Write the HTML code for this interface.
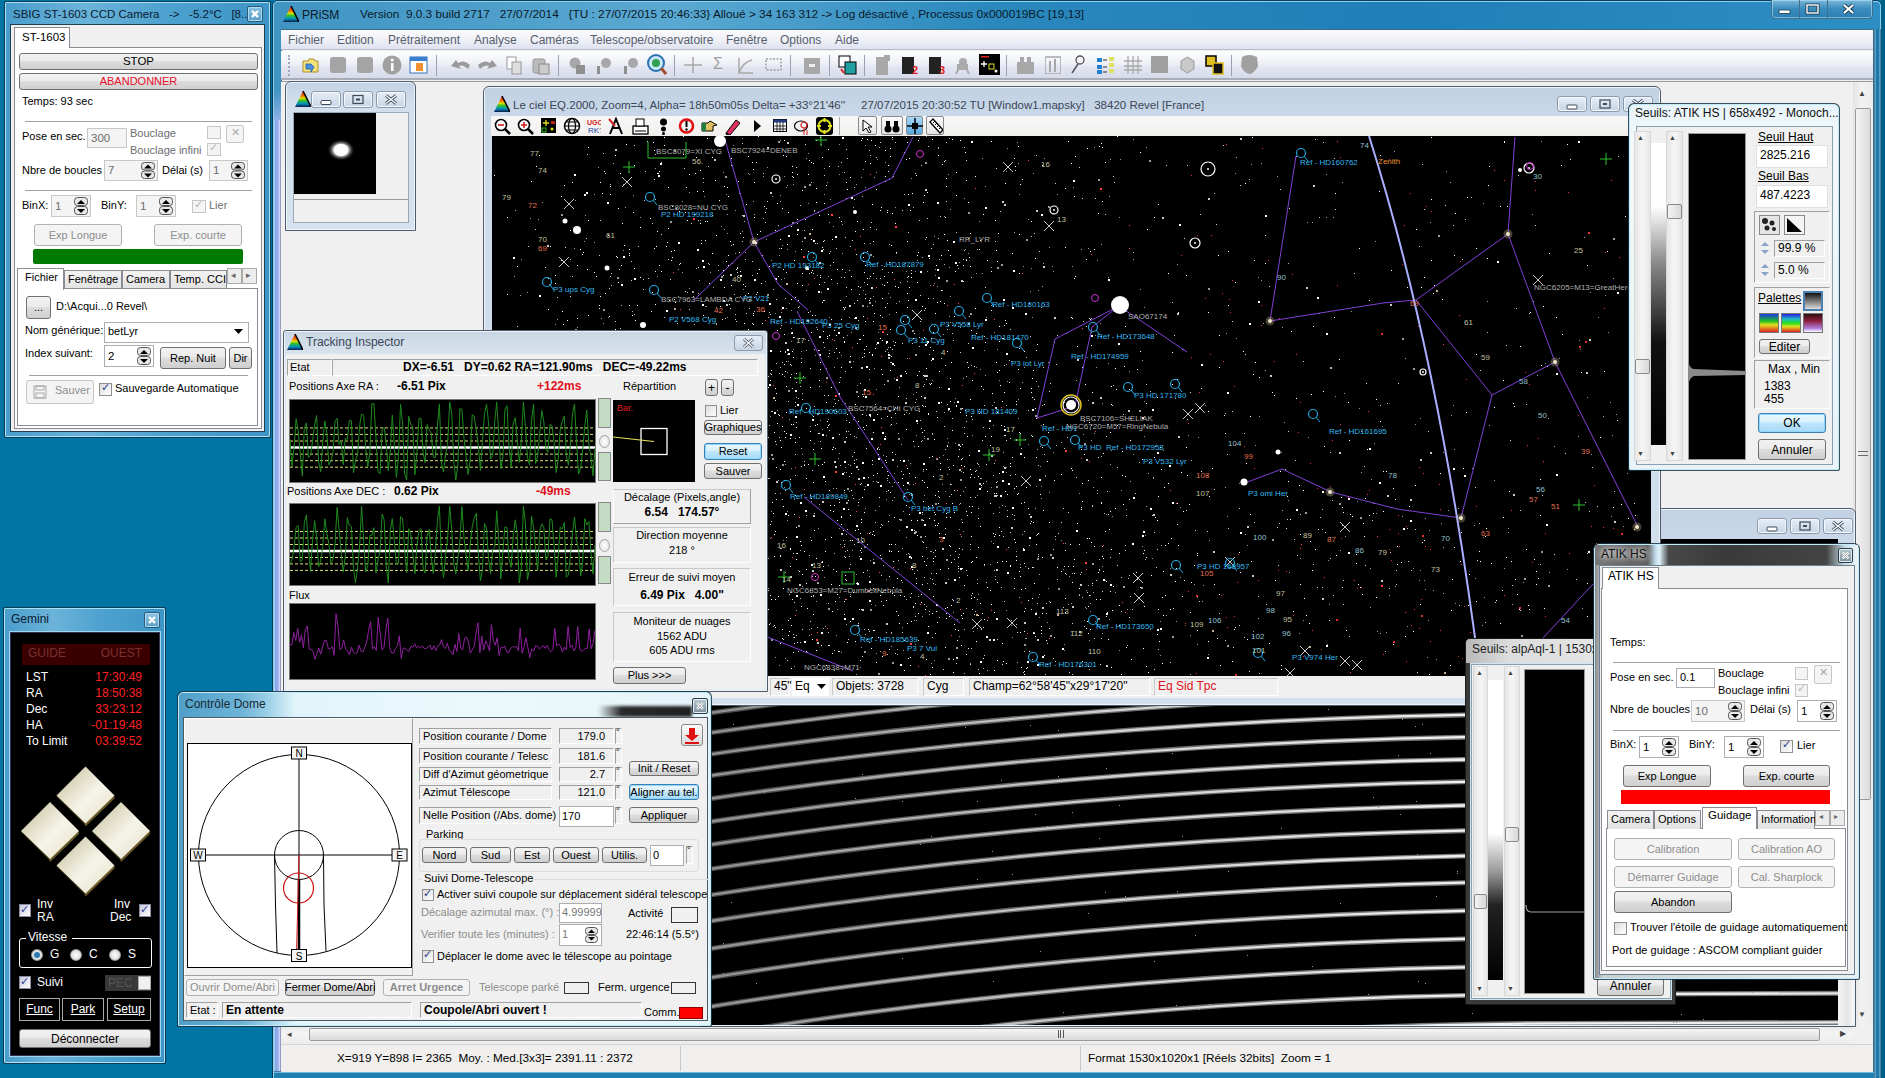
<!DOCTYPE html><html><head><meta charset="utf-8"><style>
*{margin:0;padding:0;box-sizing:border-box}
html,body{width:1885px;height:1078px;overflow:hidden;background:#0075a3;font-family:"Liberation Sans",sans-serif;font-size:11px;color:#000}
body>div,body>svg{position:absolute}
div{position:absolute}
.t{white-space:pre;line-height:1;}
.btn{border:1px solid #707070;border-radius:3px;background:linear-gradient(#f2f2f2 0%,#ebebeb 45%,#dddddd 50%,#cfcfcf 100%);}
.btnd{border:1px solid #adb2b5;border-radius:3px;background:#f4f4f4;}
.btnb{border:1px solid #3c7fb1;border-radius:3px;background:linear-gradient(#eaf6fd 0%,#d9f0fc 45%,#bee6fd 50%,#a7d9f5 100%);box-shadow:inset 0 0 0 1px #8fd8ff;}
.inp{background:#fff;border:1px solid #abadb3;border-top-color:#abadb3;}
.inpd{background:#f4f4f4;border:1px solid #c8c8c8;}
.pan{border:1px solid;border-color:#a0a0a0 #fff #fff #a0a0a0;}
.pan2{border:1px solid;border-color:#fff #a0a0a0 #a0a0a0 #fff;}
.cb{background:linear-gradient(135deg,#dcdcdc,#fff);border:1px solid #8f8f8f;}
.cbd{background:#f4f4f4;border:1px solid #c6c6c6;}
.gray{color:#8d8d8d}
.red{color:#e8001c}
.b{font-weight:bold}
.tb{background:linear-gradient(#ffffff 0%,#f0f0f7 40%,#e4e6f2 60%,#dcdfee 100%);}
</style></head><body><div style="left:272px;top:0px;width:1610px;height:1078px;background:linear-gradient(90deg,#3f94c2 0%,#5aa9d2 25%,#2a88bd 45%,#1f7fb8 70%,#2d8fc4 100%);border-left:1px solid #0a3a5a;border-right:1px solid #0a3a5a;border-top:1px solid #0b3f5e;border-radius:6px 6px 0 0;"></div><div style="left:273px;top:1px;width:1608px;height:1077px;border:1px solid #8fd0ef;border-bottom:none;border-radius:5px 5px 0 0;"></div><div style="left:274px;top:120px;width:7px;height:958px;background:linear-gradient(90deg,#b0dcfa 0%,#7fa6e0 25%,#9fb0f0 60%,#d8e0ff 85%,#5a6080 100%)"></div><div style="left:274px;top:90px;width:7px;height:30px;background:linear-gradient(rgba(0,0,0,0),#8fb0e8)"></div><div style="left:1874px;top:29px;width:7px;height:1049px;background:linear-gradient(90deg,#0a3050 0%,#8fd0f0 14%,#2078a8 28%,#2078a8 72%,#8fd0f0 86%,#0a3050 100%)"></div><div style="left:1881px;top:0px;width:4px;height:1078px;background:#005f88"></div><div style="left:274px;top:1071px;width:1600px;height:7px;background:linear-gradient(#0a3050 0%,#8fd0f0 15%,#1f80b0 35%)"></div><svg style="position:absolute;left:283px;top:6px;" width="16" height="16" viewBox="0 0 16 16"><defs><linearGradient id="pg2836" x1="0" y1="0" x2="0" y2="1"><stop offset="0" stop-color="#e01010"/><stop offset=".3" stop-color="#f07000"/><stop offset=".45" stop-color="#e0e000"/><stop offset=".6" stop-color="#30c030"/><stop offset=".8" stop-color="#0090c0"/><stop offset="1" stop-color="#101848"/></linearGradient></defs><polygon points="8.0,0 16,16 0,16" fill="url(#pg2836)"/><line x1="8.0" y1="0" x2="16" y2="16" stroke="#000" stroke-width="1.5"/></svg><div class="t" style="left:302px;top:9.44px;font-size:12px;color:#0a1a2a">PRiSM</div><div class="t" style="left:360px;top:9.47px;font-size:11.8px;color:#0a1a2a;word-spacing:0px">Version  9.0.3 build 2717   27/07/2014   {TU : 27/07/2015 20:46:33} Alloué &gt; 34 163 312 -&gt; Log désactivé , Processus 0x000019BC [19,13]</div><div style="left:1771px;top:0px;width:102px;height:19px;border:1px solid #3e6f8c;border-top:none;border-radius:0 0 4px 4px;background:linear-gradient(#7ab8da,#3a8cbc 50%,#2a80b4);box-shadow:inset 0 0 0 1px rgba(200,235,255,.5)"></div><div style="left:1799px;top:0px;width:1px;height:18px;background:#3e6f8c"></div><div style="left:1827px;top:0px;width:1px;height:18px;background:#3e6f8c"></div><svg style="position:absolute;left:1771px;top:0px;" width="102" height="19" viewBox="0 0 102 19"><rect x="8" y="10" width="11" height="3.5" fill="#fff" stroke="#1b3a50" stroke-width=".8"/><rect x="36" y="5" width="11" height="8" fill="none" stroke="#1b3a50" stroke-width="3"/><rect x="36" y="5" width="11" height="8" fill="none" stroke="#fff" stroke-width="1.4"/><path d="M73 5 L82 13 M82 5 L73 13" stroke="#1b3a50" stroke-width="4"/><path d="M73 5 L82 13 M82 5 L73 13" stroke="#fff" stroke-width="2.2"/></svg><div style="left:281px;top:29px;width:1593px;height:1043px;background:#f0f0f0;border:1px solid #3a6b8a;"></div><div style="left:281px;top:30px;width:1592px;height:20px;background:linear-gradient(#fbfbfd 0%,#f0f1f8 50%,#dfe3f0 100%);border-bottom:1px solid #b8bcc8"></div><div class="t" style="left:288px;top:34.44px;font-size:12px;color:#56606c">Fichier</div><div class="t" style="left:337px;top:34.44px;font-size:12px;color:#56606c">Edition</div><div class="t" style="left:388px;top:34.44px;font-size:12px;color:#56606c">Prétraitement</div><div class="t" style="left:474px;top:34.44px;font-size:12px;color:#56606c">Analyse</div><div class="t" style="left:530px;top:34.44px;font-size:12px;color:#56606c">Caméras</div><div class="t" style="left:590px;top:34.44px;font-size:12px;color:#56606c">Telescope/observatoire</div><div class="t" style="left:726px;top:34.44px;font-size:12px;color:#56606c">Fenêtre</div><div class="t" style="left:780px;top:34.44px;font-size:12px;color:#56606c">Options</div><div class="t" style="left:835px;top:34.44px;font-size:12px;color:#56606c">Aide</div><div style="left:281px;top:51px;width:1592px;height:29px;background:linear-gradient(#fdfdfe 0%,#eef0f7 45%,#e2e5f1 60%,#d7dbe9 100%);border-top:1px solid #fff;border-bottom:2px solid #a9adb8"></div><div style="left:288px;top:55px;width:2px;height:21px;border-left:2px dotted #a0a8c0"></div><div style="left:281px;top:81px;width:1592px;height:963px;background:#f0f0f0;border-top:1px solid #9a9a9a"></div><div style="left:1853px;top:82px;width:20px;height:945px;background:linear-gradient(90deg,#e3e3e3,#f2f2f2 40%,#ececec);"></div><div style="left:1855px;top:108px;width:16px;height:692px;border:1px solid #9a9a9a;border-radius:2px;background:linear-gradient(90deg,#f3f3f3,#dcdcdc);"></div><div style="left:1858px;top:451px;width:10px;height:5px;border-top:1px solid #666;border-bottom:1px solid #666;"></div><div class="t" style="left:1858px;top:89.96px;font-size:8px;color:#444">▲</div><div class="t" style="left:1858px;top:1010.96px;font-size:8px;color:#444">▼</div><div style="left:281px;top:1026px;width:1572px;height:18px;background:linear-gradient(#e8e8e8,#f4f4f4 40%,#ececec);"></div><div class="t" style="left:287px;top:1029.83px;font-size:9px;color:#444">◂</div><div style="left:309px;top:1028px;width:1511px;height:13px;border:1px solid #9a9a9a;border-radius:2px;background:linear-gradient(#f6f6f6,#dadada);"></div><div style="left:1058px;top:1030px;width:6px;height:8px;border-left:1px solid #555;border-right:1px solid #555;"></div><div style="left:1060px;top:1030px;width:1px;height:8px;background:#555"></div><div class="t" style="left:1840px;top:1029.96px;font-size:8px;color:#444">▶</div><div style="left:281px;top:1044px;width:1592px;height:28px;background:#f0efee;border-top:1px solid #d4d4d4"></div><div style="left:1080px;top:1046px;width:1px;height:25px;background:#c8c8c8"></div><div class="t" style="left:337px;top:1053.47px;font-size:11.8px;">X=919 Y=898 I= 2365  Moy. : Med.[3x3]= 2391.11 : 2372</div><div style="left:680px;top:1046px;width:1px;height:25px;background:#c8c8c8"></div><div class="t" style="left:1088px;top:1053.47px;font-size:11.8px;">Format 1530x1020x1 [Réels 32bits]  Zoom = 1</div><div style="left:4px;top:1px;width:267px;height:437px;background:#123a52;border-radius:2px"></div><div style="left:5px;top:2px;width:265px;height:435px;background:linear-gradient(90deg,#4a9dcc 0%,#6bb3d9 30%,#4ea2cf 60%,#3d95c6 100%);border:1px solid #a8e2f8;border-radius:1px"></div><div class="t" style="left:13px;top:8.5px;font-size:11.5px;color:#0a1a30">SBIG ST-1603 CCD Camera   -&gt;   -5.2°C   [8...</div><div style="left:247px;top:6px;width:16px;height:16px;border:1px solid #2d5a76;border-radius:2px;background:linear-gradient(#8cc4e2,#5a9ec8);box-shadow:inset 0 0 0 1px #a8dcf4;"></div><svg style="position:absolute;left:247px;top:6px;" width="16" height="16" viewBox="0 0 16 16"><path d="M5.0 5.0 L11.0 11.0 M11.0 5.0 L5.0 11.0" stroke="#fff" stroke-width="2.4"/></svg><div style="left:10px;top:24px;width:255px;height:408px;background:#f0f0f0;border:1px solid #1f3f55"></div><div style="left:14px;top:27px;width:56px;height:21px;background:#fff;border:1px solid #898c95;border-bottom:none"></div><div class="t" style="left:22px;top:31.5px;font-size:11.5px;">ST-1603</div><div style="left:14px;top:47px;width:248px;height:382px;background:#fff;border:1px solid #898c95"></div><div style="left:15px;top:47px;width:54px;height:2px;background:#fff"></div><div class="btn" style="left:19px;top:53px;width:239px;height:17px;"></div><div class="t" style="left:19px;width:239px;text-align:center;top:55.8px;font-size:11.5px;color:#000">STOP</div><div class="btn" style="left:19px;top:73px;width:239px;height:17px;"></div><div class="t" style="left:19px;width:239px;text-align:center;top:76.07px;font-size:11px;color:#e8102a">ABANDONNER</div><div class="t" style="left:22px;top:95.57px;font-size:11px;">Temps: 93 sec</div><div style="left:25px;top:121px;width:227px;height:1px;background:#a0a0a0"></div><div class="t" style="left:22px;top:130.57px;font-size:11px;">Pose en sec.</div><div class="inpd" style="left:87px;top:128px;width:40px;height:20px;"></div><div class="t" style="left:91px;top:132.5px;font-size:11.5px;color:#6d6d6d">300</div><div class="t" style="left:130px;top:127.57px;font-size:11px;color:#6d6d6d">Bouclage</div><div class="cbd" style="left:207px;top:126px;width:14px;height:13px;"></div><div style="left:226px;top:125px;width:18px;height:18px;border:1px solid #c6c6c6;border-radius:2px;background:#f4f4f4"></div><div class="t" style="left:231px;top:126.57px;font-size:11px;color:#aaa">✕</div><div class="t" style="left:130px;top:144.57px;font-size:11px;color:#6d6d6d">Bouclage infini</div><div class="cbd" style="left:207px;top:143px;width:14px;height:13px;"></div><div class="t" style="left:209px;top:141.57px;font-size:11px;color:#b6b6b6">✓</div><div class="t" style="left:22px;top:164.57px;font-size:11px;">Nbre de boucles</div><div class="inpd" style="left:104px;top:160px;width:54px;height:21px;"></div><div class="t" style="left:108px;top:165.0px;font-size:11.5px;color:#6d6d6d">7</div><svg style="position:absolute;left:141px;top:162px;" width="14" height="17" viewBox="0 0 14 17"><rect x="0.5" y="0.5" width="13" height="7.5" rx="3" fill="#e8e8e8" stroke="#555"/><rect x="0.5" y="9.0" width="13" height="7.5" rx="3" fill="#e8e8e8" stroke="#555"/><path d="M3 6.5 L7 2.5 L11 6.5Z" fill="#000"/><path d="M3 11.5 L7 15.5 L11 11.5Z" fill="#000"/></svg><div class="t" style="left:162px;top:164.57px;font-size:11px;">Délai (s)</div><div class="inpd" style="left:209px;top:160px;width:39px;height:21px;"></div><div class="t" style="left:213px;top:165.0px;font-size:11.5px;color:#6d6d6d">1</div><svg style="position:absolute;left:231px;top:162px;" width="14" height="17" viewBox="0 0 14 17"><rect x="0.5" y="0.5" width="13" height="7.5" rx="3" fill="#e8e8e8" stroke="#555"/><rect x="0.5" y="9.0" width="13" height="7.5" rx="3" fill="#e8e8e8" stroke="#555"/><path d="M3 6.5 L7 2.5 L11 6.5Z" fill="#000"/><path d="M3 11.5 L7 15.5 L11 11.5Z" fill="#000"/></svg><div style="left:25px;top:190px;width:227px;height:1px;background:#a0a0a0"></div><div class="t" style="left:22px;top:199.57px;font-size:11px;">BinX:</div><div class="inpd" style="left:51px;top:195px;width:40px;height:22px;"></div><div class="t" style="left:55px;top:200.5px;font-size:11.5px;color:#6d6d6d">1</div><svg style="position:absolute;left:74px;top:197px;" width="14" height="18" viewBox="0 0 14 18"><rect x="0.5" y="0.5" width="13" height="8.0" rx="3" fill="#e8e8e8" stroke="#555"/><rect x="0.5" y="9.5" width="13" height="8.0" rx="3" fill="#e8e8e8" stroke="#555"/><path d="M3 7.0 L7 3.0 L11 7.0Z" fill="#000"/><path d="M3 12.0 L7 16.0 L11 12.0Z" fill="#000"/></svg><div class="t" style="left:101px;top:199.57px;font-size:11px;">BinY:</div><div class="inpd" style="left:136px;top:195px;width:40px;height:22px;"></div><div class="t" style="left:140px;top:200.5px;font-size:11.5px;color:#6d6d6d">1</div><svg style="position:absolute;left:159px;top:197px;" width="14" height="18" viewBox="0 0 14 18"><rect x="0.5" y="0.5" width="13" height="8.0" rx="3" fill="#e8e8e8" stroke="#555"/><rect x="0.5" y="9.5" width="13" height="8.0" rx="3" fill="#e8e8e8" stroke="#555"/><path d="M3 7.0 L7 3.0 L11 7.0Z" fill="#000"/><path d="M3 12.0 L7 16.0 L11 12.0Z" fill="#000"/></svg><div class="cbd" style="left:192px;top:200px;width:14px;height:13px;"></div><div class="t" style="left:194px;top:198.57px;font-size:11px;color:#b6b6b6">✓</div><div class="t" style="left:209px;top:199.57px;font-size:11px;color:#6d6d6d">Lier</div><div class="btnd" style="left:34px;top:224px;width:88px;height:22px;"></div><div class="t" style="left:34px;width:88px;text-align:center;top:229.57px;font-size:11px;color:#8d8d8d">Exp Longue</div><div class="btnd" style="left:154px;top:224px;width:88px;height:22px;"></div><div class="t" style="left:154px;width:88px;text-align:center;top:229.57px;font-size:11px;color:#8d8d8d">Exp. courte</div><div style="left:33px;top:249px;width:210px;height:15px;background:#007a00;border-radius:2px"></div><div style="left:17px;top:288px;width:241px;height:138px;background:#fff;border:1px solid #898c95"></div><div style="left:17px;top:268px;width:47px;height:22px;background:#fff;border:1px solid #898c95;border-bottom:none"></div><div style="left:64px;top:270px;width:58px;height:18px;background:linear-gradient(#f3f3f3,#e3e3e3);border:1px solid #898c95;border-bottom:none"></div><div class="t" style="left:68px;top:273.57px;font-size:11px;">Fenêtrage</div><div style="left:122px;top:270px;width:48px;height:18px;background:linear-gradient(#f3f3f3,#e3e3e3);border:1px solid #898c95;border-bottom:none"></div><div class="t" style="left:126px;top:273.57px;font-size:11px;">Camera</div><div style="left:170px;top:270px;width:57px;height:18px;background:linear-gradient(#f3f3f3,#e3e3e3);border:1px solid #898c95;border-bottom:none"></div><div class="t" style="left:174px;top:273.57px;font-size:11px;">Temp. CCI</div><div style="left:227px;top:268px;width:15px;height:16px;border:1px solid #aaa;background:#ececec"></div><div style="left:242px;top:268px;width:15px;height:16px;border:1px solid #aaa;background:#ececec"></div><div class="t" style="left:231px;top:270.83px;font-size:9px;color:#666">◂</div><div class="t" style="left:246px;top:270.83px;font-size:9px;color:#666">▸</div><div class="t" style="left:25px;top:271.57px;font-size:11px;">Fichier</div><div class="btn" style="left:26px;top:296px;width:25px;height:23px;"></div><div class="t" style="left:26px;width:25px;text-align:center;top:302.07px;font-size:11px;">...</div><div class="t" style="left:56px;top:300.57px;font-size:11px;">D:\Acqui...0 Revel\</div><div class="t" style="left:25px;top:324.57px;font-size:11px;">Nom générique:</div><div class="inp" style="left:104px;top:322px;width:145px;height:21px;"></div><div class="t" style="left:108px;top:325.57px;font-size:11px;">betLyr</div><svg style="position:absolute;left:234px;top:329px;" width="10" height="6" viewBox="0 0 10 6"><path d="M0 0 L9 0 L4.5 5Z" fill="#000"/></svg><div class="t" style="left:25px;top:347.57px;font-size:11px;">Index suivant:</div><div class="inp" style="left:104px;top:345px;width:50px;height:22px;"></div><div class="t" style="left:108px;top:350.5px;font-size:11.5px;">2</div><svg style="position:absolute;left:137px;top:347px;" width="14" height="18" viewBox="0 0 14 18"><rect x="0.5" y="0.5" width="13" height="8.0" rx="3" fill="#e8e8e8" stroke="#555"/><rect x="0.5" y="9.5" width="13" height="8.0" rx="3" fill="#e8e8e8" stroke="#555"/><path d="M3 7.0 L7 3.0 L11 7.0Z" fill="#000"/><path d="M3 12.0 L7 16.0 L11 12.0Z" fill="#000"/></svg><div class="btn" style="left:160px;top:347px;width:66px;height:22px;"></div><div class="t" style="left:160px;width:66px;text-align:center;top:352.57px;font-size:11px;">Rep. Nuit</div><div class="btn" style="left:229px;top:347px;width:23px;height:22px;"></div><div class="t" style="left:229px;width:23px;text-align:center;top:352.57px;font-size:11px;">Dir</div><div style="left:29px;top:375px;width:219px;height:1px;background:#a0a0a0"></div><div style="left:26px;top:380px;width:68px;height:24px;border:1px solid #c6c6c6;border-radius:3px;background:#f4f4f4"></div><svg style="position:absolute;left:33px;top:385px;" width="14" height="14" viewBox="0 0 14 14"><rect x="1" y="1" width="12" height="12" fill="none" stroke="#aaa"/><rect x="3" y="1" width="8" height="4" fill="none" stroke="#aaa"/><rect x="3" y="8" width="8" height="5" fill="none" stroke="#aaa"/></svg><div class="t" style="left:55px;top:384.57px;font-size:11px;color:#8d8d8d">Sauver</div><div class="cb" style="left:99px;top:383px;width:13px;height:13px;"></div><div class="t" style="left:101px;top:381.57px;font-size:11px;color:#2a3a8a">✓</div><div class="t" style="left:115px;top:382.57px;font-size:11px;">Sauvegarde Automatique</div><div style="left:3px;top:607px;width:163px;height:457px;background:#123a52;border-radius:2px"></div><div style="left:4px;top:608px;width:161px;height:455px;background:linear-gradient(90deg,#4a9dcc 0%,#6bb3d9 30%,#4ea2cf 60%,#3d95c6 100%);border:1px solid #a8e2f8;border-radius:1px"></div><div class="t" style="left:11px;top:613.44px;font-size:12px;color:#0a1a30">Gemini</div><div style="left:144px;top:612px;width:16px;height:16px;border:1px solid #2d5a76;border-radius:2px;background:linear-gradient(#8cc4e2,#5a9ec8);box-shadow:inset 0 0 0 1px #a8dcf4;"></div><svg style="position:absolute;left:144px;top:612px;" width="16" height="16" viewBox="0 0 16 16"><path d="M5.0 5.0 L11.0 11.0 M11.0 5.0 L5.0 11.0" stroke="#fff" stroke-width="2.4"/></svg><div style="left:9px;top:631px;width:152px;height:426px;background:#000;border:1px solid #9fd6ee;box-shadow:inset 0 0 0 1px #335"></div><div style="left:22px;top:644px;width:128px;height:21px;background:#3a0000"></div><div class="t" style="left:28px;top:647.44px;font-size:12px;color:#7a3030">GUIDE</div><div class="t" style="left:-158px;width:300px;text-align:right;top:647.44px;font-size:12px;color:#7a3030">OUEST</div><div class="t" style="left:26px;top:671.44px;font-size:12px;color:#fff">LST</div><div class="t" style="left:-158px;width:300px;text-align:right;top:671.44px;font-size:12px;color:#ff2020">17:30:49</div><div class="t" style="left:26px;top:687.44px;font-size:12px;color:#fff">RA</div><div class="t" style="left:-158px;width:300px;text-align:right;top:687.44px;font-size:12px;color:#ff2020">18:50:38</div><div class="t" style="left:26px;top:703.44px;font-size:12px;color:#fff">Dec</div><div class="t" style="left:-158px;width:300px;text-align:right;top:703.44px;font-size:12px;color:#ff2020">33:23:12</div><div class="t" style="left:26px;top:719.44px;font-size:12px;color:#fff">HA</div><div class="t" style="left:-158px;width:300px;text-align:right;top:719.44px;font-size:12px;color:#ff2020">-01:19:48</div><div class="t" style="left:26px;top:735.44px;font-size:12px;color:#fff">To Limit</div><div class="t" style="left:-158px;width:300px;text-align:right;top:735.44px;font-size:12px;color:#ff2020">03:39:52</div><svg style="position:absolute;left:10px;top:765px;" width="150" height="135" viewBox="0 0 150 135"><defs><linearGradient id="dg" x1="0" y1="0" x2="1" y2="1"><stop offset="0" stop-color="#c2bc94"/><stop offset=".55" stop-color="#f6f4ea"/><stop offset="1" stop-color="#e4e0c8"/></linearGradient></defs><polygon points="75.5,2.5 104.5,31.5 75.5,60.5 46.5,31.5" fill="#3a3010"/><polygon points="104.5,30.5 104.5,33.5 75.5,61.5 74.5,57.5" fill="#6a5a28"/><polygon points="75.5,1.5 104.5,30.5 75.5,58.5 46.5,30.5" fill="url(#dg)"/><polygon points="40,38 69,67 40,96 11,67" fill="#3a3010"/><polygon points="69,66 69,69 40,97 39,93" fill="#6a5a28"/><polygon points="40,37 69,66 40,94 11,66" fill="url(#dg)"/><polygon points="111,38 140,67 111,96 82,67" fill="#3a3010"/><polygon points="140,66 140,69 111,97 110,93" fill="#6a5a28"/><polygon points="111,37 140,66 111,94 82,66" fill="url(#dg)"/><polygon points="75.5,72.5 104.5,101.5 75.5,130.5 46.5,101.5" fill="#3a3010"/><polygon points="104.5,100.5 104.5,103.5 75.5,131.5 74.5,127.5" fill="#6a5a28"/><polygon points="75.5,71.5 104.5,100.5 75.5,128.5 46.5,100.5" fill="url(#dg)"/></svg><div style="left:19px;top:904px;width:12px;height:13px;background:linear-gradient(135deg,#c8c8d8,#fff);border:1px solid #8a8aa0"></div><div class="t" style="left:20px;top:903.57px;font-size:11px;color:#2a3a9a">✓</div><div style="left:139px;top:904px;width:12px;height:13px;background:linear-gradient(135deg,#c8c8d8,#fff);border:1px solid #8a8aa0"></div><div class="t" style="left:140px;top:903.57px;font-size:11px;color:#2a3a9a">✓</div><div style="left:19px;top:976px;width:12px;height:13px;background:linear-gradient(135deg,#c8c8d8,#fff);border:1px solid #8a8aa0"></div><div class="t" style="left:20px;top:975.57px;font-size:11px;color:#2a3a9a">✓</div><div class="t" style="left:37px;top:898.44px;font-size:12px;color:#fff">Inv</div><div class="t" style="left:37px;top:911.44px;font-size:12px;color:#fff">RA</div><div class="t" style="left:114px;top:898.44px;font-size:12px;color:#fff">Inv</div><div class="t" style="left:110px;top:911.44px;font-size:12px;color:#fff">Dec</div><div style="left:19px;top:938px;width:133px;height:30px;border:1px solid #fff;border-radius:3px"></div><div style="left:26px;top:930px;width:46px;height:10px;background:#000"></div><div class="t" style="left:28px;top:931.44px;font-size:12px;color:#fff">Vitesse</div><div style="left:31px;top:949px;width:12px;height:12px;border-radius:50%;border:1px solid #999;background:radial-gradient(#fff,#ccc)"></div><div class="t" style="left:50px;top:948.44px;font-size:12px;color:#fff">G</div><div style="left:70px;top:949px;width:12px;height:12px;border-radius:50%;border:1px solid #999;background:radial-gradient(#fff,#ccc)"></div><div class="t" style="left:89px;top:948.44px;font-size:12px;color:#fff">C</div><div style="left:109px;top:949px;width:12px;height:12px;border-radius:50%;border:1px solid #999;background:radial-gradient(#fff,#ccc)"></div><div class="t" style="left:128px;top:948.44px;font-size:12px;color:#fff">S</div><div style="left:34px;top:952px;width:6px;height:6px;border-radius:50%;background:#2a7ab0"></div><div class="t" style="left:37px;top:976.44px;font-size:12px;color:#fff">Suivi</div><div style="left:105px;top:975px;width:46px;height:16px;background:#383838"></div><div class="t" style="left:108px;top:977.44px;font-size:12px;color:#555">PEC</div><div style="left:138px;top:976px;width:13px;height:14px;background:#f0f0f0;border:1px solid #aaa"></div><div style="left:19px;top:998px;width:41px;height:23px;border:1px solid #aaa"></div><div class="t" style="left:19px;width:41px;text-align:center;top:1003.44px;font-size:12px;color:#fff;text-decoration:underline">Func</div><div style="left:62px;top:998px;width:42px;height:23px;border:1px solid #aaa"></div><div class="t" style="left:62px;width:42px;text-align:center;top:1003.44px;font-size:12px;color:#fff;text-decoration:underline">Park</div><div style="left:107px;top:998px;width:44px;height:23px;border:1px solid #aaa"></div><div class="t" style="left:107px;width:44px;text-align:center;top:1003.44px;font-size:12px;color:#fff;text-decoration:underline">Setup</div><div class="btn" style="left:19px;top:1029px;width:132px;height:19px;"></div><div class="t" style="left:19px;width:132px;text-align:center;top:1032.54px;font-size:12px;">Déconnecter</div><svg style="position:absolute;left:302px;top:57px;" width="17" height="17" viewBox="0 0 17 17"><path d="M1 4 L6 4 L7 2 L12 2 L13 4 L16 4 L16 15 L1 15Z" fill="#f4e27a" stroke="#b09030"/><path d="M4 7 L9 7 L12 10 L9 15 L9 12 L4 12Z" fill="#4a90e0" stroke="#2060b0" stroke-width=".8"/></svg><svg style="position:absolute;left:330px;top:57px;" width="16" height="16" viewBox="0 0 16 16"><rect x="0" y="0" width="16" height="16" rx="3" fill="#a4a4a4"/></svg><svg style="position:absolute;left:357px;top:57px;" width="16" height="16" viewBox="0 0 16 16"><rect x="0" y="0" width="16" height="16" rx="3" fill="#a4a4a4"/></svg><svg style="position:absolute;left:382px;top:55px;" width="20" height="20" viewBox="0 0 20 20"><circle cx="10" cy="10" r="9.5" fill="#a0a0a0"/><rect x="9" y="8" width="2.5" height="8" fill="#fff"/><circle cx="10.2" cy="5" r="1.6" fill="#fff"/></svg><svg style="position:absolute;left:409px;top:55px;" width="19" height="19" viewBox="0 0 19 19"><rect x="1" y="2" width="17" height="16" fill="#fff" stroke="#3070c0"/><rect x="1" y="2" width="17" height="4" fill="#3a80d0"/><rect x="7" y="8" width="7" height="8" fill="#f09030"/></svg><div style="left:436px;top:55px;width:1px;height:21px;background:#9aa0b0"></div><div style="left:558px;top:55px;width:1px;height:21px;background:#9aa0b0"></div><div style="left:674px;top:55px;width:1px;height:21px;background:#9aa0b0"></div><div style="left:790px;top:55px;width:1px;height:21px;background:#9aa0b0"></div><div style="left:829px;top:55px;width:1px;height:21px;background:#9aa0b0"></div><div style="left:864px;top:55px;width:1px;height:21px;background:#9aa0b0"></div><div style="left:1006px;top:55px;width:1px;height:21px;background:#9aa0b0"></div><div style="left:1231px;top:55px;width:1px;height:21px;background:#9aa0b0"></div><svg style="position:absolute;left:450px;top:57px;" width="21" height="16" viewBox="0 0 21 16"><path d="M1 9 L6 3 L8 6 Q14 2 20 8 L18 12 Q13 7 9 9 L11 12Z" fill="#9a9a9a"/></svg><svg style="position:absolute;left:477px;top:57px;" width="21" height="16" viewBox="0 0 21 16"><path d="M20 9 L15 3 L13 6 Q7 2 1 8 L3 12 Q8 7 12 9 L10 12Z" fill="#9a9a9a"/></svg><svg style="position:absolute;left:506px;top:56px;" width="16" height="19" viewBox="0 0 16 19"><rect x="1" y="1" width="9" height="12" fill="#fff" stroke="#999"/><rect x="6" y="6" width="9" height="12" fill="#ddd" stroke="#999"/></svg><svg style="position:absolute;left:532px;top:56px;" width="18" height="19" viewBox="0 0 18 19"><rect x="1" y="3" width="12" height="14" rx="2" fill="#bbb" stroke="#999"/><rect x="7" y="8" width="10" height="10" fill="#ccc" stroke="#888"/></svg><svg style="position:absolute;left:569px;top:56px;" width="17" height="19" viewBox="0 0 17 19"><circle cx="6" cy="7" r="5.5" fill="#a8a8a8"/><rect x="7" y="9" width="9" height="9" fill="#909090"/></svg><svg style="position:absolute;left:596px;top:56px;" width="17" height="19" viewBox="0 0 17 19"><circle cx="10" cy="7" r="5" fill="#a8a8a8"/><rect x="1" y="10" width="3" height="8" fill="#909090"/></svg><svg style="position:absolute;left:623px;top:56px;" width="17" height="19" viewBox="0 0 17 19"><circle cx="10" cy="7" r="5" fill="#a8a8a8"/><rect x="1" y="10" width="3" height="8" fill="#909090"/></svg><svg style="position:absolute;left:647px;top:54px;" width="20" height="21" viewBox="0 0 20 21"><circle cx="9" cy="9" r="8" fill="#c8e8f8" stroke="#2a70b0" stroke-width="2"/><circle cx="9" cy="9" r="4" fill="#30a050"/><line x1="14" y1="14" x2="19" y2="20" stroke="#a05030" stroke-width="3"/></svg><svg style="position:absolute;left:682px;top:56px;" width="22" height="18" viewBox="0 0 22 18"><path d="M11 1 L11 17 M2 9 L20 9" stroke="#a8a8a8" stroke-width="1.5"/></svg><div class="t" style="left:713px;top:55.92px;font-size:16px;color:#a0a0a0">Σ</div><svg style="position:absolute;left:737px;top:56px;" width="17" height="18" viewBox="0 0 17 18"><path d="M2 2 L2 17 L16 17 M2 17 Q6 6 15 4" fill="none" stroke="#a8a8a8" stroke-width="1.5"/></svg><svg style="position:absolute;left:765px;top:58px;" width="17" height="13" viewBox="0 0 17 13"><rect x="1" y="1" width="15" height="11" fill="none" stroke="#a0a0a0" stroke-width="1.5" stroke-dasharray="2,1.5"/></svg><svg style="position:absolute;left:804px;top:56px;" width="16" height="18" viewBox="0 0 16 18"><rect x="0" y="2" width="16" height="16" fill="#a8a8a8"/><rect x="5" y="8" width="6" height="3" fill="#eee"/></svg><svg style="position:absolute;left:838px;top:55px;" width="19" height="20" viewBox="0 0 19 20"><rect x="1" y="1" width="11" height="11" fill="#fff" stroke="#000"/><rect x="7" y="7" width="11" height="12" fill="#20a0a0" stroke="#000"/><path d="M3 14 L6 18" stroke="#e02020" stroke-width="2"/></svg><svg style="position:absolute;left:874px;top:55px;" width="16" height="20" viewBox="0 0 16 20"><rect x="2" y="2" width="12" height="18" fill="#a8a8a8"/><rect x="10" y="0" width="6" height="6" fill="#a8a8a8"/></svg><svg style="position:absolute;left:901px;top:55px;" width="17" height="20" viewBox="0 0 17 20"><rect x="1" y="2" width="12" height="17" fill="#222"/><text x="11" y="19" font-size="11" fill="#e02020" font-family="Liberation Sans" font-weight="bold">2</text></svg><svg style="position:absolute;left:928px;top:55px;" width="17" height="20" viewBox="0 0 17 20"><rect x="1" y="2" width="12" height="17" fill="#222"/><text x="11" y="19" font-size="11" fill="#e02020" font-family="Liberation Sans" font-weight="bold">3</text></svg><svg style="position:absolute;left:954px;top:56px;" width="17" height="18" viewBox="0 0 17 18"><circle cx="9" cy="6" r="4" fill="#aaa"/><rect x="3" y="8" width="11" height="6" fill="#aaa"/><path d="M4 14 L2 18 M13 14 L15 18" stroke="#aaa" stroke-width="2"/></svg><svg style="position:absolute;left:979px;top:54px;" width="21" height="21" viewBox="0 0 21 21"><rect x="0" y="0" width="21" height="21" fill="#000"/><rect x="2" y="2" width="8" height="1.5" fill="#e02020"/><path d="M5 7 L5 13 M2 10 L8 10" stroke="#fff" stroke-width="1.3"/><rect x="10" y="10" width="5" height="5" fill="none" stroke="#e0e020"/><circle cx="17" cy="17" r="1.5" fill="#fff"/></svg><svg style="position:absolute;left:1017px;top:56px;" width="17" height="18" viewBox="0 0 17 18"><rect x="0" y="6" width="17" height="12" fill="#a8a8a8"/><rect x="3" y="1" width="4" height="8" fill="#a8a8a8"/><rect x="10" y="1" width="4" height="8" fill="#a8a8a8"/></svg><svg style="position:absolute;left:1045px;top:56px;" width="16" height="18" viewBox="0 0 16 18"><rect x="0" y="1" width="16" height="17" fill="none" stroke="#a8a8a8" stroke-width="1.5"/><rect x="4" y="5" width="2" height="11" fill="#a8a8a8"/><rect x="9" y="3" width="2" height="13" fill="#a8a8a8"/></svg><svg style="position:absolute;left:1070px;top:55px;" width="16" height="20" viewBox="0 0 16 20"><circle cx="10" cy="5" r="4" fill="none" stroke="#555" stroke-width="1.3"/><path d="M8 9 L2 18" stroke="#555" stroke-width="1.5"/></svg><svg style="position:absolute;left:1097px;top:56px;" width="18" height="18" viewBox="0 0 18 18"><rect x="0" y="2" width="5" height="4" fill="#2080d0"/><rect x="0" y="9" width="5" height="4" fill="#2080d0"/><rect x="0" y="14" width="5" height="4" fill="#2080d0"/><path d="M6 4 L10 4 M6 11 L10 11 M6 16 L10 16" stroke="#333"/><rect x="12" y="1" width="5" height="4" fill="#e0e060"/><rect x="12" y="7" width="5" height="4" fill="#e0e060"/><rect x="12" y="13" width="5" height="4" fill="#e0e060"/></svg><svg style="position:absolute;left:1124px;top:56px;" width="18" height="18" viewBox="0 0 18 18"><path d="M4 0 L4 18 M9 0 L9 18 M14 0 L14 18 M0 5 L18 5 M0 10 L18 10 M0 14 L18 14" stroke="#aaa" stroke-width="1.3"/></svg><svg style="position:absolute;left:1151px;top:56px;" width="17" height="17" viewBox="0 0 17 17"><rect x="0" y="0" width="17" height="17" rx="0" fill="#a0a0a0"/></svg><svg style="position:absolute;left:1180px;top:56px;" width="15" height="18" viewBox="0 0 15 18"><path d="M7.5 1 L14 5 L14 13 L7.5 17 L1 13 L1 5Z" fill="#c8c8c8" stroke="#999"/></svg><svg style="position:absolute;left:1205px;top:55px;" width="19" height="20" viewBox="0 0 19 20"><rect x="1" y="1" width="10" height="10" fill="#e0c020" stroke="#000" stroke-width="1.5"/><rect x="8" y="8" width="10" height="11" fill="#111" stroke="#e0c020" stroke-width="1.5"/></svg><svg style="position:absolute;left:1239px;top:54px;" width="21" height="21" viewBox="0 0 21 21"><path d="M3 3 Q10 -1 18 3 L19 12 Q15 20 10 20 Q4 18 2 12Z" fill="#a0a0a0"/></svg><div style="left:285px;top:81px;width:131px;height:150px;background:linear-gradient(#c2d3e4 0%,#d3dfec 15%,#d6e2ee 100%);border:1px solid #4f5c6b;border-radius:6px 6px 0 0;box-shadow:inset 0 0 0 1px #eef4fa"></div><svg style="position:absolute;left:295px;top:91px;" width="16" height="16" viewBox="0 0 16 16"><defs><linearGradient id="pg29591" x1="0" y1="0" x2="0" y2="1"><stop offset="0" stop-color="#e01010"/><stop offset=".3" stop-color="#f07000"/><stop offset=".45" stop-color="#e0e000"/><stop offset=".6" stop-color="#30c030"/><stop offset=".8" stop-color="#0090c0"/><stop offset="1" stop-color="#101848"/></linearGradient></defs><polygon points="8.0,0 16,16 0,16" fill="url(#pg29591)"/><line x1="8.0" y1="0" x2="16" y2="16" stroke="#000" stroke-width="1.5"/></svg><div style="left:311px;top:91px;width:30px;height:17px;border:1px solid #8d9aab;border-radius:3px;background:linear-gradient(#e6eef6,#c7d5e4);box-shadow:inset 0 0 0 1px #f4f8fc"></div><svg style="position:absolute;left:311px;top:91px;" width="30" height="17" viewBox="0 0 30 17"><rect x="10.0" y="9.5" width="10" height="4" rx="1" fill="#fff" stroke="#3c4a5a" stroke-width="1"/></svg><div style="left:343px;top:91px;width:30px;height:17px;border:1px solid #8d9aab;border-radius:3px;background:linear-gradient(#e6eef6,#c7d5e4);box-shadow:inset 0 0 0 1px #f4f8fc"></div><svg style="position:absolute;left:343px;top:91px;" width="30" height="17" viewBox="0 0 30 17"><rect x="10.0" y="4.5" width="10" height="8" fill="none" stroke="#3c4a5a" stroke-width="1.2"/><rect x="13.0" y="7.5" width="4" height="2" fill="#3c4a5a"/></svg><div style="left:376px;top:91px;width:30px;height:17px;border:1px solid #8d9aab;border-radius:3px;background:linear-gradient(#e6eef6,#c7d5e4);box-shadow:inset 0 0 0 1px #f4f8fc"></div><svg style="position:absolute;left:376px;top:91px;" width="30" height="17" viewBox="0 0 30 17"><path d="M10.0 4.5 L20.0 12.5 M20.0 4.5 L10.0 12.5" stroke="#3c4a5a" stroke-width="3"/><path d="M10.0 4.5 L20.0 12.5 M20.0 4.5 L10.0 12.5" stroke="#fff" stroke-width="1.4"/></svg><div style="left:293px;top:112px;width:116px;height:111px;background:#f0f0f0;border:1px solid #9aa8b8"></div><div style="left:294px;top:113px;width:82px;height:81px;background:#000"></div><svg style="position:absolute;left:294px;top:113px;" width="82" height="81" viewBox="0 0 82 81"><defs><radialGradient id="sg"><stop offset="0" stop-color="#fff"/><stop offset=".5" stop-color="#eee"/><stop offset="1" stop-color="#000" stop-opacity="0"/></radialGradient></defs><ellipse cx="47" cy="37" rx="14" ry="11" fill="url(#sg)"/><ellipse cx="47" cy="37" rx="7" ry="6" fill="#fff"/></svg><div style="left:294px;top:199px;width:114px;height:23px;border-top:1px solid #999"></div><div style="left:700px;top:508px;width:1156px;height:519px;background:linear-gradient(#c0d1e3 0%,#ccdaea 7%,#d4e0ed 100%);border:1px solid #4f5c6b;border-radius:6px 6px 0 0;box-shadow:inset 0 0 0 1px #eef4fa"></div><div style="left:1757px;top:518px;width:30px;height:16px;border:1px solid #8d9aab;border-radius:3px;background:linear-gradient(#e6eef6,#c7d5e4);box-shadow:inset 0 0 0 1px #f4f8fc"></div><svg style="position:absolute;left:1757px;top:518px;" width="30" height="16" viewBox="0 0 30 16"><rect x="10.0" y="9.0" width="10" height="4" rx="1" fill="#fff" stroke="#3c4a5a" stroke-width="1"/></svg><div style="left:1790px;top:518px;width:30px;height:16px;border:1px solid #8d9aab;border-radius:3px;background:linear-gradient(#e6eef6,#c7d5e4);box-shadow:inset 0 0 0 1px #f4f8fc"></div><svg style="position:absolute;left:1790px;top:518px;" width="30" height="16" viewBox="0 0 30 16"><rect x="10.0" y="4.0" width="10" height="8" fill="none" stroke="#3c4a5a" stroke-width="1.2"/><rect x="13.0" y="7.0" width="4" height="2" fill="#3c4a5a"/></svg><div style="left:1823px;top:518px;width:30px;height:16px;border:1px solid #8d9aab;border-radius:3px;background:linear-gradient(#e6eef6,#c7d5e4);box-shadow:inset 0 0 0 1px #f4f8fc"></div><svg style="position:absolute;left:1823px;top:518px;" width="30" height="16" viewBox="0 0 30 16"><path d="M10.0 4.0 L20.0 12.0 M20.0 4.0 L10.0 12.0" stroke="#3c4a5a" stroke-width="3"/><path d="M10.0 4.0 L20.0 12.0 M20.0 4.0 L10.0 12.0" stroke="#fff" stroke-width="1.4"/></svg><div style="left:1661px;top:539px;width:177px;height:6px;background:#000"></div><div style="left:708px;top:705px;width:1130px;height:320px;background:#000"></div><div style="left:1838px;top:545px;width:16px;height:481px;background:linear-gradient(90deg,#f4f4f4,#e4e4e4 60%,#f8f8f8)"></div><svg style="position:absolute;left:708px;top:705px;" width="1130" height="320" viewBox="0 0 1130 320"><defs><filter id="bl"><feGaussianBlur stdDeviation=".6"/></filter><linearGradient id="sgr" gradientUnits="userSpaceOnUse" x1="0" y1="0" x2="1130" y2="0"><stop offset="0" stop-color="#909090"/><stop offset=".35" stop-color="#d0d0d0"/><stop offset=".7" stop-color="#f4f4f4"/><stop offset="1" stop-color="#e8e8e8"/></linearGradient></defs><g filter="url(#bl)"><path d="M0 -31.8 Q430 -90.7 859 -90.7 L1130 -91.7" fill="none" stroke="url(#sgr)" stroke-width="5" opacity=".5"/><path d="M0 -31.8 Q430 -90.7 859 -90.7 L1130 -91.7" fill="none" stroke="url(#sgr)" stroke-width="2.3"/><path d="M0 -11.8 Q430 -71.3 859 -71.3 L1130 -72.3" fill="none" stroke="url(#sgr)" stroke-width="5" opacity=".5"/><path d="M0 -11.8 Q430 -71.3 859 -71.3 L1130 -72.3" fill="none" stroke="url(#sgr)" stroke-width="2.3"/><path d="M0 8.2 Q430 -51.9 859 -51.9 L1130 -52.9" fill="none" stroke="url(#sgr)" stroke-width="5" opacity=".5"/><path d="M0 8.2 Q430 -51.9 859 -51.9 L1130 -52.9" fill="none" stroke="url(#sgr)" stroke-width="2.3"/><path d="M0 28.1 Q430 -32.6 859 -32.6 L1130 -33.6" fill="none" stroke="url(#sgr)" stroke-width="5" opacity=".5"/><path d="M0 28.1 Q430 -32.6 859 -32.6 L1130 -33.6" fill="none" stroke="url(#sgr)" stroke-width="2.3"/><path d="M0 49.6 Q430 -11.8 859 -11.8 L1130 -12.8" fill="none" stroke="url(#sgr)" stroke-width="5" opacity=".5"/><path d="M0 49.6 Q430 -11.8 859 -11.8 L1130 -12.8" fill="none" stroke="url(#sgr)" stroke-width="2.3"/><path d="M0 71.0 Q430 9.0 859 9.0 L1130 8.0" fill="none" stroke="url(#sgr)" stroke-width="5" opacity=".5"/><path d="M0 71.0 Q430 9.0 859 9.0 L1130 8.0" fill="none" stroke="url(#sgr)" stroke-width="2.3"/><path d="M0 94.0 Q430 31.3 859 31.3 L1130 30.3" fill="none" stroke="url(#sgr)" stroke-width="5" opacity=".5"/><path d="M0 94.0 Q430 31.3 859 31.3 L1130 30.3" fill="none" stroke="url(#sgr)" stroke-width="2.3"/><path d="M0 117.0 Q430 53.6 859 53.6 L1130 52.6" fill="none" stroke="url(#sgr)" stroke-width="5" opacity=".5"/><path d="M0 117.0 Q430 53.6 859 53.6 L1130 52.6" fill="none" stroke="url(#sgr)" stroke-width="2.3"/><path d="M0 140.0 Q430 75.9 859 75.9 L1130 74.9" fill="none" stroke="url(#sgr)" stroke-width="5" opacity=".5"/><path d="M0 140.0 Q430 75.9 859 75.9 L1130 74.9" fill="none" stroke="url(#sgr)" stroke-width="2.3"/><path d="M0 164.4 Q430 99.6 859 99.6 L1130 98.6" fill="none" stroke="url(#sgr)" stroke-width="5" opacity=".5"/><path d="M0 164.4 Q430 99.6 859 99.6 L1130 98.6" fill="none" stroke="url(#sgr)" stroke-width="2.3"/><path d="M0 190.4 Q430 124.8 859 124.8 L1130 123.8" fill="none" stroke="url(#sgr)" stroke-width="5" opacity=".5"/><path d="M0 190.4 Q430 124.8 859 124.8 L1130 123.8" fill="none" stroke="url(#sgr)" stroke-width="2.3"/><path d="M0 216.5 Q430 150.1 859 150.1 L1130 149.1" fill="none" stroke="url(#sgr)" stroke-width="5" opacity=".5"/><path d="M0 216.5 Q430 150.1 859 150.1 L1130 149.1" fill="none" stroke="url(#sgr)" stroke-width="2.3"/><path d="M0 244.0 Q430 176.8 859 176.8 L1130 175.8" fill="none" stroke="url(#sgr)" stroke-width="5" opacity=".5"/><path d="M0 244.0 Q430 176.8 859 176.8 L1130 175.8" fill="none" stroke="url(#sgr)" stroke-width="2.3"/><path d="M0 273.0 Q430 204.9 859 204.9 L1130 203.9" fill="none" stroke="url(#sgr)" stroke-width="5" opacity=".5"/><path d="M0 273.0 Q430 204.9 859 204.9 L1130 203.9" fill="none" stroke="url(#sgr)" stroke-width="2.3"/><path d="M0 302.0 Q430 233.0 859 233.0 L1130 232.0" fill="none" stroke="url(#sgr)" stroke-width="5" opacity=".5"/><path d="M0 302.0 Q430 233.0 859 233.0 L1130 232.0" fill="none" stroke="url(#sgr)" stroke-width="2.3"/><path d="M0 331.0 Q430 261.2 859 261.2 L1130 260.2" fill="none" stroke="url(#sgr)" stroke-width="5" opacity=".5"/><path d="M0 331.0 Q430 261.2 859 261.2 L1130 260.2" fill="none" stroke="url(#sgr)" stroke-width="2.3"/><path d="M0 360.0 Q430 289.3 859 289.3 L1130 288.3" fill="none" stroke="url(#sgr)" stroke-width="5" opacity=".5"/><path d="M0 360.0 Q430 289.3 859 289.3 L1130 288.3" fill="none" stroke="url(#sgr)" stroke-width="2.3"/><path d="M0 390.0 Q430 318.4 859 318.4 L1130 317.4" fill="none" stroke="url(#sgr)" stroke-width="5" opacity=".5"/><path d="M0 390.0 Q430 318.4 859 318.4 L1130 317.4" fill="none" stroke="url(#sgr)" stroke-width="2.3"/><rect x="269" y="174" width="1" height="1" fill="#999"/><rect x="418" y="193" width="1" height="1" fill="#999"/><rect x="707" y="21" width="1" height="1" fill="#999"/><rect x="15" y="268" width="1" height="1" fill="#999"/><rect x="293" y="75" width="1" height="1" fill="#999"/><rect x="1125" y="150" width="1" height="1" fill="#999"/><rect x="945" y="152" width="1" height="1" fill="#999"/><rect x="722" y="48" width="1" height="1" fill="#999"/><rect x="717" y="278" width="1" height="1" fill="#999"/><rect x="591" y="237" width="1" height="1" fill="#999"/><rect x="759" y="20" width="1" height="1" fill="#999"/><rect x="857" y="189" width="1" height="1" fill="#999"/><rect x="340" y="10" width="1" height="1" fill="#999"/><rect x="978" y="151" width="1" height="1" fill="#999"/><rect x="812" y="281" width="1" height="1" fill="#999"/><rect x="807" y="295" width="1" height="1" fill="#999"/><rect x="446" y="256" width="1" height="1" fill="#999"/><rect x="502" y="299" width="1" height="1" fill="#999"/><rect x="993" y="31" width="1" height="1" fill="#999"/><rect x="154" y="69" width="1" height="1" fill="#999"/><rect x="1091" y="140" width="1" height="1" fill="#999"/><rect x="708" y="96" width="1" height="1" fill="#999"/><rect x="573" y="123" width="1" height="1" fill="#999"/><rect x="397" y="187" width="1" height="1" fill="#999"/><rect x="660" y="289" width="1" height="1" fill="#999"/><rect x="771" y="297" width="1" height="1" fill="#999"/><rect x="968" y="317" width="1" height="1" fill="#999"/><rect x="759" y="52" width="1" height="1" fill="#999"/><rect x="973" y="309" width="1" height="1" fill="#999"/><rect x="1022" y="182" width="1" height="1" fill="#999"/><rect x="807" y="68" width="1" height="1" fill="#999"/><rect x="940" y="184" width="1" height="1" fill="#999"/><rect x="322" y="20" width="1" height="1" fill="#999"/><rect x="965" y="317" width="1" height="1" fill="#999"/><rect x="100" y="256" width="1" height="1" fill="#999"/><rect x="464" y="48" width="1" height="1" fill="#999"/><rect x="332" y="246" width="1" height="1" fill="#999"/><rect x="986" y="14" width="1" height="1" fill="#999"/><rect x="694" y="14" width="1" height="1" fill="#999"/><rect x="812" y="106" width="1" height="1" fill="#999"/><rect x="995" y="314" width="1" height="1" fill="#999"/><rect x="571" y="320" width="1" height="1" fill="#999"/><rect x="350" y="25" width="1" height="1" fill="#999"/><rect x="678" y="10" width="1" height="1" fill="#999"/><rect x="223" y="131" width="1" height="1" fill="#999"/><rect x="690" y="50" width="1" height="1" fill="#999"/><rect x="48" y="278" width="1" height="1" fill="#999"/><rect x="355" y="307" width="1" height="1" fill="#999"/><rect x="1013" y="121" width="1" height="1" fill="#999"/><rect x="520" y="166" width="1" height="1" fill="#999"/><rect x="728" y="191" width="1" height="1" fill="#999"/><rect x="632" y="198" width="1" height="1" fill="#999"/><rect x="1063" y="162" width="1" height="1" fill="#999"/><rect x="487" y="230" width="1" height="1" fill="#999"/><rect x="269" y="96" width="1" height="1" fill="#999"/><rect x="1105" y="167" width="1" height="1" fill="#999"/><rect x="620" y="4" width="1" height="1" fill="#999"/><rect x="469" y="186" width="1" height="1" fill="#999"/><rect x="23" y="197" width="1" height="1" fill="#999"/><rect x="714" y="19" width="1" height="1" fill="#999"/><rect x="709" y="149" width="1" height="1" fill="#999"/><rect x="768" y="113" width="1" height="1" fill="#999"/><rect x="799" y="236" width="1" height="1" fill="#999"/><rect x="25" y="19" width="1" height="1" fill="#999"/><rect x="764" y="308" width="1" height="1" fill="#999"/><rect x="284" y="146" width="1" height="1" fill="#999"/><rect x="670" y="102" width="1" height="1" fill="#999"/><rect x="411" y="100" width="1" height="1" fill="#999"/><rect x="417" y="191" width="1" height="1" fill="#999"/><rect x="339" y="121" width="1" height="1" fill="#999"/><rect x="873" y="9" width="1" height="1" fill="#999"/><rect x="643" y="235" width="1" height="1" fill="#999"/><rect x="350" y="71" width="1" height="1" fill="#999"/><rect x="908" y="76" width="1" height="1" fill="#999"/><rect x="212" y="139" width="1" height="1" fill="#999"/><rect x="789" y="33" width="1" height="1" fill="#999"/><rect x="364" y="107" width="1" height="1" fill="#999"/><rect x="942" y="140" width="1" height="1" fill="#999"/><rect x="967" y="54" width="1" height="1" fill="#999"/><rect x="380" y="208" width="1" height="1" fill="#999"/><rect x="1000" y="144" width="1" height="1" fill="#999"/><rect x="254" y="39" width="1" height="1" fill="#999"/><rect x="598" y="61" width="1" height="1" fill="#999"/><rect x="912" y="268" width="1" height="1" fill="#999"/><rect x="207" y="89" width="1" height="1" fill="#999"/><rect x="912" y="205" width="1" height="1" fill="#999"/><rect x="911" y="110" width="1" height="1" fill="#999"/><rect x="147" y="93" width="1" height="1" fill="#999"/><rect x="897" y="87" width="1" height="1" fill="#999"/><rect x="391" y="133" width="1" height="1" fill="#999"/><rect x="474" y="131" width="1" height="1" fill="#999"/><rect x="1040" y="50" width="1" height="1" fill="#999"/><rect x="5" y="302" width="1" height="1" fill="#999"/><rect x="994" y="316" width="1" height="1" fill="#999"/><rect x="491" y="304" width="1" height="1" fill="#999"/><rect x="1048" y="71" width="1" height="1" fill="#999"/><rect x="842" y="268" width="1" height="1" fill="#999"/><rect x="749" y="166" width="1" height="1" fill="#999"/><rect x="327" y="109" width="1" height="1" fill="#999"/><rect x="257" y="22" width="1" height="1" fill="#999"/><rect x="665" y="92" width="1" height="1" fill="#999"/><rect x="916" y="14" width="1" height="1" fill="#999"/><rect x="1021" y="222" width="1" height="1" fill="#999"/><rect x="1044" y="287" width="1" height="1" fill="#999"/><rect x="1017" y="185" width="1" height="1" fill="#999"/><rect x="15" y="238" width="1" height="1" fill="#999"/><rect x="194" y="96" width="1" height="1" fill="#999"/><rect x="749" y="168" width="1" height="1" fill="#999"/><rect x="468" y="300" width="1" height="1" fill="#999"/><rect x="692" y="109" width="1" height="1" fill="#999"/><rect x="285" y="276" width="1" height="1" fill="#999"/><rect x="539" y="250" width="1" height="1" fill="#999"/><rect x="398" y="63" width="1" height="1" fill="#999"/><rect x="604" y="261" width="1" height="1" fill="#999"/><rect x="194" y="253" width="1" height="1" fill="#999"/><rect x="1042" y="258" width="1" height="1" fill="#999"/><rect x="931" y="2" width="1" height="1" fill="#999"/><rect x="710" y="276" width="1" height="1" fill="#999"/><rect x="56" y="87" width="1" height="1" fill="#999"/><rect x="304" y="169" width="1" height="1" fill="#999"/></g></svg><div style="left:483px;top:86px;width:1178px;height:620px;background:linear-gradient(#c0d1e3 0%,#ccdaea 6%,#d4e0ed 100%);border:1px solid #4f5c6b;border-radius:6px 6px 0 0;box-shadow:inset 0 0 0 1px #eef4fa"></div><svg style="position:absolute;left:494px;top:96px;" width="16" height="16" viewBox="0 0 16 16"><defs><linearGradient id="pg49496" x1="0" y1="0" x2="0" y2="1"><stop offset="0" stop-color="#e01010"/><stop offset=".3" stop-color="#f07000"/><stop offset=".45" stop-color="#e0e000"/><stop offset=".6" stop-color="#30c030"/><stop offset=".8" stop-color="#0090c0"/><stop offset="1" stop-color="#101848"/></linearGradient></defs><polygon points="8.0,0 16,16 0,16" fill="url(#pg49496)"/><line x1="8.0" y1="0" x2="16" y2="16" stroke="#000" stroke-width="1.5"/></svg><div class="t" style="left:513px;top:99.5px;font-size:11.5px;color:#3b4656">Le ciel EQ.2000, Zoom=4, Alpha= 18h50m05s Delta= +33°21&#x27;46&#x27;&#x27;     27/07/2015 20:30:52 TU [Window1.mapsky]   38420 Revel [France]</div><div style="left:1557px;top:96px;width:30px;height:16px;border:1px solid #8d9aab;border-radius:3px;background:linear-gradient(#e6eef6,#c7d5e4);box-shadow:inset 0 0 0 1px #f4f8fc"></div><svg style="position:absolute;left:1557px;top:96px;" width="30" height="16" viewBox="0 0 30 16"><rect x="10.0" y="9.0" width="10" height="4" rx="1" fill="#fff" stroke="#3c4a5a" stroke-width="1"/></svg><div style="left:1590px;top:96px;width:30px;height:16px;border:1px solid #8d9aab;border-radius:3px;background:linear-gradient(#e6eef6,#c7d5e4);box-shadow:inset 0 0 0 1px #f4f8fc"></div><svg style="position:absolute;left:1590px;top:96px;" width="30" height="16" viewBox="0 0 30 16"><rect x="10.0" y="4.0" width="10" height="8" fill="none" stroke="#3c4a5a" stroke-width="1.2"/><rect x="13.0" y="7.0" width="4" height="2" fill="#3c4a5a"/></svg><div style="left:1623px;top:96px;width:30px;height:16px;border:1px solid #8d9aab;border-radius:3px;background:linear-gradient(#e6eef6,#c7d5e4);box-shadow:inset 0 0 0 1px #f4f8fc"></div><svg style="position:absolute;left:1623px;top:96px;" width="30" height="16" viewBox="0 0 30 16"><path d="M10.0 4.0 L20.0 12.0 M20.0 4.0 L10.0 12.0" stroke="#3c4a5a" stroke-width="3"/><path d="M10.0 4.0 L20.0 12.0 M20.0 4.0 L10.0 12.0" stroke="#fff" stroke-width="1.4"/></svg><div style="left:491px;top:116px;width:1161px;height:20px;background:linear-gradient(#f8f8f8,#f0efee)"></div><div style="left:492px;top:136px;width:1159px;height:540px;background:#000"></div><div style="left:491px;top:676px;width:1161px;height:22px;background:#f0f0f0"></div><div style="left:770px;top:678px;width:20px;height:18px;border:1px solid;border-color:#c9c9c9 #fff #fff #c9c9c9"></div><div class="t" style="left:774px;top:680.44px;font-size:12px;">45&quot;</div><div style="left:792px;top:678px;width:37px;height:18px;background:#fff"></div><div class="t" style="left:795px;top:680.44px;font-size:12px;">Eq</div><svg style="position:absolute;left:817px;top:684px;" width="9" height="5" viewBox="0 0 9 5"><path d="M0 0L9 0L4.5 5Z" fill="#000"/></svg><div style="left:832px;top:678px;width:86px;height:18px;border:1px solid;border-color:#c9c9c9 #fff #fff #c9c9c9"></div><div class="t" style="left:836px;top:680.44px;font-size:12px;">Objets: 3728</div><div style="left:923px;top:678px;width:41px;height:18px;border:1px solid;border-color:#c9c9c9 #fff #fff #c9c9c9"></div><div class="t" style="left:927px;top:680.44px;font-size:12px;">Cyg</div><div style="left:969px;top:678px;width:181px;height:18px;border:1px solid;border-color:#c9c9c9 #fff #fff #c9c9c9"></div><div class="t" style="left:973px;top:680.44px;font-size:12px;">Champ=62°58&#x27;45&quot;x29°17&#x27;20&quot;</div><div style="left:1154px;top:678px;width:124px;height:18px;border:1px solid;border-color:#c9c9c9 #fff #fff #c9c9c9"></div><div class="t" style="left:1158px;top:680.44px;font-size:12px;color:#e0101a">Eq Sid Tpc</div><svg style="position:absolute;left:492px;top:136px;" width="1159" height="540" viewBox="0 0 1159 540"><path fill="#fff" d="M67 274h1v1h-1zM72 316h1v1h-1zM336 78h1v1h-1zM119 308h1v1h-1zM334 529h1v1h-1zM576 430h1v1h-1zM447 361h1v1h-1zM327 79h1v1h-1zM455 215h1v1h-1zM170 293h2v2h-2zM194 417h1v1h-1zM263 106h2v2h-2zM537 401h2v2h-2zM959 474h1v1h-1zM705 419h1v1h-1zM378 280h1v1h-1zM288 150h1v1h-1zM598 183h1v1h-1zM1153 20h1v1h-1zM288 419h1v1h-1zM659 439h1v1h-1zM283 142h2v2h-2zM294 401h1v1h-1zM539 252h1v1h-1zM244 314h2v2h-2zM140 179h1v1h-1zM319 26h1v1h-1zM523 406h1v1h-1zM471 129h1v1h-1zM283 94h1v1h-1zM99 420h1v1h-1zM292 344h1v1h-1zM1069 29h1v1h-1zM47 19h1v1h-1zM419 422h1v1h-1zM483 335h1v1h-1zM310 137h1v1h-1zM47 159h2v2h-2zM164 110h1v1h-1zM469 509h1v1h-1zM471 477h1v1h-1zM743 491h1v1h-1zM403 87h1v1h-1zM720 332h1v1h-1zM445 66h2v2h-2zM464 36h1v1h-1zM364 389h2v2h-2zM431 203h1v1h-1zM484 197h1v1h-1zM123 193h1v1h-1zM424 447h1v1h-1zM191 0h1v1h-1zM68 421h2v2h-2zM479 280h1v1h-1zM505 426h1v1h-1zM99 274h1v1h-1zM507 391h1v1h-1zM655 93h1v1h-1zM400 77h1v1h-1zM808 398h1v1h-1zM445 133h2v2h-2zM333 403h1v1h-1zM402 381h1v1h-1zM489 349h1v1h-1zM440 477h1v1h-1zM349 380h1v1h-1zM265 98h1v1h-1zM1090 280h1v1h-1zM476 512h1v1h-1zM191 502h1v1h-1zM670 461h1v1h-1zM229 374h1v1h-1zM531 412h1v1h-1zM299 163h1v1h-1zM727 231h1v1h-1zM1008 70h1v1h-1zM340 301h2v2h-2zM426 310h1v1h-1zM328 1h1v1h-1zM421 305h1v1h-1zM324 52h1v1h-1zM294 20h1v1h-1zM686 409h1v1h-1zM435 205h2v2h-2zM182 450h1v1h-1zM932 141h1v1h-1zM395 76h1v1h-1zM417 22h1v1h-1zM288 304h1v1h-1zM211 55h1v1h-1zM324 66h1v1h-1zM308 366h2v2h-2zM461 536h1v1h-1zM336 276h1v1h-1zM356 373h1v1h-1zM476 66h1v1h-1zM167 129h1v1h-1zM404 243h2v2h-2zM510 335h2v2h-2zM352 325h2v2h-2zM26 469h1v1h-1zM133 288h1v1h-1zM241 514h1v1h-1zM468 276h1v1h-1zM446 355h1v1h-1zM327 218h2v2h-2zM113 157h1v1h-1zM469 329h1v1h-1zM667 505h1v1h-1zM1129 368h1v1h-1zM590 365h1v1h-1zM190 422h2v2h-2zM164 304h1v1h-1zM187 240h1v1h-1zM291 133h1v1h-1zM343 100h2v2h-2zM371 199h1v1h-1zM166 39h2v2h-2zM417 130h1v1h-1zM263 309h1v1h-1zM665 316h2v2h-2zM436 490h1v1h-1zM1125 284h1v1h-1zM626 207h2v2h-2zM1036 469h1v1h-1zM510 265h1v1h-1zM137 119h1v1h-1zM221 530h1v1h-1zM164 502h1v1h-1zM57 466h1v1h-1zM169 496h1v1h-1zM299 489h1v1h-1zM337 354h1v1h-1zM498 367h1v1h-1zM337 188h2v2h-2zM232 151h1v1h-1zM479 376h1v1h-1zM110 57h1v1h-1zM85 182h1v1h-1zM505 446h1v1h-1zM870 458h1v1h-1zM456 252h2v2h-2zM369 473h1v1h-1zM419 357h1v1h-1zM522 452h1v1h-1zM323 289h1v1h-1zM319 196h1v1h-1zM1027 473h1v1h-1zM464 270h1v1h-1zM468 310h1v1h-1zM316 115h1v1h-1zM417 378h1v1h-1zM531 413h2v2h-2zM220 218h1v1h-1zM228 143h2v2h-2zM118 58h1v1h-1zM323 440h1v1h-1zM392 302h2v2h-2zM282 489h1v1h-1zM265 212h1v1h-1zM305 83h1v1h-1zM242 382h2v2h-2zM633 190h1v1h-1zM343 267h1v1h-1zM472 330h1v1h-1zM193 512h1v1h-1zM165 37h1v1h-1zM295 213h2v2h-2zM292 198h1v1h-1zM331 206h1v1h-1zM884 461h1v1h-1zM34 237h1v1h-1zM1055 230h1v1h-1zM246 45h1v1h-1zM417 358h1v1h-1zM316 38h1v1h-1zM386 501h1v1h-1zM446 387h1v1h-1zM256 157h1v1h-1zM237 168h1v1h-1zM102 498h2v2h-2zM109 520h1v1h-1zM493 183h2v2h-2zM363 394h1v1h-1zM329 509h1v1h-1zM597 402h1v1h-1zM381 395h1v1h-1zM179 115h1v1h-1zM513 47h1v1h-1zM371 93h1v1h-1zM413 235h1v1h-1zM321 280h1v1h-1zM19 432h1v1h-1zM320 179h1v1h-1zM163 168h1v1h-1zM44 30h1v1h-1zM130 87h1v1h-1zM418 529h1v1h-1zM16 237h1v1h-1zM165 95h1v1h-1zM219 205h1v1h-1zM367 203h1v1h-1zM341 274h1v1h-1zM580 182h1v1h-1zM290 493h1v1h-1zM381 185h1v1h-1zM487 113h1v1h-1zM683 445h1v1h-1zM128 403h1v1h-1zM296 76h1v1h-1zM185 272h1v1h-1zM501 503h2v2h-2zM330 21h1v1h-1zM502 357h1v1h-1zM80 46h1v1h-1zM670 527h1v1h-1zM592 318h1v1h-1zM337 217h1v1h-1zM501 397h1v1h-1zM240 313h1v1h-1zM279 463h1v1h-1zM528 496h1v1h-1zM415 181h1v1h-1zM372 217h1v1h-1zM78 94h1v1h-1zM129 148h2v2h-2zM171 435h2v2h-2zM393 14h1v1h-1zM314 515h1v1h-1zM368 348h1v1h-1zM187 317h1v1h-1zM183 166h1v1h-1zM305 98h1v1h-1zM499 5h1v1h-1zM826 393h1v1h-1zM443 389h1v1h-1zM354 295h1v1h-1zM422 431h1v1h-1zM225 250h1v1h-1zM213 295h2v2h-2zM1125 156h2v2h-2zM265 137h1v1h-1zM88 244h1v1h-1zM474 518h1v1h-1zM656 536h1v1h-1zM69 427h1v1h-1zM335 200h1v1h-1zM189 454h2v2h-2zM939 124h1v1h-1zM319 136h1v1h-1zM281 377h1v1h-1zM355 53h1v1h-1zM709 335h1v1h-1zM512 290h1v1h-1zM950 163h1v1h-1zM210 440h1v1h-1zM849 361h1v1h-1zM1145 215h1v1h-1zM200 395h1v1h-1zM398 356h1v1h-1zM621 450h1v1h-1zM397 440h1v1h-1zM419 485h1v1h-1zM277 248h2v2h-2zM137 113h1v1h-1zM303 161h1v1h-1zM458 242h1v1h-1zM151 376h1v1h-1zM304 237h1v1h-1zM179 197h1v1h-1zM375 148h1v1h-1zM191 217h1v1h-1zM468 432h2v2h-2zM685 243h1v1h-1zM722 448h1v1h-1zM277 130h1v1h-1zM650 323h1v1h-1zM1141 60h1v1h-1zM535 531h1v1h-1zM110 497h1v1h-1zM550 421h1v1h-1zM216 250h2v2h-2zM2 39h1v1h-1zM1022 270h1v1h-1zM231 164h2v2h-2zM856 266h1v1h-1zM214 73h1v1h-1zM406 479h1v1h-1zM507 399h1v1h-1zM261 179h1v1h-1zM329 496h2v2h-2zM233 269h1v1h-1zM137 117h1v1h-1zM390 238h1v1h-1zM748 436h1v1h-1zM211 179h1v1h-1zM354 46h1v1h-1zM505 276h1v1h-1zM394 326h1v1h-1zM320 503h1v1h-1zM1038 176h1v1h-1zM650 399h2v2h-2zM377 464h2v2h-2zM504 226h1v1h-1zM537 378h1v1h-1zM761 238h1v1h-1zM432 201h1v1h-1zM434 523h1v1h-1zM222 202h1v1h-1zM666 473h1v1h-1zM436 277h1v1h-1zM258 522h1v1h-1zM342 369h1v1h-1zM113 455h1v1h-1zM648 451h1v1h-1zM464 269h1v1h-1zM238 252h1v1h-1zM631 368h1v1h-1zM107 494h1v1h-1zM308 405h1v1h-1zM301 516h1v1h-1zM327 148h1v1h-1zM140 197h1v1h-1zM598 115h1v1h-1zM480 211h2v2h-2zM205 257h1v1h-1zM747 416h1v1h-1zM925 182h1v1h-1zM437 372h1v1h-1zM298 413h1v1h-1zM250 367h1v1h-1zM757 187h2v2h-2zM495 355h1v1h-1zM347 298h1v1h-1zM442 384h1v1h-1zM272 175h1v1h-1zM210 124h2v2h-2zM120 498h2v2h-2zM345 384h1v1h-1zM175 281h1v1h-1zM663 381h1v1h-1zM457 333h1v1h-1zM847 223h1v1h-1zM680 248h1v1h-1zM202 262h1v1h-1zM408 459h1v1h-1zM517 246h1v1h-1zM198 240h2v2h-2zM561 77h1v1h-1zM388 419h1v1h-1zM679 402h1v1h-1zM773 99h1v1h-1zM215 2h1v1h-1zM153 456h1v1h-1zM351 171h1v1h-1zM432 346h1v1h-1zM186 221h1v1h-1zM1008 487h1v1h-1zM329 312h1v1h-1zM529 531h1v1h-1zM522 442h1v1h-1zM630 315h1v1h-1zM762 124h1v1h-1zM488 525h2v2h-2zM355 506h1v1h-1zM352 482h2v2h-2zM459 469h1v1h-1zM416 58h1v1h-1zM381 283h2v2h-2zM470 386h1v1h-1zM167 35h1v1h-1zM619 531h1v1h-1zM962 411h1v1h-1zM309 113h1v1h-1zM191 204h1v1h-1zM108 160h1v1h-1zM20 380h1v1h-1zM194 51h1v1h-1zM541 386h1v1h-1zM279 238h1v1h-1zM271 391h1v1h-1zM398 234h1v1h-1zM467 412h1v1h-1zM495 124h1v1h-1zM283 264h1v1h-1zM197 355h2v2h-2zM179 124h1v1h-1zM627 417h1v1h-1zM18 345h1v1h-1zM760 1h1v1h-1zM735 256h2v2h-2zM395 146h1v1h-1zM350 1h2v2h-2zM480 425h1v1h-1zM1148 181h1v1h-1zM446 387h1v1h-1zM353 171h1v1h-1zM261 177h1v1h-1zM680 216h1v1h-1zM272 477h1v1h-1zM482 230h1v1h-1zM388 179h1v1h-1zM1028 210h1v1h-1zM467 441h1v1h-1zM616 143h2v2h-2zM388 349h2v2h-2zM398 193h1v1h-1zM256 20h1v1h-1zM524 420h1v1h-1zM502 400h1v1h-1zM532 215h1v1h-1zM583 140h1v1h-1zM178 393h1v1h-1zM385 313h1v1h-1zM446 141h2v2h-2zM528 297h1v1h-1zM599 209h1v1h-1zM543 122h1v1h-1zM613 395h1v1h-1zM668 311h1v1h-1zM458 119h1v1h-1zM405 271h1v1h-1zM324 514h1v1h-1zM241 403h1v1h-1zM1132 511h1v1h-1zM91 116h1v1h-1zM582 142h1v1h-1zM597 286h1v1h-1zM611 443h2v2h-2zM316 176h1v1h-1zM634 511h1v1h-1zM3 385h1v1h-1zM327 244h1v1h-1zM172 9h1v1h-1zM372 353h1v1h-1zM419 421h1v1h-1zM309 226h1v1h-1zM260 26h1v1h-1zM351 394h1v1h-1zM373 162h1v1h-1zM193 155h1v1h-1zM597 182h1v1h-1zM399 109h1v1h-1zM414 293h1v1h-1zM381 296h1v1h-1zM186 277h1v1h-1zM540 242h1v1h-1zM158 393h1v1h-1zM652 414h1v1h-1zM347 363h1v1h-1zM302 507h1v1h-1zM581 44h2v2h-2zM415 6h1v1h-1zM18 462h1v1h-1zM1015 70h1v1h-1zM629 538h1v1h-1zM269 485h1v1h-1zM425 399h1v1h-1zM370 361h1v1h-1zM280 366h1v1h-1zM249 403h1v1h-1zM238 249h1v1h-1zM177 386h1v1h-1zM204 21h1v1h-1zM489 250h1v1h-1zM441 422h1v1h-1zM542 447h1v1h-1zM381 137h1v1h-1zM676 137h1v1h-1zM343 465h1v1h-1zM515 358h1v1h-1zM339 251h1v1h-1zM402 273h1v1h-1zM215 329h1v1h-1zM1142 393h1v1h-1zM15 81h1v1h-1zM202 328h1v1h-1zM345 458h1v1h-1zM843 57h1v1h-1zM233 268h2v2h-2zM348 164h1v1h-1zM495 451h1v1h-1zM385 206h2v2h-2zM583 20h1v1h-1zM112 173h1v1h-1zM335 202h1v1h-1zM381 105h1v1h-1zM834 197h2v2h-2zM736 115h1v1h-1zM539 385h1v1h-1zM235 444h2v2h-2zM532 321h1v1h-1zM460 3h1v1h-1zM534 532h1v1h-1zM278 459h1v1h-1zM550 311h1v1h-1zM441 340h1v1h-1zM881 377h1v1h-1zM690 460h1v1h-1zM254 243h2v2h-2zM590 231h1v1h-1zM358 379h1v1h-1zM182 163h1v1h-1zM414 369h1v1h-1zM464 59h1v1h-1zM641 361h2v2h-2zM454 482h1v1h-1zM380 219h1v1h-1zM150 314h1v1h-1zM188 207h1v1h-1zM400 213h1v1h-1zM141 76h1v1h-1zM380 68h1v1h-1zM248 97h1v1h-1zM441 425h1v1h-1zM104 216h1v1h-1zM430 420h1v1h-1zM689 336h1v1h-1zM169 511h1v1h-1zM128 217h1v1h-1zM466 432h1v1h-1zM534 351h1v1h-1zM445 281h1v1h-1zM917 370h1v1h-1zM864 418h1v1h-1zM99 236h1v1h-1zM371 125h1v1h-1zM507 234h1v1h-1zM212 511h2v2h-2zM321 478h1v1h-1zM352 173h1v1h-1zM346 515h1v1h-1zM766 165h2v2h-2zM1104 416h1v1h-1zM911 392h2v2h-2zM527 137h1v1h-1zM134 448h1v1h-1zM46 235h1v1h-1zM694 139h1v1h-1zM832 310h1v1h-1zM573 414h1v1h-1zM466 430h1v1h-1zM491 347h1v1h-1zM466 421h1v1h-1zM310 149h1v1h-1zM435 351h1v1h-1zM419 393h2v2h-2zM272 70h1v1h-1zM390 162h1v1h-1zM188 127h1v1h-1zM161 6h1v1h-1zM82 38h2v2h-2zM503 398h1v1h-1zM340 313h1v1h-1zM520 171h2v2h-2zM292 325h1v1h-1zM295 108h1v1h-1zM569 338h1v1h-1zM261 33h1v1h-1zM201 160h1v1h-1zM594 492h1v1h-1zM411 349h1v1h-1zM580 307h1v1h-1zM304 459h2v2h-2zM475 226h1v1h-1zM419 141h1v1h-1zM377 216h1v1h-1zM289 112h1v1h-1zM590 525h1v1h-1zM1108 301h1v1h-1zM404 116h1v1h-1zM383 212h1v1h-1zM103 494h1v1h-1zM235 213h1v1h-1zM314 272h1v1h-1zM630 339h1v1h-1zM64 366h1v1h-1zM528 297h1v1h-1zM39 45h1v1h-1zM175 259h1v1h-1zM452 98h1v1h-1zM392 149h1v1h-1zM453 398h1v1h-1zM212 339h1v1h-1zM705 494h1v1h-1zM307 301h1v1h-1zM349 183h1v1h-1zM654 267h1v1h-1zM1089 236h1v1h-1zM518 327h1v1h-1zM547 344h1v1h-1zM431 365h1v1h-1zM241 225h1v1h-1zM203 395h1v1h-1zM275 222h1v1h-1zM389 439h1v1h-1zM449 119h1v1h-1zM176 312h1v1h-1zM666 360h1v1h-1zM397 513h1v1h-1zM673 409h1v1h-1zM261 221h1v1h-1zM195 84h1v1h-1zM417 420h2v2h-2zM554 504h1v1h-1zM1017 355h1v1h-1zM415 171h1v1h-1zM858 378h1v1h-1zM388 202h1v1h-1zM743 146h1v1h-1zM497 284h2v2h-2zM548 358h1v1h-1zM514 217h2v2h-2zM137 169h1v1h-1zM615 476h1v1h-1zM112 250h1v1h-1zM63 139h1v1h-1zM512 299h1v1h-1zM282 398h1v1h-1zM211 539h1v1h-1zM425 384h1v1h-1zM338 374h1v1h-1zM891 375h1v1h-1zM261 415h1v1h-1zM499 468h1v1h-1zM856 416h2v2h-2zM497 292h1v1h-1zM480 199h1v1h-1zM206 467h1v1h-1zM856 362h2v2h-2zM241 329h1v1h-1zM418 74h1v1h-1zM403 206h1v1h-1zM932 404h1v1h-1zM451 401h2v2h-2zM436 370h1v1h-1zM344 435h1v1h-1zM616 503h1v1h-1zM524 268h1v1h-1zM254 414h1v1h-1zM224 99h1v1h-1zM102 136h1v1h-1zM357 286h1v1h-1zM504 114h1v1h-1zM1064 181h1v1h-1zM375 348h2v2h-2zM246 385h1v1h-1zM515 436h2v2h-2zM434 101h1v1h-1zM462 443h2v2h-2zM609 366h1v1h-1zM599 199h2v2h-2zM274 292h2v2h-2zM330 111h1v1h-1zM903 363h1v1h-1zM589 313h1v1h-1zM172 344h1v1h-1zM530 43h1v1h-1zM413 426h1v1h-1zM158 221h1v1h-1zM939 63h1v1h-1zM152 200h1v1h-1zM355 278h1v1h-1zM654 421h1v1h-1zM539 256h1v1h-1zM247 406h2v2h-2zM88 447h1v1h-1zM780 256h1v1h-1zM193 76h1v1h-1zM154 232h1v1h-1zM283 491h1v1h-1zM223 44h1v1h-1zM430 296h1v1h-1zM868 451h1v1h-1zM388 74h1v1h-1zM527 212h1v1h-1zM337 509h1v1h-1zM580 334h1v1h-1zM439 247h1v1h-1zM415 332h1v1h-1zM402 459h1v1h-1zM948 337h1v1h-1zM147 383h1v1h-1zM525 358h1v1h-1zM368 422h2v2h-2zM322 394h1v1h-1zM923 349h1v1h-1zM107 172h1v1h-1zM75 428h1v1h-1zM366 333h1v1h-1zM126 72h1v1h-1zM307 435h1v1h-1zM958 529h1v1h-1zM178 270h2v2h-2zM443 414h1v1h-1zM412 504h1v1h-1zM532 427h1v1h-1zM176 92h1v1h-1zM332 326h1v1h-1zM620 474h1v1h-1zM546 420h1v1h-1zM479 426h1v1h-1zM385 278h1v1h-1zM123 19h1v1h-1zM376 341h1v1h-1zM1136 309h1v1h-1zM278 388h1v1h-1zM268 95h1v1h-1zM142 142h2v2h-2zM324 422h1v1h-1zM384 526h1v1h-1zM374 230h2v2h-2zM433 473h1v1h-1zM312 415h1v1h-1zM266 273h1v1h-1zM272 324h1v1h-1zM527 98h1v1h-1zM359 153h1v1h-1zM346 257h2v2h-2zM340 517h1v1h-1zM996 49h1v1h-1zM287 279h1v1h-1zM488 467h1v1h-1zM844 419h1v1h-1zM314 342h1v1h-1zM432 59h1v1h-1zM773 79h2v2h-2zM48 250h1v1h-1zM336 509h1v1h-1zM338 369h1v1h-1zM203 37h1v1h-1zM219 498h1v1h-1zM232 257h2v2h-2zM490 477h1v1h-1zM588 530h1v1h-1zM819 258h1v1h-1zM369 412h1v1h-1zM654 530h1v1h-1zM171 281h1v1h-1zM56 173h1v1h-1zM437 321h1v1h-1zM269 221h1v1h-1zM368 414h1v1h-1zM359 140h1v1h-1zM127 250h1v1h-1zM163 337h1v1h-1zM478 333h1v1h-1zM544 282h1v1h-1zM76 313h1v1h-1zM120 244h1v1h-1zM456 272h2v2h-2zM417 151h1v1h-1zM151 265h1v1h-1zM796 345h1v1h-1zM240 341h1v1h-1zM183 321h1v1h-1zM479 5h2v2h-2zM755 503h1v1h-1zM493 71h2v2h-2zM532 535h1v1h-1zM522 22h1v1h-1zM286 460h1v1h-1zM347 449h1v1h-1zM82 498h1v1h-1zM174 110h1v1h-1zM582 437h1v1h-1zM267 293h1v1h-1zM751 215h1v1h-1zM767 241h1v1h-1zM415 346h2v2h-2zM403 277h1v1h-1zM220 454h1v1h-1zM887 346h2v2h-2zM446 367h1v1h-1zM300 215h1v1h-1zM486 314h2v2h-2zM600 256h1v1h-1zM369 386h1v1h-1zM350 337h2v2h-2zM393 40h1v1h-1zM407 487h1v1h-1zM1014 421h1v1h-1zM142 29h1v1h-1zM850 371h1v1h-1zM187 344h1v1h-1zM263 379h1v1h-1zM486 479h1v1h-1zM1017 531h1v1h-1zM7 372h1v1h-1zM403 150h1v1h-1zM540 261h1v1h-1zM545 528h2v2h-2zM1112 235h1v1h-1zM302 501h1v1h-1zM930 406h1v1h-1zM305 38h1v1h-1zM399 281h1v1h-1zM236 388h1v1h-1zM1153 233h1v1h-1zM266 340h2v2h-2zM639 523h1v1h-1zM116 388h1v1h-1zM124 120h1v1h-1zM754 327h1v1h-1zM455 104h1v1h-1zM170 293h1v1h-1zM562 206h1v1h-1zM381 339h1v1h-1zM370 221h1v1h-1zM87 423h1v1h-1zM271 358h1v1h-1zM298 430h1v1h-1zM237 470h1v1h-1zM972 339h2v2h-2zM740 525h1v1h-1zM284 331h1v1h-1zM579 332h1v1h-1zM673 459h1v1h-1zM817 487h1v1h-1zM250 263h1v1h-1zM82 491h1v1h-1zM31 373h1v1h-1zM190 181h1v1h-1zM327 297h1v1h-1zM1048 379h1v1h-1zM478 130h1v1h-1zM231 139h1v1h-1zM92 459h1v1h-1zM888 19h1v1h-1zM510 425h1v1h-1zM393 454h1v1h-1zM292 295h1v1h-1zM251 482h1v1h-1zM1138 27h1v1h-1zM289 311h1v1h-1zM125 234h1v1h-1zM167 428h1v1h-1zM318 304h1v1h-1zM430 269h1v1h-1zM431 327h2v2h-2zM783 444h1v1h-1zM159 417h1v1h-1zM462 354h1v1h-1zM393 45h1v1h-1zM453 511h1v1h-1zM401 425h1v1h-1zM217 147h1v1h-1zM773 127h1v1h-1zM362 327h1v1h-1zM269 370h1v1h-1zM788 335h1v1h-1zM148 141h1v1h-1zM285 67h1v1h-1zM213 104h1v1h-1zM515 380h1v1h-1zM372 376h1v1h-1zM438 248h1v1h-1zM501 170h1v1h-1zM293 301h1v1h-1zM469 323h1v1h-1zM961 332h2v2h-2zM166 284h1v1h-1zM440 369h1v1h-1zM94 56h2v2h-2zM342 194h1v1h-1zM72 206h1v1h-1zM549 494h1v1h-1zM305 417h1v1h-1zM507 190h1v1h-1zM366 489h1v1h-1zM962 119h1v1h-1zM373 185h1v1h-1zM199 478h1v1h-1zM617 393h1v1h-1zM63 437h1v1h-1zM533 177h2v2h-2zM259 273h1v1h-1zM807 349h1v1h-1zM524 350h1v1h-1zM297 495h1v1h-1zM227 64h1v1h-1zM491 491h1v1h-1zM169 135h1v1h-1zM394 464h1v1h-1zM180 121h1v1h-1zM455 471h1v1h-1zM294 297h1v1h-1zM542 263h1v1h-1zM377 445h2v2h-2zM380 169h1v1h-1zM304 391h1v1h-1zM968 425h1v1h-1zM913 500h1v1h-1zM90 371h2v2h-2zM344 199h1v1h-1zM454 477h1v1h-1zM551 374h1v1h-1zM390 204h1v1h-1zM283 463h1v1h-1zM974 276h1v1h-1zM36 326h1v1h-1zM412 278h1v1h-1zM611 317h1v1h-1zM152 482h1v1h-1zM477 121h1v1h-1zM455 310h1v1h-1zM273 76h1v1h-1zM182 114h1v1h-1zM798 383h1v1h-1zM573 476h1v1h-1zM505 236h1v1h-1zM378 140h1v1h-1zM250 401h1v1h-1zM303 280h2v2h-2zM624 253h1v1h-1zM316 328h1v1h-1zM415 157h1v1h-1zM811 354h1v1h-1zM246 292h1v1h-1zM337 199h1v1h-1zM694 311h1v1h-1zM877 312h2v2h-2zM331 164h1v1h-1zM523 30h1v1h-1zM304 291h1v1h-1zM1052 472h1v1h-1zM273 344h2v2h-2zM825 161h2v2h-2zM344 212h1v1h-1zM478 263h1v1h-1zM206 332h1v1h-1zM619 250h1v1h-1zM325 288h1v1h-1zM39 277h1v1h-1zM541 234h1v1h-1zM460 294h1v1h-1zM360 404h1v1h-1zM239 29h1v1h-1zM1044 435h1v1h-1zM301 41h1v1h-1zM479 194h1v1h-1zM458 265h1v1h-1zM79 376h2v2h-2zM124 413h1v1h-1zM504 346h1v1h-1zM285 194h1v1h-1zM512 256h1v1h-1zM608 528h1v1h-1zM524 424h1v1h-1zM205 113h2v2h-2zM607 10h1v1h-1zM436 162h1v1h-1zM422 197h1v1h-1zM374 210h1v1h-1zM371 117h1v1h-1zM804 373h2v2h-2zM488 390h1v1h-1zM200 242h1v1h-1zM231 319h1v1h-1zM255 246h1v1h-1zM429 260h1v1h-1zM513 299h1v1h-1zM570 512h2v2h-2zM412 460h1v1h-1zM614 477h2v2h-2zM921 495h1v1h-1zM314 447h1v1h-1zM366 150h1v1h-1zM192 397h1v1h-1zM555 325h1v1h-1zM88 113h1v1h-1zM231 134h1v1h-1zM430 376h1v1h-1zM206 298h1v1h-1zM396 29h1v1h-1zM319 404h1v1h-1zM434 429h1v1h-1zM413 127h1v1h-1zM321 459h1v1h-1zM504 482h2v2h-2zM390 296h2v2h-2zM544 214h1v1h-1zM317 24h1v1h-1zM171 501h1v1h-1zM532 366h1v1h-1zM239 257h1v1h-1zM69 60h1v1h-1zM753 47h1v1h-1zM552 268h1v1h-1zM508 359h2v2h-2zM842 181h1v1h-1zM63 147h1v1h-1zM1044 448h1v1h-1zM447 397h1v1h-1zM618 448h2v2h-2zM668 492h2v2h-2zM538 387h1v1h-1zM371 341h2v2h-2zM632 230h1v1h-1zM375 3h1v1h-1zM321 117h1v1h-1zM365 164h1v1h-1zM355 272h1v1h-1zM602 410h1v1h-1zM500 257h1v1h-1zM339 448h1v1h-1zM269 390h1v1h-1zM678 473h1v1h-1zM423 163h2v2h-2zM851 376h1v1h-1zM594 123h1v1h-1zM378 91h1v1h-1zM795 360h1v1h-1zM491 78h1v1h-1zM261 329h2v2h-2zM877 379h1v1h-1zM662 321h1v1h-1zM247 116h1v1h-1zM195 318h1v1h-1zM431 239h1v1h-1zM321 346h1v1h-1zM136 330h1v1h-1zM354 444h1v1h-1zM290 72h1v1h-1zM487 330h1v1h-1zM300 463h1v1h-1zM299 90h1v1h-1zM975 61h1v1h-1zM382 177h1v1h-1zM905 428h1v1h-1zM353 415h1v1h-1zM1054 388h2v2h-2zM522 403h1v1h-1zM443 497h1v1h-1zM448 333h1v1h-1zM118 50h1v1h-1zM474 375h1v1h-1zM540 431h1v1h-1zM335 285h1v1h-1zM599 406h1v1h-1zM375 142h1v1h-1zM363 181h2v2h-2zM393 171h1v1h-1zM524 304h1v1h-1zM799 195h1v1h-1zM135 310h1v1h-1zM90 118h1v1h-1zM623 372h1v1h-1zM505 524h1v1h-1zM609 7h1v1h-1zM486 340h1v1h-1zM202 202h1v1h-1zM665 498h1v1h-1zM433 172h1v1h-1zM614 480h1v1h-1zM162 14h1v1h-1zM385 337h1v1h-1zM543 272h1v1h-1zM748 396h2v2h-2zM435 56h1v1h-1zM156 197h1v1h-1zM651 417h1v1h-1zM53 131h1v1h-1zM405 130h1v1h-1zM578 408h1v1h-1zM160 404h1v1h-1zM109 432h1v1h-1zM290 502h1v1h-1zM263 346h1v1h-1zM454 377h1v1h-1zM1086 5h2v2h-2zM41 530h1v1h-1zM172 1h1v1h-1zM466 494h1v1h-1zM527 296h1v1h-1zM854 494h1v1h-1zM256 193h1v1h-1zM866 448h1v1h-1zM420 433h1v1h-1zM236 60h1v1h-1zM349 85h1v1h-1zM891 335h1v1h-1zM727 458h1v1h-1zM192 201h1v1h-1zM299 196h2v2h-2zM415 487h1v1h-1zM552 519h1v1h-1zM209 471h1v1h-1zM510 202h1v1h-1zM436 119h2v2h-2zM330 426h1v1h-1zM236 480h2v2h-2zM282 420h1v1h-1zM313 374h2v2h-2zM296 217h2v2h-2zM587 452h1v1h-1zM1108 469h1v1h-1zM454 381h1v1h-1zM373 129h1v1h-1zM307 202h1v1h-1zM462 488h1v1h-1zM994 392h1v1h-1zM460 367h1v1h-1zM114 353h1v1h-1zM875 313h1v1h-1zM400 457h1v1h-1zM671 435h1v1h-1zM346 196h2v2h-2zM444 129h1v1h-1zM584 394h2v2h-2zM328 141h1v1h-1zM363 95h1v1h-1zM399 288h1v1h-1zM131 120h2v2h-2zM301 288h1v1h-1zM513 355h1v1h-1zM321 313h1v1h-1zM359 354h1v1h-1zM651 512h1v1h-1zM105 468h1v1h-1zM426 477h1v1h-1zM166 37h1v1h-1zM804 20h1v1h-1zM610 420h1v1h-1zM188 533h1v1h-1zM984 218h1v1h-1zM709 228h2v2h-2zM447 235h1v1h-1zM377 306h1v1h-1zM175 455h1v1h-1zM429 466h1v1h-1zM327 200h2v2h-2zM823 413h1v1h-1zM216 312h1v1h-1zM474 124h1v1h-1zM202 366h1v1h-1zM143 184h1v1h-1zM529 453h1v1h-1zM518 429h1v1h-1zM406 433h1v1h-1zM579 27h1v1h-1zM924 93h1v1h-1zM431 406h1v1h-1zM569 435h1v1h-1zM186 106h2v2h-2zM21 121h2v2h-2zM550 520h2v2h-2zM604 463h1v1h-1zM412 534h1v1h-1zM417 337h1v1h-1zM115 66h2v2h-2zM511 163h2v2h-2zM360 273h1v1h-1zM614 445h1v1h-1zM370 326h2v2h-2zM201 461h1v1h-1zM299 532h1v1h-1zM440 531h1v1h-1zM431 384h1v1h-1zM114 481h1v1h-1zM474 279h1v1h-1zM373 260h2v2h-2zM143 257h1v1h-1zM379 4h1v1h-1zM298 412h1v1h-1zM277 167h2v2h-2zM454 42h1v1h-1zM390 456h1v1h-1zM356 364h1v1h-1zM434 243h1v1h-1zM205 55h1v1h-1zM537 515h1v1h-1zM408 528h2v2h-2zM1025 458h1v1h-1zM334 266h1v1h-1zM573 52h1v1h-1zM651 395h2v2h-2zM301 201h1v1h-1zM619 413h1v1h-1zM997 30h1v1h-1zM430 448h1v1h-1zM288 333h1v1h-1zM243 268h1v1h-1zM443 378h1v1h-1zM265 156h1v1h-1zM725 502h1v1h-1zM544 408h1v1h-1zM362 316h1v1h-1zM101 250h1v1h-1zM377 278h2v2h-2zM443 177h1v1h-1zM326 214h1v1h-1zM486 382h1v1h-1zM918 384h2v2h-2zM285 287h1v1h-1zM283 395h1v1h-1zM164 289h1v1h-1zM470 482h1v1h-1zM660 273h2v2h-2zM263 429h1v1h-1zM165 385h1v1h-1zM329 114h2v2h-2zM547 343h2v2h-2zM359 61h2v2h-2zM483 40h1v1h-1zM494 500h2v2h-2zM363 268h1v1h-1zM1022 515h1v1h-1zM350 133h1v1h-1zM283 305h1v1h-1zM555 528h1v1h-1zM265 318h1v1h-1zM479 462h1v1h-1zM105 313h1v1h-1zM398 12h1v1h-1zM423 341h1v1h-1zM302 378h1v1h-1zM341 375h1v1h-1zM248 135h1v1h-1zM365 447h2v2h-2zM161 492h1v1h-1zM611 422h1v1h-1zM262 81h1v1h-1zM217 517h2v2h-2zM126 146h1v1h-1zM942 149h1v1h-1zM441 196h1v1h-1zM408 185h1v1h-1zM402 209h1v1h-1zM444 437h1v1h-1zM454 50h1v1h-1zM533 472h1v1h-1zM264 246h1v1h-1zM486 411h1v1h-1zM384 53h1v1h-1zM671 479h1v1h-1zM288 103h1v1h-1zM446 19h1v1h-1zM253 150h1v1h-1zM182 209h1v1h-1zM532 475h1v1h-1zM478 97h1v1h-1zM309 409h1v1h-1zM370 520h1v1h-1zM606 436h1v1h-1zM487 352h2v2h-2zM1133 80h1v1h-1zM834 509h2v2h-2zM440 320h1v1h-1zM182 457h1v1h-1zM94 532h1v1h-1zM286 140h1v1h-1zM310 54h1v1h-1zM278 214h2v2h-2zM258 421h1v1h-1zM928 468h1v1h-1zM406 415h1v1h-1zM275 12h1v1h-1zM296 99h2v2h-2zM625 0h1v1h-1zM336 13h1v1h-1zM102 314h1v1h-1zM543 477h2v2h-2zM635 200h1v1h-1zM453 81h1v1h-1zM393 300h1v1h-1zM506 97h1v1h-1zM1148 66h2v2h-2zM178 451h1v1h-1zM417 348h1v1h-1zM222 355h1v1h-1zM382 399h1v1h-1zM198 306h1v1h-1zM995 122h1v1h-1zM872 400h1v1h-1zM341 311h1v1h-1zM686 176h1v1h-1zM371 260h1v1h-1zM236 119h1v1h-1zM606 77h1v1h-1zM415 105h1v1h-1zM58 110h1v1h-1zM290 238h1v1h-1zM262 301h1v1h-1zM463 126h2v2h-2zM532 538h1v1h-1zM440 222h2v2h-2zM288 215h1v1h-1zM456 189h1v1h-1zM1049 229h1v1h-1zM293 235h1v1h-1zM301 221h1v1h-1zM220 352h1v1h-1zM514 527h1v1h-1zM514 187h1v1h-1zM618 375h1v1h-1zM596 470h1v1h-1zM58 487h1v1h-1zM466 320h1v1h-1zM386 318h1v1h-1zM366 292h1v1h-1zM371 180h1v1h-1zM212 453h1v1h-1zM505 125h1v1h-1zM330 328h1v1h-1zM402 229h1v1h-1zM676 407h1v1h-1zM276 251h1v1h-1zM263 206h1v1h-1zM397 415h1v1h-1zM431 333h1v1h-1zM1095 129h1v1h-1zM232 50h1v1h-1zM433 270h1v1h-1zM573 111h1v1h-1zM337 30h1v1h-1zM361 456h1v1h-1zM96 11h1v1h-1zM176 51h1v1h-1zM265 304h1v1h-1zM208 34h1v1h-1zM59 402h1v1h-1zM1046 442h1v1h-1zM419 384h1v1h-1zM698 476h1v1h-1zM443 359h1v1h-1zM282 296h1v1h-1zM763 226h1v1h-1zM238 259h1v1h-1zM212 420h1v1h-1zM379 512h1v1h-1zM259 351h1v1h-1zM292 4h1v1h-1zM550 29h1v1h-1zM385 312h1v1h-1zM433 208h2v2h-2zM235 534h1v1h-1zM435 207h1v1h-1zM336 289h1v1h-1zM717 360h1v1h-1zM459 426h1v1h-1zM328 226h1v1h-1zM550 477h1v1h-1zM438 538h1v1h-1zM493 300h1v1h-1zM471 145h1v1h-1zM860 380h1v1h-1zM987 415h1v1h-1zM462 180h1v1h-1zM400 136h1v1h-1zM56 142h1v1h-1zM439 224h1v1h-1zM315 472h1v1h-1zM269 539h1v1h-1zM291 370h1v1h-1zM383 9h1v1h-1zM313 83h1v1h-1zM328 233h1v1h-1zM147 222h1v1h-1zM349 381h1v1h-1zM864 427h1v1h-1zM457 409h1v1h-1zM184 219h1v1h-1zM873 362h1v1h-1zM228 170h1v1h-1zM442 303h1v1h-1zM520 371h2v2h-2zM597 459h1v1h-1zM104 140h1v1h-1zM448 433h1v1h-1zM392 503h1v1h-1zM609 367h1v1h-1zM381 494h1v1h-1zM257 320h2v2h-2zM409 444h1v1h-1zM424 284h2v2h-2zM610 65h1v1h-1zM408 239h2v2h-2zM333 345h1v1h-1zM51 360h1v1h-1zM638 304h1v1h-1zM210 335h1v1h-1zM618 455h1v1h-1zM95 133h1v1h-1zM358 220h1v1h-1zM241 108h1v1h-1zM469 479h1v1h-1zM596 497h1v1h-1zM627 489h1v1h-1zM516 347h2v2h-2zM184 251h1v1h-1zM398 455h1v1h-1zM969 396h1v1h-1zM449 154h1v1h-1zM370 405h1v1h-1zM28 299h1v1h-1zM657 326h1v1h-1zM901 352h1v1h-1zM498 309h1v1h-1zM291 19h1v1h-1zM130 284h1v1h-1zM440 3h1v1h-1zM608 463h1v1h-1zM267 133h1v1h-1zM633 340h1v1h-1zM394 207h1v1h-1zM187 75h1v1h-1zM359 337h1v1h-1zM375 170h1v1h-1zM85 129h1v1h-1zM296 484h1v1h-1zM499 300h1v1h-1zM163 135h1v1h-1zM514 425h1v1h-1zM326 76h1v1h-1zM331 105h1v1h-1zM511 202h1v1h-1zM255 213h1v1h-1zM613 26h1v1h-1zM499 135h1v1h-1zM358 404h1v1h-1zM465 504h1v1h-1zM541 496h2v2h-2zM425 146h1v1h-1zM405 442h1v1h-1zM1070 198h1v1h-1zM270 187h1v1h-1zM207 494h1v1h-1zM208 87h1v1h-1zM134 8h1v1h-1zM222 277h1v1h-1zM240 232h1v1h-1zM144 315h2v2h-2zM239 149h1v1h-1zM257 409h1v1h-1zM1064 237h2v2h-2zM434 333h1v1h-1zM474 44h1v1h-1zM535 525h2v2h-2zM388 459h1v1h-1zM551 288h1v1h-1zM425 239h1v1h-1zM518 430h1v1h-1zM262 143h2v2h-2zM129 433h1v1h-1zM658 372h2v2h-2zM513 184h1v1h-1zM887 55h1v1h-1zM557 492h1v1h-1zM576 5h1v1h-1zM288 507h1v1h-1zM250 252h1v1h-1zM619 268h1v1h-1zM456 114h1v1h-1zM461 523h1v1h-1zM298 343h1v1h-1zM715 521h2v2h-2zM830 355h2v2h-2zM585 387h1v1h-1zM358 41h1v1h-1zM252 470h1v1h-1zM347 246h1v1h-1zM244 133h1v1h-1zM255 464h1v1h-1zM446 266h2v2h-2zM487 537h1v1h-1zM33 537h1v1h-1zM510 507h1v1h-1zM320 134h1v1h-1zM999 427h1v1h-1zM160 156h1v1h-1zM227 17h1v1h-1zM443 420h1v1h-1zM499 174h1v1h-1zM259 203h1v1h-1zM534 103h1v1h-1zM650 281h2v2h-2zM305 268h2v2h-2zM333 415h1v1h-1zM326 155h2v2h-2zM364 118h1v1h-1zM234 125h1v1h-1zM164 199h2v2h-2zM240 369h1v1h-1zM581 430h1v1h-1zM492 483h1v1h-1zM909 426h1v1h-1zM399 415h1v1h-1zM320 93h1v1h-1zM121 234h1v1h-1zM527 435h1v1h-1zM432 425h1v1h-1zM416 140h1v1h-1zM262 46h1v1h-1zM562 344h1v1h-1zM30 379h1v1h-1zM524 303h1v1h-1zM425 119h1v1h-1zM582 60h1v1h-1zM230 334h1v1h-1zM245 338h1v1h-1zM1159 222h2v2h-2zM423 397h1v1h-1zM284 257h1v1h-1zM1115 115h1v1h-1zM742 493h1v1h-1zM528 252h1v1h-1zM324 4h1v1h-1zM480 457h1v1h-1zM565 431h1v1h-1zM609 341h1v1h-1zM1143 379h1v1h-1zM290 171h2v2h-2zM303 306h1v1h-1zM736 169h1v1h-1zM249 507h1v1h-1zM102 494h1v1h-1zM676 347h1v1h-1zM229 242h1v1h-1zM1095 447h1v1h-1zM72 49h1v1h-1zM318 251h1v1h-1zM468 4h1v1h-1zM251 148h1v1h-1zM1002 271h1v1h-1zM540 462h1v1h-1zM483 172h1v1h-1zM1023 443h1v1h-1zM263 534h2v2h-2zM685 388h1v1h-1zM408 324h1v1h-1zM290 290h1v1h-1zM236 129h1v1h-1zM382 494h1v1h-1zM684 432h1v1h-1zM363 505h1v1h-1zM465 265h2v2h-2zM398 20h1v1h-1zM255 199h1v1h-1zM216 508h1v1h-1zM427 376h2v2h-2zM593 248h1v1h-1zM453 472h1v1h-1zM478 408h1v1h-1zM319 460h1v1h-1zM1034 413h1v1h-1zM509 395h1v1h-1zM391 469h1v1h-1zM302 124h1v1h-1zM386 346h1v1h-1zM449 266h1v1h-1zM15 158h1v1h-1zM461 464h1v1h-1zM314 433h1v1h-1zM546 397h1v1h-1zM389 71h1v1h-1zM331 195h1v1h-1zM528 48h1v1h-1zM400 1h1v1h-1zM90 427h1v1h-1zM279 234h1v1h-1zM112 35h1v1h-1zM116 99h1v1h-1zM256 500h1v1h-1zM199 245h2v2h-2zM292 228h1v1h-1zM98 236h1v1h-1zM70 175h1v1h-1zM258 477h1v1h-1zM437 122h1v1h-1zM238 105h1v1h-1zM352 478h1v1h-1zM331 340h2v2h-2zM479 400h1v1h-1zM368 397h1v1h-1zM310 438h1v1h-1zM371 436h1v1h-1zM484 505h1v1h-1zM318 359h1v1h-1zM162 112h1v1h-1zM339 143h1v1h-1zM228 281h1v1h-1zM727 199h1v1h-1zM915 151h1v1h-1zM468 103h1v1h-1zM434 232h1v1h-1zM8 445h1v1h-1zM1011 244h1v1h-1zM758 378h1v1h-1zM219 488h1v1h-1zM637 481h1v1h-1zM461 105h2v2h-2zM117 180h1v1h-1zM372 136h1v1h-1zM321 104h2v2h-2zM637 253h1v1h-1zM400 227h2v2h-2zM278 249h1v1h-1zM442 376h1v1h-1zM381 452h1v1h-1zM557 386h1v1h-1zM96 179h1v1h-1zM820 434h1v1h-1zM697 368h1v1h-1zM179 523h1v1h-1zM528 317h2v2h-2zM526 10h1v1h-1zM1 223h1v1h-1zM589 373h1v1h-1zM716 176h1v1h-1zM304 423h1v1h-1zM128 37h1v1h-1zM270 208h1v1h-1zM225 285h1v1h-1zM380 398h1v1h-1zM801 475h1v1h-1zM528 440h1v1h-1zM282 276h2v2h-2zM1138 521h1v1h-1zM243 415h1v1h-1zM220 21h1v1h-1zM331 430h1v1h-1zM320 283h2v2h-2zM69 124h1v1h-1zM812 462h1v1h-1zM418 521h1v1h-1zM502 534h1v1h-1zM141 480h1v1h-1zM692 444h1v1h-1zM168 27h2v2h-2zM92 58h2v2h-2zM248 139h2v2h-2zM380 324h1v1h-1zM341 126h1v1h-1zM331 113h1v1h-1zM596 344h1v1h-1zM129 129h1v1h-1zM401 451h1v1h-1zM56 388h1v1h-1zM299 288h1v1h-1zM666 68h1v1h-1zM352 354h1v1h-1zM1051 170h1v1h-1zM421 202h1v1h-1zM941 157h1v1h-1zM200 513h1v1h-1zM132 109h1v1h-1zM691 375h1v1h-1zM410 342h1v1h-1zM390 520h1v1h-1zM587 408h1v1h-1zM857 304h1v1h-1zM430 344h1v1h-1zM1041 523h1v1h-1zM192 494h1v1h-1zM275 477h1v1h-1zM511 525h1v1h-1zM573 462h1v1h-1zM124 512h1v1h-1zM411 324h2v2h-2zM387 361h1v1h-1zM75 184h1v1h-1zM549 497h1v1h-1zM336 259h1v1h-1zM264 253h1v1h-1zM1121 371h1v1h-1zM25 130h1v1h-1zM392 140h1v1h-1zM243 315h1v1h-1zM457 480h1v1h-1zM220 117h1v1h-1zM353 421h1v1h-1zM330 166h1v1h-1zM404 475h1v1h-1zM248 449h1v1h-1zM316 133h1v1h-1zM414 390h2v2h-2zM579 181h1v1h-1zM540 273h2v2h-2zM180 70h1v1h-1zM1021 267h1v1h-1zM1064 338h2v2h-2zM347 81h1v1h-1zM111 307h1v1h-1zM595 12h1v1h-1zM894 335h1v1h-1zM377 397h1v1h-1zM264 197h1v1h-1zM209 107h1v1h-1zM702 429h1v1h-1zM227 256h1v1h-1zM1121 468h1v1h-1zM351 201h1v1h-1zM305 147h1v1h-1zM652 470h1v1h-1zM237 520h1v1h-1zM478 341h1v1h-1zM416 522h1v1h-1zM782 259h1v1h-1zM374 289h1v1h-1zM210 168h2v2h-2zM476 231h1v1h-1zM334 49h1v1h-1zM164 334h1v1h-1zM648 215h1v1h-1zM728 529h1v1h-1zM319 428h2v2h-2zM158 82h1v1h-1zM304 400h2v2h-2zM162 413h2v2h-2zM595 485h1v1h-1zM319 362h1v1h-1zM379 302h2v2h-2zM426 4h1v1h-1zM345 133h1v1h-1zM539 85h1v1h-1zM369 383h1v1h-1zM685 367h1v1h-1zM482 461h1v1h-1zM1037 473h1v1h-1zM142 132h1v1h-1zM518 330h1v1h-1zM322 377h1v1h-1zM937 538h1v1h-1zM206 131h1v1h-1zM1075 8h1v1h-1zM160 244h1v1h-1zM1019 425h1v1h-1zM426 177h1v1h-1zM352 465h1v1h-1zM312 329h1v1h-1zM372 213h1v1h-1zM716 275h1v1h-1zM458 348h1v1h-1zM269 147h1v1h-1zM465 129h1v1h-1zM23 519h1v1h-1zM145 169h1v1h-1zM510 344h2v2h-2zM344 275h1v1h-1zM148 91h1v1h-1zM598 493h1v1h-1zM580 446h1v1h-1zM236 262h1v1h-1zM128 374h1v1h-1zM349 231h1v1h-1zM508 249h1v1h-1zM298 302h1v1h-1zM358 485h1v1h-1zM988 425h1v1h-1zM963 77h1v1h-1zM377 233h1v1h-1zM406 346h1v1h-1zM318 295h1v1h-1zM1042 423h1v1h-1zM330 298h2v2h-2zM230 315h1v1h-1zM459 226h1v1h-1zM235 235h1v1h-1zM202 400h1v1h-1zM332 67h1v1h-1zM850 451h1v1h-1zM330 434h1v1h-1zM644 436h1v1h-1zM309 470h1v1h-1zM237 194h1v1h-1zM645 233h1v1h-1zM125 121h1v1h-1zM397 408h1v1h-1zM406 151h1v1h-1zM330 425h1v1h-1zM293 377h2v2h-2zM266 0h1v1h-1zM234 308h1v1h-1zM556 296h1v1h-1zM545 208h1v1h-1zM509 289h1v1h-1zM520 321h1v1h-1zM408 529h1v1h-1zM445 486h1v1h-1zM399 408h1v1h-1zM300 30h1v1h-1zM479 338h1v1h-1zM437 382h1v1h-1zM258 311h1v1h-1zM174 174h2v2h-2zM430 170h1v1h-1zM428 135h2v2h-2zM436 278h1v1h-1zM241 457h1v1h-1zM64 194h1v1h-1zM993 400h1v1h-1zM133 406h1v1h-1zM263 368h1v1h-1zM331 366h1v1h-1zM699 446h1v1h-1zM1105 153h1v1h-1zM254 68h1v1h-1zM134 355h2v2h-2zM480 370h1v1h-1zM150 281h2v2h-2zM695 339h1v1h-1zM124 480h1v1h-1zM441 214h1v1h-1zM353 439h1v1h-1zM191 18h1v1h-1zM503 84h1v1h-1zM300 36h1v1h-1zM477 319h1v1h-1zM396 339h1v1h-1zM340 475h1v1h-1zM507 205h1v1h-1zM88 277h1v1h-1zM366 285h1v1h-1zM536 432h1v1h-1zM70 466h1v1h-1zM520 117h1v1h-1zM264 385h1v1h-1zM377 164h1v1h-1zM347 216h1v1h-1zM452 167h1v1h-1zM462 376h1v1h-1zM444 475h1v1h-1zM1057 117h1v1h-1zM328 458h2v2h-2zM491 522h1v1h-1zM602 113h1v1h-1zM354 301h1v1h-1zM458 410h1v1h-1zM544 321h1v1h-1zM296 379h1v1h-1zM484 421h1v1h-1zM901 508h1v1h-1zM905 410h1v1h-1zM378 27h1v1h-1zM669 333h1v1h-1zM651 281h1v1h-1zM808 448h1v1h-1zM364 447h1v1h-1zM277 488h1v1h-1zM1005 125h2v2h-2zM587 530h1v1h-1zM423 467h1v1h-1zM306 171h1v1h-1zM239 162h1v1h-1zM397 126h1v1h-1zM114 304h1v1h-1zM366 260h1v1h-1zM219 219h1v1h-1zM235 51h1v1h-1zM475 300h1v1h-1zM44 367h2v2h-2zM618 296h1v1h-1zM665 493h2v2h-2zM677 329h2v2h-2zM371 291h1v1h-1zM321 27h1v1h-1zM335 152h2v2h-2zM532 495h1v1h-1zM758 280h1v1h-1zM665 261h1v1h-1zM431 66h1v1h-1zM156 336h1v1h-1zM240 220h2v2h-2zM416 68h2v2h-2zM1140 152h1v1h-1zM259 530h1v1h-1zM549 490h1v1h-1zM984 465h1v1h-1zM309 186h1v1h-1zM393 324h1v1h-1zM680 366h2v2h-2zM372 253h2v2h-2zM609 200h1v1h-1zM493 206h1v1h-1zM452 25h1v1h-1zM473 16h1v1h-1zM814 479h1v1h-1zM191 510h1v1h-1zM488 104h1v1h-1zM549 78h2v2h-2zM352 205h1v1h-1zM458 381h1v1h-1zM174 241h1v1h-1zM396 385h1v1h-1zM777 507h1v1h-1zM276 473h1v1h-1zM884 263h1v1h-1zM480 244h1v1h-1zM303 254h2v2h-2zM370 2h1v1h-1zM118 371h1v1h-1zM1140 178h1v1h-1zM590 347h1v1h-1zM533 452h1v1h-1zM159 175h1v1h-1zM298 298h2v2h-2zM687 88h2v2h-2zM441 460h1v1h-1zM837 484h1v1h-1zM472 449h1v1h-1zM21 210h1v1h-1zM349 388h1v1h-1zM8 335h1v1h-1zM272 207h1v1h-1zM114 360h1v1h-1zM831 255h1v1h-1zM435 496h2v2h-2zM296 499h1v1h-1zM558 466h1v1h-1zM984 112h1v1h-1zM585 210h1v1h-1zM521 134h2v2h-2zM339 401h1v1h-1zM360 482h2v2h-2zM319 103h1v1h-1zM1096 415h2v2h-2zM113 347h1v1h-1zM209 207h1v1h-1zM444 468h2v2h-2zM504 357h1v1h-1zM169 464h1v1h-1zM526 233h1v1h-1zM294 276h1v1h-1zM162 43h1v1h-1zM107 169h1v1h-1zM150 363h1v1h-1zM366 393h1v1h-1zM189 357h1v1h-1zM512 293h2v2h-2zM733 297h1v1h-1zM600 447h1v1h-1zM158 447h2v2h-2zM1012 6h1v1h-1zM291 452h1v1h-1zM123 500h1v1h-1zM375 503h1v1h-1zM1048 343h1v1h-1zM429 458h1v1h-1zM305 93h2v2h-2zM545 398h1v1h-1zM419 430h2v2h-2zM976 469h1v1h-1zM108 495h1v1h-1zM789 533h1v1h-1zM34 465h1v1h-1zM888 285h1v1h-1zM665 384h1v1h-1zM351 372h2v2h-2zM376 493h1v1h-1zM335 291h1v1h-1zM542 496h1v1h-1zM939 1h1v1h-1zM412 360h1v1h-1zM108 46h1v1h-1zM396 354h1v1h-1zM1004 464h1v1h-1zM426 116h1v1h-1zM1136 382h1v1h-1zM263 473h1v1h-1zM606 321h1v1h-1zM419 137h1v1h-1zM209 456h1v1h-1zM971 332h1v1h-1zM305 506h1v1h-1zM726 119h1v1h-1zM184 246h2v2h-2zM445 166h1v1h-1zM672 351h1v1h-1zM437 453h1v1h-1zM178 324h1v1h-1zM200 386h1v1h-1zM461 329h1v1h-1zM463 493h1v1h-1zM505 410h2v2h-2zM522 489h1v1h-1zM239 22h1v1h-1zM867 112h1v1h-1zM599 289h1v1h-1zM406 260h1v1h-1zM197 38h1v1h-1zM450 28h1v1h-1zM582 423h1v1h-1zM211 365h1v1h-1zM394 205h2v2h-2zM1010 454h1v1h-1zM715 339h1v1h-1zM871 387h1v1h-1zM380 218h1v1h-1zM818 405h1v1h-1zM71 188h1v1h-1zM411 185h1v1h-1zM431 250h1v1h-1zM662 81h1v1h-1zM174 328h1v1h-1zM159 437h1v1h-1zM41 292h1v1h-1zM877 164h1v1h-1zM977 438h1v1h-1zM211 130h2v2h-2zM63 307h1v1h-1zM335 274h1v1h-1zM648 16h1v1h-1zM1095 480h1v1h-1zM187 466h1v1h-1zM271 348h1v1h-1zM623 232h1v1h-1zM759 425h1v1h-1zM467 313h1v1h-1zM396 218h2v2h-2zM257 394h1v1h-1zM536 464h1v1h-1zM595 402h1v1h-1zM237 431h1v1h-1zM257 268h1v1h-1zM278 244h1v1h-1zM370 278h1v1h-1zM431 406h1v1h-1zM789 529h1v1h-1zM929 151h1v1h-1zM640 407h2v2h-2zM101 196h1v1h-1zM400 316h1v1h-1zM201 309h1v1h-1zM339 183h1v1h-1zM627 469h1v1h-1zM245 132h1v1h-1zM217 387h1v1h-1zM368 524h1v1h-1zM540 300h1v1h-1zM625 289h1v1h-1zM258 307h1v1h-1zM716 505h1v1h-1zM833 396h1v1h-1zM252 187h1v1h-1zM340 103h1v1h-1zM145 271h2v2h-2zM331 534h1v1h-1zM522 352h1v1h-1zM294 250h1v1h-1zM269 221h1v1h-1zM244 533h2v2h-2zM352 206h1v1h-1zM247 373h1v1h-1zM326 297h1v1h-1zM463 135h1v1h-1zM215 85h1v1h-1zM536 372h1v1h-1zM610 11h1v1h-1zM1012 5h1v1h-1zM117 494h1v1h-1zM804 262h1v1h-1zM366 366h1v1h-1zM960 443h1v1h-1zM445 389h1v1h-1zM237 326h1v1h-1zM470 308h1v1h-1zM420 57h1v1h-1zM899 134h1v1h-1zM153 235h2v2h-2zM262 438h1v1h-1zM502 476h1v1h-1zM378 162h1v1h-1zM427 235h1v1h-1zM1011 381h1v1h-1zM637 363h1v1h-1zM298 241h1v1h-1zM175 106h1v1h-1zM114 315h1v1h-1zM432 388h2v2h-2zM238 162h1v1h-1zM298 228h1v1h-1zM456 432h1v1h-1zM104 265h1v1h-1zM261 188h1v1h-1zM287 180h2v2h-2zM448 327h1v1h-1zM258 311h1v1h-1zM283 252h1v1h-1zM414 23h1v1h-1zM416 164h1v1h-1zM303 359h1v1h-1zM424 39h1v1h-1zM492 428h1v1h-1zM247 300h1v1h-1zM709 252h1v1h-1zM193 273h2v2h-2zM395 280h1v1h-1zM96 84h1v1h-1zM368 203h1v1h-1zM97 424h1v1h-1zM312 505h2v2h-2zM470 272h1v1h-1zM821 190h1v1h-1zM386 322h2v2h-2zM573 437h1v1h-1zM589 371h1v1h-1zM365 85h1v1h-1zM347 366h1v1h-1zM498 454h1v1h-1zM796 535h1v1h-1z"/><path fill="#ccc" d="M419 134h1v1h-1zM322 74h1v1h-1zM1100 331h1v1h-1zM698 256h1v1h-1zM307 448h2v2h-2zM412 16h1v1h-1zM245 136h1v1h-1zM589 436h1v1h-1zM392 248h1v1h-1zM379 151h2v2h-2zM97 462h1v1h-1zM469 188h1v1h-1zM694 374h1v1h-1zM563 525h1v1h-1zM198 224h1v1h-1zM480 283h1v1h-1zM492 200h1v1h-1zM439 202h1v1h-1zM102 381h1v1h-1zM757 535h1v1h-1zM256 450h1v1h-1zM196 424h1v1h-1zM523 34h1v1h-1zM203 538h1v1h-1zM238 172h1v1h-1zM404 176h1v1h-1zM1037 177h1v1h-1zM293 206h2v2h-2zM284 163h1v1h-1zM177 164h1v1h-1zM1048 428h1v1h-1zM286 89h1v1h-1zM831 6h1v1h-1zM362 324h1v1h-1zM1073 317h1v1h-1zM552 318h1v1h-1zM431 250h1v1h-1zM309 222h1v1h-1zM741 511h1v1h-1zM276 240h1v1h-1zM483 361h1v1h-1zM1033 516h1v1h-1zM600 370h1v1h-1zM752 501h1v1h-1zM802 403h1v1h-1zM489 493h1v1h-1zM805 419h1v1h-1zM118 388h1v1h-1zM514 304h1v1h-1zM275 201h1v1h-1zM102 534h1v1h-1zM195 403h1v1h-1zM406 297h1v1h-1zM167 389h1v1h-1zM275 11h2v2h-2zM395 74h1v1h-1zM108 84h1v1h-1zM491 291h1v1h-1zM267 334h1v1h-1zM317 137h1v1h-1zM142 293h1v1h-1zM407 383h1v1h-1zM251 308h1v1h-1zM418 421h1v1h-1zM268 232h2v2h-2zM475 379h1v1h-1zM174 367h1v1h-1zM607 433h1v1h-1zM270 314h1v1h-1zM352 141h1v1h-1zM178 143h1v1h-1zM37 426h1v1h-1zM795 383h1v1h-1zM485 327h1v1h-1zM48 444h2v2h-2zM294 225h1v1h-1zM188 399h1v1h-1zM301 417h1v1h-1zM838 401h1v1h-1zM46 447h1v1h-1zM73 111h1v1h-1zM953 69h1v1h-1zM100 421h2v2h-2zM621 40h1v1h-1zM239 210h1v1h-1zM777 150h1v1h-1zM895 359h2v2h-2zM234 540h2v2h-2zM1122 385h2v2h-2zM210 374h1v1h-1zM389 282h1v1h-1zM250 454h1v1h-1zM460 282h1v1h-1zM257 172h1v1h-1zM73 369h1v1h-1zM293 354h1v1h-1zM483 475h1v1h-1zM1043 89h1v1h-1zM487 277h1v1h-1zM377 506h1v1h-1zM119 149h1v1h-1zM238 274h1v1h-1zM342 325h2v2h-2zM368 247h1v1h-1zM722 353h1v1h-1zM358 277h1v1h-1zM107 119h1v1h-1zM396 221h2v2h-2zM565 199h1v1h-1zM213 85h1v1h-1zM43 93h1v1h-1zM270 316h1v1h-1zM159 364h1v1h-1zM349 397h2v2h-2zM427 275h1v1h-1zM355 393h1v1h-1zM524 265h1v1h-1zM441 108h1v1h-1zM304 499h1v1h-1zM142 9h1v1h-1zM216 236h1v1h-1zM740 275h1v1h-1zM453 229h1v1h-1zM466 308h2v2h-2zM554 467h1v1h-1zM503 105h1v1h-1zM318 232h1v1h-1zM479 459h1v1h-1zM433 53h2v2h-2zM928 323h2v2h-2zM616 378h1v1h-1zM65 161h1v1h-1zM431 270h1v1h-1zM352 410h1v1h-1zM372 107h1v1h-1zM327 277h1v1h-1zM354 284h1v1h-1zM732 279h1v1h-1zM545 503h2v2h-2zM260 413h1v1h-1zM740 185h1v1h-1zM310 493h1v1h-1zM594 323h2v2h-2zM80 140h1v1h-1zM223 264h1v1h-1zM297 458h1v1h-1zM505 503h1v1h-1zM472 291h1v1h-1zM178 449h1v1h-1zM146 337h1v1h-1zM546 250h1v1h-1zM525 496h1v1h-1zM264 305h1v1h-1zM733 504h1v1h-1zM253 123h1v1h-1zM424 442h1v1h-1zM156 142h1v1h-1zM615 355h1v1h-1zM323 107h1v1h-1zM518 193h1v1h-1zM346 264h1v1h-1zM572 430h1v1h-1zM155 5h1v1h-1zM264 26h1v1h-1zM757 43h1v1h-1zM364 323h1v1h-1zM278 178h1v1h-1zM166 292h1v1h-1zM310 450h1v1h-1zM620 269h1v1h-1zM580 538h1v1h-1zM423 37h1v1h-1zM224 188h1v1h-1zM487 273h1v1h-1zM434 411h1v1h-1zM216 181h1v1h-1zM419 358h2v2h-2zM197 173h1v1h-1zM151 143h1v1h-1zM288 433h2v2h-2zM842 22h1v1h-1zM587 459h1v1h-1zM352 36h1v1h-1zM363 191h2v2h-2zM369 4h1v1h-1zM94 102h1v1h-1zM100 336h1v1h-1zM692 102h1v1h-1zM464 521h2v2h-2zM774 468h1v1h-1zM611 435h1v1h-1zM229 426h2v2h-2zM564 228h1v1h-1zM553 538h1v1h-1zM123 334h1v1h-1zM460 463h1v1h-1zM607 423h1v1h-1zM428 284h1v1h-1zM487 347h2v2h-2zM367 158h1v1h-1zM174 453h1v1h-1zM356 503h1v1h-1zM442 190h1v1h-1zM453 392h1v1h-1zM492 269h1v1h-1zM277 342h1v1h-1zM366 184h1v1h-1zM36 110h1v1h-1zM797 72h1v1h-1zM869 295h1v1h-1zM874 247h1v1h-1zM184 326h1v1h-1zM695 29h1v1h-1zM210 350h1v1h-1zM544 19h1v1h-1zM1024 172h1v1h-1zM304 286h1v1h-1zM272 335h1v1h-1zM213 274h1v1h-1zM468 216h1v1h-1zM429 292h1v1h-1zM216 386h1v1h-1zM245 140h1v1h-1zM705 417h1v1h-1zM325 506h2v2h-2zM594 190h1v1h-1zM397 414h1v1h-1zM462 423h1v1h-1zM293 215h1v1h-1zM654 248h1v1h-1zM127 437h1v1h-1zM447 251h1v1h-1zM216 30h1v1h-1zM118 305h2v2h-2zM254 322h1v1h-1zM987 387h1v1h-1zM190 493h1v1h-1zM163 260h1v1h-1zM384 93h1v1h-1zM686 300h2v2h-2zM368 151h1v1h-1zM163 63h1v1h-1zM187 128h1v1h-1zM320 440h1v1h-1zM1003 466h1v1h-1zM212 196h2v2h-2zM283 357h1v1h-1zM479 512h1v1h-1zM246 139h1v1h-1zM372 146h1v1h-1zM532 395h1v1h-1zM638 460h1v1h-1zM823 3h1v1h-1zM254 204h1v1h-1zM342 534h1v1h-1zM290 363h1v1h-1zM234 168h2v2h-2zM170 426h1v1h-1zM370 258h1v1h-1zM476 207h1v1h-1zM378 19h1v1h-1zM145 196h1v1h-1zM151 153h1v1h-1zM478 528h1v1h-1zM362 51h1v1h-1zM106 341h1v1h-1zM346 30h1v1h-1zM662 533h1v1h-1zM562 181h2v2h-2zM113 37h1v1h-1zM176 123h1v1h-1zM461 204h1v1h-1zM448 165h1v1h-1zM993 486h1v1h-1zM270 119h1v1h-1zM273 529h1v1h-1zM280 275h1v1h-1zM345 147h1v1h-1zM847 316h2v2h-2zM258 199h1v1h-1zM162 274h1v1h-1zM988 234h1v1h-1zM205 374h1v1h-1zM394 320h1v1h-1zM472 11h1v1h-1zM1152 162h1v1h-1zM634 379h1v1h-1zM455 309h1v1h-1zM1028 474h1v1h-1zM565 443h1v1h-1zM117 534h1v1h-1zM888 269h1v1h-1zM441 371h1v1h-1zM421 470h1v1h-1zM576 376h1v1h-1zM516 411h1v1h-1zM121 465h1v1h-1zM258 540h1v1h-1zM923 393h1v1h-1zM479 141h1v1h-1zM501 339h1v1h-1zM369 416h1v1h-1zM590 62h1v1h-1zM415 141h1v1h-1zM395 167h1v1h-1zM553 279h1v1h-1zM141 508h1v1h-1zM415 145h1v1h-1zM427 84h1v1h-1zM440 501h1v1h-1zM135 395h1v1h-1zM395 342h1v1h-1zM1041 165h1v1h-1zM375 408h1v1h-1zM670 81h2v2h-2zM266 356h1v1h-1zM585 223h2v2h-2zM115 445h1v1h-1zM185 187h1v1h-1zM291 503h1v1h-1zM503 443h1v1h-1zM299 205h1v1h-1zM562 501h1v1h-1zM274 532h1v1h-1zM358 329h1v1h-1zM360 320h1v1h-1zM592 285h1v1h-1zM246 353h1v1h-1zM337 288h1v1h-1zM537 409h1v1h-1zM733 277h1v1h-1zM786 429h1v1h-1zM760 439h2v2h-2zM253 227h1v1h-1zM475 439h1v1h-1zM432 468h1v1h-1zM633 414h1v1h-1zM139 144h1v1h-1zM678 438h2v2h-2zM413 266h2v2h-2zM37 256h2v2h-2zM449 222h1v1h-1zM388 391h1v1h-1zM460 197h1v1h-1zM447 123h1v1h-1zM98 296h1v1h-1zM351 404h1v1h-1zM338 115h1v1h-1zM463 415h1v1h-1zM453 313h1v1h-1zM761 500h1v1h-1zM512 68h2v2h-2zM295 524h1v1h-1zM597 533h1v1h-1zM631 278h1v1h-1zM12 251h1v1h-1zM470 413h1v1h-1zM622 46h1v1h-1zM468 359h1v1h-1zM308 462h1v1h-1zM533 303h1v1h-1zM250 105h1v1h-1zM270 305h1v1h-1zM401 40h1v1h-1zM310 105h1v1h-1zM198 352h1v1h-1zM1122 355h1v1h-1zM52 343h1v1h-1zM306 164h1v1h-1zM662 396h1v1h-1zM253 343h1v1h-1zM476 187h2v2h-2zM472 297h1v1h-1zM755 390h2v2h-2zM411 338h1v1h-1zM407 165h1v1h-1zM660 379h1v1h-1zM439 437h1v1h-1zM629 441h1v1h-1zM464 527h1v1h-1zM821 49h2v2h-2zM265 536h1v1h-1zM343 312h1v1h-1zM383 386h1v1h-1zM233 182h1v1h-1zM560 421h2v2h-2zM269 277h1v1h-1zM752 297h1v1h-1zM1014 209h1v1h-1zM308 69h1v1h-1zM233 333h1v1h-1zM731 9h1v1h-1zM1121 497h1v1h-1zM260 125h1v1h-1zM439 112h1v1h-1zM703 394h1v1h-1zM393 272h1v1h-1zM128 299h1v1h-1zM432 239h2v2h-2zM447 401h1v1h-1zM243 387h1v1h-1zM680 166h1v1h-1zM916 425h1v1h-1zM357 340h1v1h-1zM362 408h1v1h-1zM342 216h1v1h-1zM372 220h1v1h-1zM332 259h1v1h-1zM416 96h1v1h-1zM353 463h1v1h-1zM186 312h1v1h-1zM592 490h1v1h-1zM357 169h2v2h-2zM183 354h1v1h-1zM276 454h1v1h-1zM566 397h1v1h-1zM681 472h1v1h-1zM403 271h1v1h-1zM551 130h2v2h-2zM139 125h1v1h-1zM510 65h2v2h-2zM380 328h1v1h-1zM549 171h1v1h-1zM504 32h1v1h-1zM603 62h1v1h-1zM286 278h1v1h-1zM172 445h1v1h-1zM618 421h1v1h-1zM395 213h1v1h-1zM206 430h1v1h-1zM41 521h1v1h-1zM843 73h1v1h-1zM288 412h1v1h-1zM470 322h1v1h-1zM284 227h1v1h-1zM695 283h1v1h-1zM276 301h1v1h-1zM532 486h2v2h-2zM420 207h1v1h-1zM485 492h1v1h-1zM423 480h1v1h-1zM111 17h1v1h-1zM200 194h1v1h-1zM219 484h1v1h-1zM358 460h1v1h-1zM546 418h1v1h-1zM610 455h1v1h-1zM427 210h1v1h-1zM201 160h1v1h-1zM486 533h1v1h-1zM357 225h2v2h-2zM840 364h1v1h-1zM178 251h2v2h-2zM364 330h2v2h-2zM526 357h1v1h-1zM230 251h1v1h-1zM390 331h1v1h-1zM349 26h1v1h-1zM850 389h1v1h-1zM855 393h1v1h-1zM587 31h1v1h-1zM641 116h1v1h-1zM509 451h1v1h-1zM599 182h1v1h-1zM518 302h1v1h-1zM569 386h1v1h-1zM220 389h2v2h-2zM1028 374h1v1h-1zM505 359h1v1h-1zM380 501h1v1h-1zM160 87h1v1h-1zM249 511h2v2h-2zM580 487h1v1h-1zM234 368h2v2h-2zM365 446h1v1h-1zM561 522h1v1h-1zM469 144h2v2h-2zM387 313h1v1h-1zM336 467h1v1h-1zM395 335h1v1h-1zM966 372h1v1h-1zM440 443h1v1h-1zM459 358h1v1h-1zM284 363h1v1h-1zM1034 268h1v1h-1zM542 97h1v1h-1zM427 201h1v1h-1zM857 500h1v1h-1zM357 432h1v1h-1zM190 461h1v1h-1zM253 159h1v1h-1zM330 365h2v2h-2zM437 218h1v1h-1zM512 465h1v1h-1zM518 396h1v1h-1zM26 295h1v1h-1zM325 107h1v1h-1zM539 100h1v1h-1zM512 331h2v2h-2zM354 62h1v1h-1zM793 333h1v1h-1zM925 536h1v1h-1zM25 190h1v1h-1zM803 324h1v1h-1zM358 428h1v1h-1zM423 266h1v1h-1zM438 211h1v1h-1zM327 126h2v2h-2zM216 194h1v1h-1zM414 1h1v1h-1zM635 509h1v1h-1zM152 64h1v1h-1zM188 237h2v2h-2zM127 331h1v1h-1zM414 237h1v1h-1zM251 260h1v1h-1zM464 96h1v1h-1zM238 138h2v2h-2zM184 315h1v1h-1zM555 507h1v1h-1zM762 386h1v1h-1zM970 123h1v1h-1zM685 177h2v2h-2zM468 367h1v1h-1zM605 488h1v1h-1zM289 412h1v1h-1zM753 398h1v1h-1zM214 226h2v2h-2zM715 395h1v1h-1zM366 487h1v1h-1zM508 75h1v1h-1zM304 31h1v1h-1zM1134 475h1v1h-1zM395 198h1v1h-1zM347 515h1v1h-1zM973 83h1v1h-1zM1021 358h2v2h-2zM219 499h1v1h-1zM454 65h1v1h-1zM661 378h2v2h-2zM429 305h1v1h-1zM322 213h1v1h-1zM367 473h1v1h-1zM55 418h1v1h-1zM748 2h2v2h-2zM178 234h1v1h-1zM674 29h1v1h-1zM430 405h1v1h-1zM126 367h1v1h-1zM398 211h1v1h-1zM544 74h2v2h-2zM410 74h1v1h-1zM207 242h1v1h-1zM337 117h1v1h-1zM137 473h1v1h-1zM118 48h1v1h-1zM238 128h1v1h-1zM124 469h1v1h-1zM389 388h1v1h-1zM893 515h1v1h-1zM155 261h1v1h-1zM332 104h1v1h-1zM206 84h1v1h-1zM537 167h1v1h-1zM308 250h1v1h-1zM201 440h1v1h-1zM118 140h1v1h-1zM394 355h1v1h-1zM766 460h1v1h-1zM444 275h1v1h-1zM961 89h1v1h-1zM873 429h1v1h-1zM664 431h1v1h-1zM348 241h1v1h-1zM329 426h1v1h-1zM830 462h2v2h-2zM245 432h1v1h-1zM575 301h1v1h-1zM255 476h1v1h-1zM399 226h1v1h-1zM470 432h1v1h-1zM414 262h1v1h-1zM260 187h1v1h-1zM327 250h1v1h-1zM225 277h1v1h-1zM452 290h1v1h-1zM362 182h1v1h-1zM274 72h1v1h-1zM1078 23h1v1h-1zM305 87h1v1h-1zM273 86h1v1h-1zM486 372h1v1h-1zM904 448h1v1h-1zM153 35h1v1h-1zM106 394h1v1h-1zM190 412h1v1h-1zM658 255h1v1h-1zM484 334h1v1h-1zM643 357h1v1h-1zM1105 370h1v1h-1zM384 21h1v1h-1zM302 201h1v1h-1zM251 79h2v2h-2zM588 448h2v2h-2zM300 252h1v1h-1zM197 442h2v2h-2zM246 141h1v1h-1zM332 146h1v1h-1zM561 413h1v1h-1zM375 115h1v1h-1zM256 350h1v1h-1zM336 496h1v1h-1zM1157 479h1v1h-1zM529 367h1v1h-1zM600 266h2v2h-2zM371 121h1v1h-1zM175 248h1v1h-1zM215 250h1v1h-1zM122 443h1v1h-1zM73 213h1v1h-1zM521 273h1v1h-1zM529 312h1v1h-1zM146 110h1v1h-1zM308 506h1v1h-1zM796 295h1v1h-1zM214 311h1v1h-1zM708 78h1v1h-1zM67 211h1v1h-1zM895 267h1v1h-1zM145 474h1v1h-1zM267 526h1v1h-1zM61 319h1v1h-1zM247 481h1v1h-1zM145 369h1v1h-1zM482 341h1v1h-1zM319 46h1v1h-1zM699 324h1v1h-1zM30 216h1v1h-1zM433 400h1v1h-1zM362 63h1v1h-1zM304 246h1v1h-1zM377 495h1v1h-1zM163 18h1v1h-1zM198 509h1v1h-1zM289 346h1v1h-1zM546 329h1v1h-1zM657 326h1v1h-1zM898 416h1v1h-1zM192 421h1v1h-1zM828 381h1v1h-1zM389 422h1v1h-1zM808 378h1v1h-1zM360 104h1v1h-1zM584 341h1v1h-1zM158 224h1v1h-1zM325 491h1v1h-1zM557 255h1v1h-1zM321 137h1v1h-1zM224 426h1v1h-1zM303 339h1v1h-1zM590 461h1v1h-1zM252 85h1v1h-1zM273 537h1v1h-1zM571 471h1v1h-1zM554 477h1v1h-1zM821 428h1v1h-1zM412 179h1v1h-1zM432 174h1v1h-1zM298 440h2v2h-2zM825 451h1v1h-1zM520 378h1v1h-1zM935 225h1v1h-1zM596 530h1v1h-1zM245 407h1v1h-1zM517 224h1v1h-1zM410 496h1v1h-1zM724 88h1v1h-1zM316 204h1v1h-1zM359 231h1v1h-1zM841 459h1v1h-1zM362 281h1v1h-1zM262 401h1v1h-1zM217 128h1v1h-1zM393 215h1v1h-1zM268 365h1v1h-1zM1018 304h1v1h-1zM301 498h1v1h-1zM1020 449h1v1h-1zM678 526h1v1h-1zM399 496h1v1h-1zM262 161h1v1h-1zM370 473h2v2h-2zM161 354h1v1h-1zM70 319h1v1h-1zM192 32h1v1h-1zM242 426h1v1h-1zM458 419h1v1h-1zM402 346h1v1h-1zM182 440h1v1h-1zM178 309h1v1h-1zM457 360h1v1h-1zM133 354h2v2h-2zM389 465h1v1h-1zM788 53h1v1h-1zM352 420h1v1h-1zM55 109h2v2h-2zM275 65h1v1h-1zM128 192h1v1h-1zM211 512h2v2h-2zM409 335h1v1h-1zM421 471h1v1h-1zM203 78h1v1h-1zM563 400h1v1h-1zM436 10h1v1h-1zM455 323h1v1h-1zM267 484h1v1h-1zM503 271h2v2h-2zM221 248h1v1h-1zM862 137h1v1h-1zM539 473h1v1h-1zM1094 236h2v2h-2zM271 469h1v1h-1zM247 57h1v1h-1zM277 176h1v1h-1zM588 438h1v1h-1zM519 391h2v2h-2zM625 429h1v1h-1zM426 504h1v1h-1zM522 383h1v1h-1zM303 318h1v1h-1zM851 444h1v1h-1zM1062 418h1v1h-1zM471 336h1v1h-1zM472 114h1v1h-1zM139 498h1v1h-1zM493 151h1v1h-1zM563 47h1v1h-1zM551 231h1v1h-1zM492 519h1v1h-1zM52 305h1v1h-1zM251 253h1v1h-1zM332 39h1v1h-1zM33 421h1v1h-1zM422 437h1v1h-1zM390 133h1v1h-1zM455 193h1v1h-1zM114 470h1v1h-1zM1093 366h1v1h-1zM344 112h1v1h-1zM872 330h1v1h-1zM277 289h1v1h-1zM353 101h1v1h-1zM25 341h1v1h-1zM163 527h2v2h-2zM199 87h1v1h-1zM1142 367h1v1h-1zM29 299h1v1h-1zM226 323h1v1h-1zM276 342h1v1h-1zM296 265h1v1h-1zM138 507h1v1h-1zM747 372h1v1h-1zM547 115h1v1h-1zM123 13h2v2h-2zM123 185h1v1h-1zM383 453h1v1h-1zM292 91h1v1h-1zM450 412h2v2h-2zM491 253h1v1h-1zM636 442h1v1h-1zM373 498h1v1h-1zM446 102h1v1h-1zM904 434h1v1h-1zM426 460h1v1h-1zM523 338h1v1h-1zM354 151h1v1h-1zM636 274h2v2h-2zM379 86h1v1h-1zM787 387h1v1h-1zM1142 250h1v1h-1zM393 271h1v1h-1zM399 220h1v1h-1zM246 209h1v1h-1zM1050 359h1v1h-1zM919 434h1v1h-1zM206 159h1v1h-1zM195 194h2v2h-2zM242 158h1v1h-1zM785 391h1v1h-1zM927 110h1v1h-1zM591 185h1v1h-1zM616 288h1v1h-1zM264 158h1v1h-1zM536 274h1v1h-1zM318 454h1v1h-1zM727 477h1v1h-1zM259 228h1v1h-1zM502 359h2v2h-2zM538 380h2v2h-2zM747 489h1v1h-1zM403 517h1v1h-1zM494 328h1v1h-1zM164 309h2v2h-2zM735 318h1v1h-1zM707 465h1v1h-1zM372 293h1v1h-1zM320 334h1v1h-1zM471 123h1v1h-1zM447 481h1v1h-1zM54 521h1v1h-1zM408 146h1v1h-1zM251 101h1v1h-1zM622 169h2v2h-2zM614 300h1v1h-1zM478 361h1v1h-1zM614 529h2v2h-2zM432 248h1v1h-1zM522 379h1v1h-1zM218 214h2v2h-2zM486 328h1v1h-1zM260 139h1v1h-1zM587 495h2v2h-2zM299 229h1v1h-1zM502 327h1v1h-1zM263 277h2v2h-2zM274 440h1v1h-1zM175 282h1v1h-1zM577 536h1v1h-1zM355 22h1v1h-1zM358 110h1v1h-1zM432 441h1v1h-1zM454 6h1v1h-1zM278 237h1v1h-1zM918 363h2v2h-2zM474 434h1v1h-1zM451 533h1v1h-1zM375 434h1v1h-1zM355 414h1v1h-1zM220 79h1v1h-1zM163 450h1v1h-1zM329 132h1v1h-1zM325 193h1v1h-1zM163 276h1v1h-1zM300 40h1v1h-1zM293 216h1v1h-1zM250 79h1v1h-1zM343 330h2v2h-2zM169 26h1v1h-1zM494 345h1v1h-1zM512 189h1v1h-1zM434 239h2v2h-2zM897 452h1v1h-1zM321 379h2v2h-2zM172 181h1v1h-1zM814 151h2v2h-2zM237 366h2v2h-2zM249 140h1v1h-1zM528 431h1v1h-1zM268 230h1v1h-1zM288 231h1v1h-1zM279 275h1v1h-1zM936 295h1v1h-1zM983 351h1v1h-1zM216 287h2v2h-2zM432 261h2v2h-2zM309 312h1v1h-1zM550 471h2v2h-2zM448 80h1v1h-1zM267 438h1v1h-1zM239 109h1v1h-1zM524 488h1v1h-1zM310 257h1v1h-1zM538 200h1v1h-1zM477 370h1v1h-1zM736 392h1v1h-1zM119 137h1v1h-1zM753 218h1v1h-1zM122 222h1v1h-1zM271 37h1v1h-1zM497 317h1v1h-1zM453 24h1v1h-1zM1097 375h1v1h-1zM224 441h1v1h-1zM494 446h1v1h-1zM326 528h1v1h-1zM288 420h1v1h-1zM362 300h1v1h-1zM938 316h2v2h-2zM193 370h1v1h-1zM309 330h1v1h-1zM767 537h1v1h-1zM497 503h2v2h-2zM474 240h1v1h-1zM665 413h1v1h-1zM353 235h1v1h-1zM220 325h1v1h-1zM210 430h1v1h-1zM373 158h1v1h-1zM216 127h1v1h-1zM247 381h1v1h-1zM275 226h1v1h-1zM485 463h1v1h-1zM192 370h2v2h-2zM117 152h1v1h-1zM640 473h1v1h-1zM362 167h1v1h-1zM851 444h1v1h-1zM312 325h1v1h-1zM52 240h2v2h-2zM299 238h1v1h-1zM422 396h2v2h-2zM318 485h1v1h-1zM374 312h1v1h-1zM414 463h1v1h-1zM137 209h1v1h-1zM539 299h1v1h-1zM244 185h1v1h-1zM357 420h1v1h-1zM748 49h1v1h-1zM165 450h2v2h-2zM490 304h1v1h-1zM243 503h1v1h-1zM211 457h1v1h-1zM1126 20h1v1h-1zM572 312h1v1h-1zM293 344h1v1h-1zM366 342h2v2h-2zM332 164h1v1h-1zM92 395h1v1h-1zM612 377h1v1h-1zM915 392h1v1h-1zM128 372h1v1h-1zM260 245h1v1h-1zM482 478h1v1h-1zM558 247h1v1h-1zM314 379h1v1h-1zM682 199h1v1h-1zM315 184h2v2h-2zM383 268h1v1h-1zM422 394h1v1h-1zM243 183h1v1h-1zM231 198h1v1h-1zM169 98h1v1h-1zM238 246h1v1h-1zM338 129h1v1h-1zM365 207h1v1h-1zM230 183h1v1h-1zM354 13h1v1h-1zM1084 443h1v1h-1zM389 233h1v1h-1zM328 305h1v1h-1zM629 475h1v1h-1zM12 385h1v1h-1zM312 94h1v1h-1zM136 425h1v1h-1zM394 487h2v2h-2zM898 168h2v2h-2zM302 466h1v1h-1zM499 319h2v2h-2zM245 131h1v1h-1zM294 136h1v1h-1zM233 406h1v1h-1zM571 372h1v1h-1zM389 439h1v1h-1zM440 297h1v1h-1zM1026 39h1v1h-1zM716 62h2v2h-2zM1141 268h1v1h-1zM827 81h1v1h-1zM985 424h1v1h-1zM395 518h1v1h-1zM474 285h1v1h-1zM250 7h1v1h-1zM889 444h2v2h-2zM1095 417h1v1h-1zM78 123h1v1h-1zM967 469h1v1h-1zM254 489h1v1h-1zM604 444h1v1h-1zM512 229h1v1h-1zM432 294h1v1h-1zM281 153h1v1h-1zM304 417h1v1h-1zM313 8h1v1h-1zM326 329h1v1h-1zM369 231h2v2h-2zM638 282h1v1h-1zM298 456h1v1h-1zM323 444h1v1h-1zM510 528h1v1h-1zM580 470h2v2h-2zM794 392h1v1h-1zM348 329h1v1h-1zM361 362h1v1h-1zM357 134h1v1h-1zM518 339h1v1h-1zM95 18h1v1h-1zM287 301h1v1h-1zM610 410h1v1h-1zM507 337h1v1h-1zM287 112h1v1h-1zM295 6h2v2h-2zM545 467h1v1h-1zM531 536h1v1h-1zM154 286h1v1h-1zM519 484h1v1h-1zM352 305h2v2h-2zM61 312h1v1h-1zM243 178h1v1h-1zM322 270h1v1h-1zM222 23h2v2h-2zM666 513h1v1h-1zM289 189h1v1h-1zM609 502h1v1h-1zM503 359h2v2h-2zM168 270h1v1h-1zM352 408h1v1h-1zM227 506h1v1h-1zM930 28h1v1h-1zM388 6h1v1h-1zM502 434h1v1h-1zM420 207h1v1h-1zM322 377h1v1h-1zM830 451h1v1h-1zM540 523h1v1h-1zM303 266h1v1h-1zM428 185h1v1h-1zM72 357h2v2h-2zM239 484h1v1h-1zM880 384h1v1h-1zM306 515h1v1h-1zM211 240h1v1h-1zM328 139h1v1h-1zM838 422h1v1h-1zM410 207h1v1h-1zM511 400h1v1h-1zM453 446h2v2h-2zM167 347h1v1h-1zM320 434h2v2h-2zM263 297h1v1h-1zM287 5h1v1h-1zM851 468h1v1h-1zM243 339h1v1h-1zM625 331h1v1h-1zM1097 203h2v2h-2zM72 300h1v1h-1zM543 500h1v1h-1zM403 6h1v1h-1zM838 316h1v1h-1zM608 261h2v2h-2zM613 78h1v1h-1zM477 180h1v1h-1zM572 266h1v1h-1zM778 239h2v2h-2zM435 82h1v1h-1zM564 309h1v1h-1zM428 159h1v1h-1zM306 262h1v1h-1zM474 24h1v1h-1zM373 25h1v1h-1zM284 345h2v2h-2zM504 433h2v2h-2zM721 415h2v2h-2zM690 213h1v1h-1zM259 366h1v1h-1zM279 385h1v1h-1zM541 431h1v1h-1zM218 266h1v1h-1zM267 457h1v1h-1zM811 225h1v1h-1zM458 275h1v1h-1zM381 426h2v2h-2zM105 302h1v1h-1zM191 355h1v1h-1zM211 42h1v1h-1zM906 247h1v1h-1zM396 35h1v1h-1zM181 508h1v1h-1zM394 496h1v1h-1zM602 502h1v1h-1zM418 461h1v1h-1zM184 72h1v1h-1zM317 419h1v1h-1zM190 346h1v1h-1zM127 133h1v1h-1zM293 436h1v1h-1zM160 261h1v1h-1zM275 280h1v1h-1zM254 177h1v1h-1zM212 451h1v1h-1zM932 73h1v1h-1zM403 408h1v1h-1zM136 228h2v2h-2zM663 310h1v1h-1zM290 226h1v1h-1zM419 457h1v1h-1zM400 323h2v2h-2zM298 482h1v1h-1zM178 405h1v1h-1zM595 456h1v1h-1zM501 377h1v1h-1zM78 160h1v1h-1zM278 56h2v2h-2zM429 29h1v1h-1zM533 472h1v1h-1zM126 384h1v1h-1zM441 447h1v1h-1z"/><path fill="#e03030" d="M1141 238h1v1h-1zM914 525h1v1h-1zM769 169h1v1h-1zM1149 303h2v2h-2zM933 410h1v1h-1zM1099 390h1v1h-1zM787 182h1v1h-1zM794 435h1v1h-1zM1127 121h1v1h-1zM929 463h1v1h-1zM969 428h1v1h-1zM693 487h1v1h-1zM910 128h1v1h-1zM947 348h1v1h-1zM906 397h1v1h-1zM972 470h1v1h-1zM914 390h1v1h-1zM731 225h1v1h-1zM1121 392h1v1h-1zM832 441h1v1h-1zM967 179h1v1h-1zM800 138h1v1h-1zM865 452h1v1h-1zM934 70h1v1h-1zM806 296h1v1h-1zM808 412h1v1h-1zM1086 279h1v1h-1zM693 489h1v1h-1zM948 494h1v1h-1zM1141 536h1v1h-1zM1097 511h2v2h-2zM769 189h1v1h-1zM877 354h1v1h-1zM977 527h1v1h-1zM970 522h1v1h-1zM713 162h1v1h-1zM740 144h1v1h-1zM811 520h1v1h-1zM825 352h1v1h-1zM922 473h1v1h-1zM966 520h1v1h-1zM782 225h1v1h-1zM730 157h1v1h-1zM766 444h1v1h-1zM820 494h1v1h-1zM1043 54h1v1h-1zM746 418h1v1h-1zM889 197h2v2h-2zM869 451h1v1h-1zM1096 96h2v2h-2zM699 221h1v1h-1zM742 250h1v1h-1zM1119 44h1v1h-1zM1086 531h1v1h-1zM1037 248h1v1h-1zM930 399h2v2h-2zM786 434h1v1h-1zM875 358h1v1h-1zM1111 391h1v1h-1zM1043 45h1v1h-1zM735 491h1v1h-1zM829 513h1v1h-1zM707 256h1v1h-1zM974 243h1v1h-1zM696 455h1v1h-1zM849 402h1v1h-1zM845 149h1v1h-1zM1053 397h1v1h-1zM840 304h1v1h-1zM1077 417h1v1h-1zM927 331h1v1h-1zM689 119h1v1h-1zM729 459h1v1h-1zM1046 302h1v1h-1zM984 370h1v1h-1zM844 483h2v2h-2zM948 373h1v1h-1zM938 505h1v1h-1zM929 479h2v2h-2zM1141 507h1v1h-1zM931 337h1v1h-1zM743 538h2v2h-2zM1093 205h2v2h-2zM1102 349h1v1h-1zM1078 502h1v1h-1zM1017 537h1v1h-1zM762 332h1v1h-1zM1159 135h1v1h-1zM907 410h1v1h-1zM743 308h1v1h-1zM1087 210h2v2h-2zM912 89h1v1h-1zM848 21h1v1h-1zM1033 236h1v1h-1zM738 176h1v1h-1zM808 266h1v1h-1zM899 424h1v1h-1zM742 480h1v1h-1zM1115 422h1v1h-1zM734 481h1v1h-1zM1012 459h1v1h-1zM926 190h1v1h-1zM1019 374h1v1h-1zM918 57h1v1h-1zM919 489h1v1h-1zM801 479h1v1h-1zM968 125h1v1h-1zM1123 540h1v1h-1zM804 218h1v1h-1zM838 350h1v1h-1zM818 327h1v1h-1zM848 288h1v1h-1zM939 75h1v1h-1zM1129 397h2v2h-2zM1040 426h1v1h-1zM1125 495h1v1h-1zM876 275h1v1h-1zM1112 172h1v1h-1zM1053 480h1v1h-1zM1149 530h1v1h-1zM699 39h1v1h-1zM776 124h1v1h-1zM704 459h2v2h-2zM901 505h2v2h-2zM927 492h1v1h-1zM897 413h1v1h-1zM1027 471h2v2h-2zM704 537h1v1h-1zM719 99h1v1h-1zM752 310h1v1h-1zM891 518h1v1h-1zM1035 309h1v1h-1zM962 367h1v1h-1zM745 446h1v1h-1zM718 218h1v1h-1zM897 23h1v1h-1zM737 163h1v1h-1zM906 379h1v1h-1zM705 99h1v1h-1zM1012 44h1v1h-1zM770 12h1v1h-1zM856 361h1v1h-1zM897 393h1v1h-1zM696 287h1v1h-1zM1113 116h1v1h-1zM1076 56h1v1h-1z"/><path fill="#999" d="M226 129h1v1h-1zM207 426h2v2h-2zM631 450h2v2h-2zM514 331h1v1h-1zM519 225h1v1h-1zM283 521h1v1h-1zM292 40h1v1h-1zM289 143h1v1h-1zM944 523h1v1h-1zM288 59h1v1h-1zM342 514h1v1h-1zM650 410h1v1h-1zM422 484h1v1h-1zM735 509h2v2h-2zM473 351h1v1h-1zM431 335h1v1h-1zM638 345h1v1h-1zM350 452h1v1h-1zM451 198h1v1h-1zM231 218h1v1h-1zM63 188h1v1h-1zM469 400h1v1h-1zM161 266h1v1h-1zM424 256h1v1h-1zM396 136h1v1h-1zM468 272h2v2h-2zM347 317h1v1h-1zM421 348h1v1h-1zM69 299h1v1h-1zM553 339h1v1h-1zM649 451h2v2h-2zM605 124h1v1h-1zM83 193h2v2h-2zM668 485h1v1h-1zM489 342h1v1h-1zM233 361h1v1h-1zM853 400h1v1h-1zM233 384h1v1h-1zM342 417h1v1h-1zM148 470h1v1h-1zM440 244h1v1h-1zM441 162h1v1h-1zM525 6h1v1h-1zM405 513h1v1h-1zM415 222h1v1h-1zM221 390h1v1h-1zM258 399h1v1h-1zM294 51h1v1h-1zM222 257h1v1h-1zM1012 432h1v1h-1zM361 71h1v1h-1zM384 253h1v1h-1zM1090 472h1v1h-1zM292 142h1v1h-1zM549 350h1v1h-1zM272 340h1v1h-1zM318 175h1v1h-1zM432 359h1v1h-1zM745 427h1v1h-1zM376 454h2v2h-2zM399 510h1v1h-1zM417 358h1v1h-1zM190 289h1v1h-1zM780 403h2v2h-2zM454 423h2v2h-2zM571 526h1v1h-1zM467 368h1v1h-1zM317 48h2v2h-2zM366 191h1v1h-1zM941 454h1v1h-1zM544 476h1v1h-1zM281 490h1v1h-1zM279 503h2v2h-2zM217 436h1v1h-1zM337 214h1v1h-1zM293 162h1v1h-1zM397 43h1v1h-1zM1086 300h1v1h-1zM238 358h2v2h-2zM298 275h2v2h-2zM231 36h1v1h-1zM276 452h1v1h-1zM651 384h1v1h-1zM674 479h1v1h-1zM82 407h1v1h-1zM544 245h1v1h-1zM364 438h1v1h-1zM552 168h1v1h-1zM614 378h1v1h-1zM983 442h1v1h-1zM713 269h1v1h-1zM1131 390h1v1h-1zM224 171h1v1h-1zM468 191h1v1h-1zM414 418h1v1h-1zM288 357h1v1h-1zM443 367h2v2h-2zM188 236h1v1h-1zM1002 344h1v1h-1zM485 359h1v1h-1zM598 459h1v1h-1zM361 225h1v1h-1zM602 297h1v1h-1zM264 337h1v1h-1zM229 287h1v1h-1zM641 3h1v1h-1zM710 465h1v1h-1zM629 354h1v1h-1zM214 347h2v2h-2zM144 458h1v1h-1zM637 439h1v1h-1zM843 260h1v1h-1zM235 181h1v1h-1zM338 63h1v1h-1zM352 336h1v1h-1zM334 241h2v2h-2zM318 290h1v1h-1zM103 528h1v1h-1zM734 197h1v1h-1zM661 342h1v1h-1zM116 181h1v1h-1zM807 497h1v1h-1zM504 350h2v2h-2zM397 274h2v2h-2zM419 42h1v1h-1zM1146 116h1v1h-1zM244 220h1v1h-1zM488 233h1v1h-1zM1016 392h1v1h-1zM442 147h1v1h-1zM763 309h1v1h-1zM208 472h1v1h-1zM437 475h1v1h-1zM1122 437h1v1h-1zM303 242h1v1h-1zM252 233h1v1h-1zM28 159h1v1h-1zM371 33h1v1h-1zM478 527h1v1h-1zM381 120h1v1h-1zM556 452h1v1h-1zM358 458h1v1h-1zM88 415h1v1h-1zM572 514h1v1h-1zM279 318h2v2h-2zM100 198h1v1h-1zM619 314h1v1h-1zM547 481h1v1h-1zM58 471h1v1h-1zM81 244h1v1h-1zM133 71h1v1h-1zM789 316h1v1h-1zM543 279h2v2h-2zM414 135h1v1h-1zM211 313h2v2h-2zM1049 415h2v2h-2zM186 160h1v1h-1zM443 139h1v1h-1zM239 286h1v1h-1zM52 351h1v1h-1zM242 350h1v1h-1zM87 314h1v1h-1zM1020 468h1v1h-1zM961 269h1v1h-1zM612 222h1v1h-1zM592 484h1v1h-1zM420 194h2v2h-2zM173 440h1v1h-1zM346 322h1v1h-1zM312 328h1v1h-1zM492 429h1v1h-1zM242 274h1v1h-1zM430 378h1v1h-1zM2 479h1v1h-1zM597 504h1v1h-1zM404 117h1v1h-1zM272 308h1v1h-1zM485 443h1v1h-1zM227 309h1v1h-1zM486 458h1v1h-1zM145 302h1v1h-1zM295 384h1v1h-1zM372 410h2v2h-2zM869 336h1v1h-1zM258 437h1v1h-1zM653 399h1v1h-1zM377 142h1v1h-1zM228 316h1v1h-1zM106 31h1v1h-1zM696 299h1v1h-1zM436 373h1v1h-1zM883 105h1v1h-1zM231 339h1v1h-1zM151 486h2v2h-2zM217 274h1v1h-1zM867 272h1v1h-1zM658 493h1v1h-1zM852 257h1v1h-1zM46 83h1v1h-1zM299 192h1v1h-1zM290 328h2v2h-2zM553 340h1v1h-1zM548 310h1v1h-1zM373 372h1v1h-1zM180 273h1v1h-1zM40 404h1v1h-1zM452 80h1v1h-1zM430 304h1v1h-1zM628 23h1v1h-1zM637 235h1v1h-1zM368 291h1v1h-1zM698 499h1v1h-1zM894 496h1v1h-1zM332 58h1v1h-1zM427 2h1v1h-1zM197 152h1v1h-1zM38 295h1v1h-1zM354 336h1v1h-1zM533 502h1v1h-1zM226 134h1v1h-1zM409 308h1v1h-1zM264 261h1v1h-1zM923 288h1v1h-1zM445 150h1v1h-1zM131 48h1v1h-1zM538 155h1v1h-1zM520 501h1v1h-1zM341 90h1v1h-1zM539 132h1v1h-1zM446 360h1v1h-1zM507 376h1v1h-1zM272 305h1v1h-1zM190 136h1v1h-1zM83 405h1v1h-1zM526 282h1v1h-1zM228 494h1v1h-1zM459 348h1v1h-1zM278 487h1v1h-1zM608 187h1v1h-1zM119 332h1v1h-1zM274 323h1v1h-1zM215 228h1v1h-1zM954 35h1v1h-1zM171 258h1v1h-1zM345 473h1v1h-1zM442 100h1v1h-1zM678 432h1v1h-1zM366 369h1v1h-1zM382 232h1v1h-1zM106 486h1v1h-1zM959 279h1v1h-1zM276 161h1v1h-1zM432 300h1v1h-1zM276 422h1v1h-1zM594 472h1v1h-1zM995 165h1v1h-1zM578 270h1v1h-1zM404 167h1v1h-1zM577 440h1v1h-1zM1124 278h1v1h-1zM499 405h1v1h-1zM270 470h1v1h-1zM444 322h2v2h-2zM841 81h1v1h-1zM350 117h1v1h-1zM346 191h2v2h-2zM417 418h1v1h-1zM248 160h1v1h-1zM222 302h1v1h-1zM229 90h1v1h-1zM182 291h1v1h-1zM56 343h2v2h-2zM879 343h1v1h-1zM438 442h1v1h-1zM275 31h1v1h-1zM532 231h1v1h-1zM222 370h1v1h-1zM711 449h1v1h-1zM469 335h1v1h-1zM511 330h1v1h-1zM393 26h1v1h-1zM813 376h2v2h-2zM137 36h1v1h-1zM372 515h2v2h-2zM199 373h1v1h-1zM282 186h1v1h-1zM287 529h1v1h-1zM546 461h1v1h-1zM544 350h1v1h-1zM130 291h1v1h-1zM32 462h1v1h-1zM182 256h1v1h-1zM248 253h1v1h-1zM102 106h1v1h-1zM137 229h1v1h-1zM303 115h1v1h-1zM42 336h1v1h-1zM430 480h1v1h-1zM371 271h1v1h-1zM1075 433h1v1h-1zM312 101h2v2h-2zM785 40h1v1h-1zM414 276h1v1h-1zM488 276h1v1h-1zM69 351h1v1h-1zM550 150h1v1h-1zM935 521h1v1h-1zM119 393h1v1h-1zM457 2h1v1h-1zM291 404h1v1h-1zM384 36h1v1h-1zM349 516h1v1h-1zM859 175h1v1h-1zM576 468h1v1h-1zM301 48h1v1h-1zM258 426h2v2h-2zM1099 318h1v1h-1zM684 485h1v1h-1zM317 493h1v1h-1zM541 37h1v1h-1zM203 517h1v1h-1zM1057 436h1v1h-1zM533 430h1v1h-1zM378 118h2v2h-2zM398 219h1v1h-1zM454 144h2v2h-2zM246 232h1v1h-1zM350 88h1v1h-1zM1029 499h2v2h-2zM581 495h1v1h-1zM7 474h1v1h-1zM374 279h1v1h-1zM884 377h1v1h-1zM225 341h1v1h-1zM458 160h1v1h-1zM461 476h1v1h-1zM581 51h1v1h-1zM184 523h1v1h-1zM322 75h1v1h-1zM532 508h2v2h-2zM330 293h1v1h-1zM11 233h1v1h-1zM410 446h1v1h-1zM937 394h1v1h-1zM286 344h1v1h-1zM235 252h1v1h-1zM417 348h1v1h-1zM766 141h1v1h-1zM932 444h1v1h-1zM545 313h1v1h-1zM381 345h1v1h-1zM471 242h1v1h-1zM606 43h2v2h-2zM5 249h1v1h-1zM188 536h1v1h-1zM498 428h1v1h-1zM111 187h1v1h-1zM306 434h1v1h-1zM373 9h1v1h-1zM456 522h2v2h-2zM545 422h2v2h-2zM418 500h1v1h-1zM816 301h1v1h-1zM266 283h1v1h-1zM447 321h1v1h-1zM202 205h1v1h-1zM429 383h2v2h-2zM378 424h1v1h-1zM190 288h2v2h-2zM261 65h1v1h-1zM1087 204h1v1h-1zM927 444h1v1h-1zM357 355h1v1h-1zM473 113h1v1h-1zM303 270h1v1h-1zM487 85h1v1h-1zM400 526h2v2h-2zM571 433h1v1h-1zM1053 227h1v1h-1zM835 508h1v1h-1zM548 330h1v1h-1zM327 214h1v1h-1zM435 302h2v2h-2zM1121 102h2v2h-2zM169 526h1v1h-1zM201 300h1v1h-1zM1040 78h1v1h-1zM250 202h1v1h-1zM885 495h1v1h-1zM435 422h1v1h-1zM203 391h1v1h-1zM600 427h2v2h-2zM549 362h1v1h-1zM421 258h1v1h-1zM836 424h1v1h-1zM1138 134h1v1h-1zM928 282h1v1h-1zM1088 213h1v1h-1zM569 404h1v1h-1zM434 0h1v1h-1zM286 5h2v2h-2zM484 231h1v1h-1zM288 4h1v1h-1zM102 320h2v2h-2zM189 253h1v1h-1zM235 97h1v1h-1zM13 388h2v2h-2zM112 270h1v1h-1zM249 296h1v1h-1zM557 111h1v1h-1zM514 228h1v1h-1zM1159 63h1v1h-1zM233 40h2v2h-2zM295 375h1v1h-1zM219 418h1v1h-1zM306 389h2v2h-2zM355 199h1v1h-1zM472 537h1v1h-1zM204 494h1v1h-1zM248 367h2v2h-2zM373 51h1v1h-1zM479 229h1v1h-1zM592 307h2v2h-2zM834 81h1v1h-1zM38 82h1v1h-1zM99 331h1v1h-1zM295 113h1v1h-1zM201 335h1v1h-1zM1095 261h1v1h-1zM198 528h2v2h-2zM12 285h1v1h-1zM364 255h2v2h-2zM53 472h1v1h-1zM617 483h1v1h-1zM510 369h1v1h-1zM403 71h1v1h-1zM402 361h1v1h-1zM44 315h2v2h-2zM302 363h1v1h-1zM423 395h2v2h-2zM176 447h1v1h-1zM698 538h1v1h-1zM324 191h1v1h-1zM354 366h2v2h-2zM235 78h1v1h-1zM304 261h1v1h-1zM489 351h1v1h-1zM515 12h1v1h-1zM207 144h1v1h-1zM391 319h1v1h-1zM566 452h2v2h-2zM111 173h2v2h-2zM217 274h1v1h-1zM93 79h1v1h-1zM325 139h1v1h-1zM387 370h1v1h-1zM505 213h1v1h-1zM186 133h1v1h-1zM593 471h1v1h-1zM392 130h1v1h-1zM92 105h1v1h-1zM507 244h1v1h-1zM439 415h1v1h-1zM363 191h1v1h-1zM180 392h1v1h-1zM558 499h2v2h-2zM83 64h1v1h-1zM360 359h1v1h-1zM500 269h1v1h-1zM178 85h2v2h-2zM878 471h1v1h-1zM250 519h1v1h-1zM164 253h1v1h-1zM1067 222h1v1h-1zM302 530h1v1h-1zM438 415h1v1h-1zM463 189h1v1h-1zM383 374h1v1h-1zM353 267h1v1h-1zM321 460h1v1h-1zM53 300h1v1h-1zM425 124h1v1h-1zM549 289h1v1h-1zM743 37h1v1h-1zM198 408h1v1h-1zM502 196h1v1h-1zM499 351h1v1h-1zM513 370h1v1h-1zM424 299h1v1h-1zM468 343h2v2h-2zM326 392h1v1h-1zM401 205h1v1h-1zM340 246h1v1h-1zM214 474h1v1h-1zM1015 508h1v1h-1zM270 330h1v1h-1zM189 465h1v1h-1zM270 397h1v1h-1zM850 46h1v1h-1zM600 369h1v1h-1zM251 281h1v1h-1zM285 95h1v1h-1zM325 277h2v2h-2zM903 450h1v1h-1zM505 131h2v2h-2zM288 192h1v1h-1zM951 316h1v1h-1zM499 131h1v1h-1zM268 268h1v1h-1zM160 309h2v2h-2zM180 483h1v1h-1zM671 314h1v1h-1zM1118 266h1v1h-1zM151 404h1v1h-1zM347 392h1v1h-1zM761 495h1v1h-1zM352 356h1v1h-1zM478 177h2v2h-2zM57 148h1v1h-1zM85 191h1v1h-1zM652 300h1v1h-1zM417 371h1v1h-1zM598 475h1v1h-1zM507 371h1v1h-1zM397 346h1v1h-1zM337 181h1v1h-1zM258 502h1v1h-1zM386 537h2v2h-2zM557 356h1v1h-1zM596 264h1v1h-1zM232 93h1v1h-1zM284 308h1v1h-1zM457 180h1v1h-1zM292 240h1v1h-1zM53 383h1v1h-1zM328 284h1v1h-1zM273 145h1v1h-1zM354 398h1v1h-1zM334 299h1v1h-1zM304 474h1v1h-1zM921 232h2v2h-2zM635 473h1v1h-1zM394 363h1v1h-1zM398 289h1v1h-1zM185 253h1v1h-1zM396 157h1v1h-1zM299 205h1v1h-1zM154 203h1v1h-1zM518 277h1v1h-1zM811 484h1v1h-1zM733 351h1v1h-1zM367 363h1v1h-1zM623 456h1v1h-1zM574 438h1v1h-1zM349 141h1v1h-1zM335 46h1v1h-1zM29 123h1v1h-1zM598 293h1v1h-1zM255 412h1v1h-1zM837 468h1v1h-1zM395 244h2v2h-2zM273 202h1v1h-1zM190 451h1v1h-1zM336 283h1v1h-1zM455 302h1v1h-1zM509 128h2v2h-2zM235 314h1v1h-1zM437 247h1v1h-1zM50 66h1v1h-1zM915 490h1v1h-1zM605 357h1v1h-1zM609 108h1v1h-1zM127 203h1v1h-1zM366 403h1v1h-1zM476 117h1v1h-1zM466 132h1v1h-1zM309 215h1v1h-1zM471 395h1v1h-1zM271 82h1v1h-1zM243 328h1v1h-1zM196 202h1v1h-1zM536 83h1v1h-1zM664 198h1v1h-1zM384 517h1v1h-1zM356 328h1v1h-1zM423 135h1v1h-1zM434 470h1v1h-1zM295 49h1v1h-1zM573 407h1v1h-1zM755 409h1v1h-1zM253 266h1v1h-1zM606 482h2v2h-2zM190 344h1v1h-1zM1106 181h1v1h-1zM493 50h1v1h-1zM910 380h1v1h-1zM408 383h2v2h-2zM364 538h1v1h-1zM438 149h1v1h-1zM505 345h1v1h-1zM367 420h1v1h-1zM1104 407h1v1h-1zM688 324h1v1h-1zM395 344h1v1h-1zM312 50h2v2h-2zM342 231h1v1h-1zM336 429h1v1h-1zM493 239h1v1h-1zM1136 116h1v1h-1zM76 290h1v1h-1zM310 318h1v1h-1zM173 164h1v1h-1zM634 373h1v1h-1zM526 27h1v1h-1zM152 359h2v2h-2zM271 312h1v1h-1zM654 370h1v1h-1zM627 514h1v1h-1zM331 492h1v1h-1zM530 398h1v1h-1zM280 322h2v2h-2zM437 511h1v1h-1zM47 218h1v1h-1zM300 86h2v2h-2zM669 409h1v1h-1zM979 61h1v1h-1zM572 508h1v1h-1zM369 511h1v1h-1zM347 38h1v1h-1zM607 434h1v1h-1zM599 304h1v1h-1zM222 402h1v1h-1zM200 155h2v2h-2zM580 437h1v1h-1zM610 430h1v1h-1zM556 226h1v1h-1zM400 3h1v1h-1zM476 76h2v2h-2zM332 441h1v1h-1zM234 58h1v1h-1zM561 316h1v1h-1zM337 86h1v1h-1zM1136 70h1v1h-1zM490 22h1v1h-1zM334 232h1v1h-1zM466 435h1v1h-1zM149 276h1v1h-1zM244 254h1v1h-1zM236 248h1v1h-1zM211 46h1v1h-1zM482 190h1v1h-1zM213 170h1v1h-1zM1016 396h1v1h-1zM132 527h1v1h-1zM605 354h1v1h-1zM275 425h1v1h-1zM480 299h1v1h-1zM455 268h1v1h-1zM169 247h1v1h-1zM368 531h1v1h-1zM347 461h1v1h-1zM495 484h1v1h-1zM96 467h1v1h-1zM288 65h1v1h-1zM365 489h1v1h-1zM531 130h1v1h-1zM259 424h1v1h-1zM990 489h1v1h-1zM220 350h1v1h-1zM69 78h2v2h-2zM928 434h1v1h-1zM250 2h1v1h-1zM249 308h1v1h-1zM668 519h1v1h-1zM241 383h1v1h-1zM557 465h1v1h-1zM524 415h1v1h-1zM936 484h1v1h-1zM398 161h1v1h-1zM933 453h1v1h-1zM209 104h1v1h-1zM341 352h1v1h-1zM385 23h1v1h-1zM463 262h1v1h-1zM35 156h1v1h-1zM263 343h1v1h-1zM456 306h1v1h-1zM446 11h1v1h-1zM415 353h1v1h-1zM95 495h1v1h-1zM938 86h1v1h-1zM442 524h1v1h-1zM451 319h1v1h-1zM416 324h1v1h-1zM370 169h2v2h-2zM552 22h1v1h-1zM182 14h2v2h-2zM528 428h1v1h-1zM443 133h1v1h-1zM685 128h1v1h-1zM148 495h1v1h-1zM223 278h1v1h-1zM546 154h1v1h-1zM355 352h2v2h-2zM596 112h1v1h-1zM365 499h1v1h-1zM404 287h1v1h-1zM657 24h2v2h-2zM383 165h1v1h-1zM293 522h1v1h-1zM379 468h1v1h-1zM381 423h1v1h-1zM1049 5h1v1h-1zM458 73h1v1h-1zM501 289h1v1h-1zM536 308h1v1h-1zM266 305h1v1h-1zM847 367h2v2h-2zM292 351h1v1h-1zM747 347h1v1h-1zM565 58h1v1h-1zM176 220h1v1h-1zM341 270h1v1h-1zM771 187h1v1h-1zM237 214h2v2h-2zM199 317h2v2h-2zM581 264h1v1h-1zM71 280h1v1h-1zM352 172h1v1h-1zM278 402h1v1h-1zM272 510h1v1h-1zM383 469h1v1h-1zM574 197h1v1h-1zM353 331h1v1h-1zM515 295h1v1h-1zM544 399h1v1h-1zM594 454h1v1h-1zM131 114h1v1h-1zM991 67h1v1h-1zM254 224h1v1h-1zM197 56h1v1h-1zM315 516h1v1h-1zM767 280h1v1h-1zM47 315h1v1h-1zM897 459h1v1h-1zM472 62h1v1h-1zM882 307h1v1h-1zM558 418h2v2h-2zM641 318h1v1h-1zM251 153h1v1h-1zM253 116h1v1h-1zM299 196h1v1h-1zM1045 239h1v1h-1zM424 484h1v1h-1zM913 222h1v1h-1zM514 474h1v1h-1zM587 357h1v1h-1zM115 387h2v2h-2zM580 130h1v1h-1zM402 337h1v1h-1zM225 507h1v1h-1zM982 389h1v1h-1zM560 130h1v1h-1zM425 434h1v1h-1zM1135 337h1v1h-1zM296 254h2v2h-2zM712 432h1v1h-1zM101 476h1v1h-1zM890 290h1v1h-1zM235 246h1v1h-1zM384 142h1v1h-1zM297 167h1v1h-1zM336 472h2v2h-2zM262 277h1v1h-1zM514 269h1v1h-1zM1113 159h1v1h-1zM371 154h1v1h-1zM1031 446h1v1h-1zM377 243h1v1h-1zM279 124h1v1h-1zM312 358h1v1h-1zM170 344h1v1h-1zM992 461h1v1h-1zM344 499h1v1h-1zM555 486h1v1h-1zM464 511h2v2h-2zM304 453h1v1h-1zM361 283h1v1h-1zM345 222h1v1h-1zM160 312h1v1h-1zM902 15h1v1h-1zM949 387h1v1h-1zM365 249h1v1h-1zM274 103h1v1h-1zM65 183h1v1h-1zM397 178h1v1h-1zM319 365h1v1h-1zM396 211h1v1h-1zM347 8h1v1h-1zM462 266h1v1h-1zM716 518h1v1h-1zM594 416h1v1h-1zM456 38h1v1h-1zM118 280h2v2h-2zM440 298h1v1h-1zM878 432h1v1h-1zM1092 101h1v1h-1zM212 60h1v1h-1zM744 202h1v1h-1zM258 310h1v1h-1zM963 467h1v1h-1zM177 342h1v1h-1zM652 171h1v1h-1zM491 532h1v1h-1zM317 499h1v1h-1zM110 382h1v1h-1zM295 236h1v1h-1zM527 58h1v1h-1zM603 485h1v1h-1zM648 153h1v1h-1zM796 364h1v1h-1zM141 59h1v1h-1zM705 461h1v1h-1zM256 514h1v1h-1zM208 84h1v1h-1zM702 448h1v1h-1zM386 454h1v1h-1zM456 331h1v1h-1zM287 237h1v1h-1zM139 315h1v1h-1zM83 204h1v1h-1zM423 218h2v2h-2zM412 58h1v1h-1zM125 141h2v2h-2zM173 309h1v1h-1zM435 135h1v1h-1zM450 154h1v1h-1zM650 224h1v1h-1zM377 166h2v2h-2zM266 342h1v1h-1zM399 497h1v1h-1zM252 216h1v1h-1zM481 495h1v1h-1zM460 189h1v1h-1zM262 303h1v1h-1zM616 227h1v1h-1zM240 389h1v1h-1zM257 310h1v1h-1zM294 172h1v1h-1zM316 17h1v1h-1zM342 204h1v1h-1zM559 218h1v1h-1zM457 131h1v1h-1zM448 189h1v1h-1zM433 26h2v2h-2zM769 27h1v1h-1zM921 432h1v1h-1zM111 282h1v1h-1zM369 401h1v1h-1zM386 196h1v1h-1zM432 302h1v1h-1zM424 263h1v1h-1zM683 262h1v1h-1zM450 348h1v1h-1zM601 456h1v1h-1zM229 140h2v2h-2zM271 40h1v1h-1zM359 196h1v1h-1zM483 490h1v1h-1zM353 136h1v1h-1zM225 272h1v1h-1zM910 202h2v2h-2zM22 140h1v1h-1zM485 113h1v1h-1zM342 263h1v1h-1zM195 271h1v1h-1zM336 140h1v1h-1zM397 379h1v1h-1zM688 441h1v1h-1zM116 223h1v1h-1zM221 69h1v1h-1zM962 313h1v1h-1zM200 382h1v1h-1zM652 265h1v1h-1zM264 442h1v1h-1zM705 508h1v1h-1zM218 136h1v1h-1zM336 452h1v1h-1zM441 416h1v1h-1zM407 394h1v1h-1zM661 341h1v1h-1zM503 440h1v1h-1zM526 263h1v1h-1zM377 440h1v1h-1zM406 433h1v1h-1zM185 327h1v1h-1zM820 86h1v1h-1zM868 381h2v2h-2zM485 447h1v1h-1zM364 48h1v1h-1zM369 41h1v1h-1zM256 37h1v1h-1zM435 447h1v1h-1zM13 518h1v1h-1zM654 11h1v1h-1zM439 527h1v1h-1zM357 181h1v1h-1zM1119 380h1v1h-1zM423 508h1v1h-1zM215 487h1v1h-1zM487 330h1v1h-1zM293 328h1v1h-1zM600 449h1v1h-1zM313 203h1v1h-1zM1098 156h1v1h-1zM381 160h1v1h-1zM243 117h1v1h-1zM542 496h1v1h-1zM283 177h1v1h-1zM360 414h1v1h-1zM241 9h1v1h-1zM165 352h1v1h-1zM1032 442h2v2h-2zM250 224h2v2h-2zM175 240h1v1h-1zM390 148h1v1h-1zM443 448h1v1h-1zM102 58h1v1h-1zM467 500h1v1h-1zM308 414h1v1h-1zM177 335h1v1h-1zM323 219h1v1h-1zM214 170h1v1h-1zM109 492h1v1h-1zM414 401h1v1h-1zM296 225h1v1h-1zM488 342h1v1h-1zM561 135h1v1h-1zM598 467h1v1h-1zM587 458h1v1h-1zM266 220h1v1h-1zM437 478h1v1h-1zM647 274h2v2h-2zM613 444h1v1h-1zM132 270h1v1h-1zM394 443h1v1h-1zM815 86h1v1h-1zM148 81h1v1h-1zM231 228h1v1h-1zM228 268h1v1h-1zM610 497h1v1h-1zM946 99h2v2h-2zM980 332h1v1h-1zM274 365h1v1h-1zM275 161h1v1h-1zM217 207h1v1h-1zM991 401h1v1h-1zM540 181h1v1h-1zM238 375h1v1h-1zM290 109h1v1h-1zM834 38h1v1h-1zM830 393h1v1h-1zM240 292h1v1h-1zM104 433h1v1h-1zM322 307h1v1h-1zM277 322h1v1h-1zM289 176h1v1h-1zM452 276h1v1h-1zM270 381h1v1h-1zM411 514h1v1h-1zM378 396h1v1h-1zM200 155h1v1h-1zM609 320h1v1h-1zM773 234h1v1h-1zM378 107h1v1h-1zM501 407h1v1h-1zM303 302h1v1h-1zM680 500h2v2h-2zM467 418h1v1h-1zM127 224h1v1h-1zM329 8h1v1h-1zM515 245h1v1h-1zM227 277h2v2h-2zM185 458h1v1h-1zM792 286h1v1h-1zM285 274h1v1h-1zM556 70h2v2h-2zM688 371h1v1h-1zM297 283h1v1h-1zM602 283h1v1h-1zM406 302h2v2h-2zM354 160h1v1h-1zM240 127h1v1h-1zM534 103h2v2h-2zM1056 449h2v2h-2zM618 328h1v1h-1zM1116 196h1v1h-1zM182 323h1v1h-1zM220 376h2v2h-2zM519 489h1v1h-1zM350 533h1v1h-1zM484 137h1v1h-1zM259 316h2v2h-2zM547 458h1v1h-1zM1142 530h1v1h-1zM790 191h1v1h-1zM242 384h2v2h-2zM1120 299h1v1h-1zM492 214h1v1h-1zM267 527h1v1h-1zM396 216h1v1h-1zM254 400h1v1h-1zM603 199h1v1h-1zM307 170h1v1h-1zM596 449h1v1h-1zM1062 310h1v1h-1zM203 194h1v1h-1zM456 443h1v1h-1zM221 406h1v1h-1zM321 121h1v1h-1zM514 336h1v1h-1zM253 286h1v1h-1zM610 267h1v1h-1zM221 151h1v1h-1zM332 32h1v1h-1zM140 389h1v1h-1zM301 213h1v1h-1zM410 491h1v1h-1zM599 196h1v1h-1zM378 473h2v2h-2zM225 512h1v1h-1zM490 137h1v1h-1zM250 95h1v1h-1zM601 351h1v1h-1zM316 67h1v1h-1zM176 441h1v1h-1zM280 60h1v1h-1zM382 41h1v1h-1zM469 383h1v1h-1zM400 350h1v1h-1zM933 382h1v1h-1zM616 141h1v1h-1zM325 446h2v2h-2zM118 252h2v2h-2zM190 65h1v1h-1zM202 78h1v1h-1zM137 533h1v1h-1zM620 380h1v1h-1zM563 403h1v1h-1zM465 483h1v1h-1zM242 201h1v1h-1zM243 74h1v1h-1zM1148 413h1v1h-1zM660 422h1v1h-1zM591 298h1v1h-1zM318 401h1v1h-1zM224 187h1v1h-1zM215 343h1v1h-1zM385 346h1v1h-1zM865 365h1v1h-1zM627 81h1v1h-1zM241 437h1v1h-1zM299 174h1v1h-1zM641 123h1v1h-1zM265 394h2v2h-2zM716 152h2v2h-2zM53 437h1v1h-1zM759 28h1v1h-1zM63 205h1v1h-1zM260 459h1v1h-1zM455 338h1v1h-1zM467 126h1v1h-1zM329 156h1v1h-1zM301 501h1v1h-1zM499 169h1v1h-1zM299 332h1v1h-1zM478 413h1v1h-1zM324 465h1v1h-1zM428 400h2v2h-2zM956 374h1v1h-1zM287 119h1v1h-1zM706 301h1v1h-1zM604 231h1v1h-1zM474 472h1v1h-1zM348 408h1v1h-1zM275 158h2v2h-2zM402 242h1v1h-1zM453 355h1v1h-1zM278 280h1v1h-1zM132 364h1v1h-1zM372 493h1v1h-1zM494 181h1v1h-1zM514 35h1v1h-1zM156 463h1v1h-1zM225 374h1v1h-1zM257 38h1v1h-1zM735 380h1v1h-1zM82 112h1v1h-1zM617 60h1v1h-1zM808 422h1v1h-1zM384 345h1v1h-1zM463 307h1v1h-1zM179 364h1v1h-1zM384 208h1v1h-1zM422 310h1v1h-1zM279 375h1v1h-1zM163 32h1v1h-1zM769 144h1v1h-1z"/><path fill="#c8b090" d="M456 274h1v1h-1zM551 127h1v1h-1zM267 380h1v1h-1zM602 11h1v1h-1zM446 12h1v1h-1zM410 412h1v1h-1zM160 344h1v1h-1zM411 375h1v1h-1zM311 240h1v1h-1zM387 11h1v1h-1zM175 340h2v2h-2zM403 318h1v1h-1zM337 294h1v1h-1zM645 443h1v1h-1zM472 493h1v1h-1zM269 250h2v2h-2zM418 327h1v1h-1zM511 316h1v1h-1zM467 393h1v1h-1zM314 22h1v1h-1zM353 443h1v1h-1zM140 175h1v1h-1zM262 175h1v1h-1zM109 182h1v1h-1zM790 374h1v1h-1zM717 404h1v1h-1zM349 219h1v1h-1zM219 343h1v1h-1zM165 140h1v1h-1zM202 188h1v1h-1zM881 367h1v1h-1zM430 121h1v1h-1zM332 211h1v1h-1zM204 132h1v1h-1zM142 178h1v1h-1zM317 97h2v2h-2zM476 102h1v1h-1zM124 301h1v1h-1zM327 368h1v1h-1zM75 355h1v1h-1zM621 249h1v1h-1zM309 244h1v1h-1zM433 103h1v1h-1zM391 429h1v1h-1zM169 301h1v1h-1zM473 274h1v1h-1zM652 289h1v1h-1zM386 311h1v1h-1zM353 415h1v1h-1zM830 373h1v1h-1zM425 287h1v1h-1zM378 452h1v1h-1zM373 350h1v1h-1zM417 277h1v1h-1zM543 372h1v1h-1zM502 266h1v1h-1zM364 301h1v1h-1zM579 467h1v1h-1zM522 96h1v1h-1zM257 163h1v1h-1zM98 346h1v1h-1zM656 337h1v1h-1zM458 186h1v1h-1zM340 301h1v1h-1zM19 206h1v1h-1zM106 292h1v1h-1zM255 533h2v2h-2zM952 536h2v2h-2zM848 414h1v1h-1zM252 287h1v1h-1zM550 269h1v1h-1zM132 423h1v1h-1zM250 351h1v1h-1zM341 433h1v1h-1zM294 147h2v2h-2zM744 21h1v1h-1zM534 502h1v1h-1zM995 196h1v1h-1zM407 251h1v1h-1zM405 518h1v1h-1zM344 352h1v1h-1zM358 298h1v1h-1zM174 445h1v1h-1zM201 305h1v1h-1zM944 154h2v2h-2zM336 220h1v1h-1zM584 244h1v1h-1zM190 310h1v1h-1zM452 128h1v1h-1zM618 23h1v1h-1zM333 490h1v1h-1zM796 127h1v1h-1zM323 179h1v1h-1zM262 78h1v1h-1zM426 180h1v1h-1zM256 264h1v1h-1zM369 347h1v1h-1zM397 108h1v1h-1zM121 27h1v1h-1zM565 478h2v2h-2zM319 492h1v1h-1zM474 123h1v1h-1zM314 214h1v1h-1zM527 461h1v1h-1zM314 154h1v1h-1zM569 306h1v1h-1zM766 482h1v1h-1zM32 348h1v1h-1zM373 372h1v1h-1zM205 335h1v1h-1zM817 510h2v2h-2zM1121 142h1v1h-1zM377 14h1v1h-1zM245 355h1v1h-1zM258 365h1v1h-1zM267 380h1v1h-1zM547 438h1v1h-1zM295 218h1v1h-1zM370 60h1v1h-1zM231 330h1v1h-1zM310 263h1v1h-1zM589 113h1v1h-1zM281 261h2v2h-2zM416 417h1v1h-1zM1154 85h1v1h-1zM471 355h1v1h-1zM167 263h1v1h-1zM720 494h2v2h-2zM271 164h1v1h-1zM1056 282h1v1h-1zM1122 489h1v1h-1zM145 224h1v1h-1zM257 266h1v1h-1zM168 418h2v2h-2zM390 181h1v1h-1zM144 426h1v1h-1zM797 436h1v1h-1zM234 423h1v1h-1zM406 424h1v1h-1zM388 142h1v1h-1zM827 177h1v1h-1zM248 293h1v1h-1zM633 409h1v1h-1zM206 157h1v1h-1zM838 231h2v2h-2zM530 246h1v1h-1zM405 330h1v1h-1zM129 169h1v1h-1zM467 333h2v2h-2zM495 534h1v1h-1zM390 389h1v1h-1zM162 194h1v1h-1zM951 411h1v1h-1zM23 74h1v1h-1zM1123 537h1v1h-1zM182 172h2v2h-2zM515 374h1v1h-1zM421 71h1v1h-1zM157 495h1v1h-1zM525 526h1v1h-1zM1111 280h1v1h-1zM354 488h1v1h-1zM997 289h1v1h-1zM128 511h1v1h-1zM195 156h1v1h-1zM534 221h1v1h-1zM722 57h1v1h-1zM995 524h1v1h-1zM484 478h2v2h-2zM951 457h1v1h-1zM532 515h1v1h-1zM270 264h1v1h-1zM276 181h1v1h-1zM375 170h1v1h-1zM193 312h1v1h-1zM434 506h1v1h-1zM647 326h1v1h-1zM240 344h2v2h-2zM133 304h1v1h-1zM480 473h1v1h-1zM226 215h1v1h-1zM356 295h1v1h-1zM958 46h1v1h-1zM398 226h1v1h-1zM888 497h1v1h-1zM400 364h1v1h-1zM388 515h1v1h-1zM122 468h1v1h-1zM653 423h1v1h-1z"/><path fill="#ff4040" d="M154 268h1v1h-1zM274 516h2v2h-2zM734 8h1v1h-1zM290 281h1v1h-1zM403 90h2v2h-2zM459 499h1v1h-1zM375 455h1v1h-1zM289 173h1v1h-1zM845 5h1v1h-1zM535 497h1v1h-1zM499 474h1v1h-1zM270 258h1v1h-1zM57 277h1v1h-1zM319 498h1v1h-1zM529 466h1v1h-1zM557 502h1v1h-1zM637 89h1v1h-1zM455 169h1v1h-1zM177 280h2v2h-2zM279 401h1v1h-1zM378 38h1v1h-1zM146 245h1v1h-1zM468 473h1v1h-1zM433 539h1v1h-1zM234 462h1v1h-1zM414 329h1v1h-1zM115 392h1v1h-1zM573 314h2v2h-2zM938 413h1v1h-1zM339 78h2v2h-2zM334 246h1v1h-1zM589 322h1v1h-1zM303 479h1v1h-1zM387 436h1v1h-1zM225 426h1v1h-1zM59 245h1v1h-1zM188 173h1v1h-1zM201 82h2v2h-2zM140 376h1v1h-1zM82 379h1v1h-1zM384 151h1v1h-1zM363 113h1v1h-1zM603 295h1v1h-1zM281 249h1v1h-1zM426 530h1v1h-1zM343 259h2v2h-2zM530 137h1v1h-1zM608 52h2v2h-2zM316 148h1v1h-1zM236 270h1v1h-1zM300 421h1v1h-1zM418 432h1v1h-1zM571 407h1v1h-1zM256 244h1v1h-1zM509 271h1v1h-1zM121 371h1v1h-1zM273 184h1v1h-1zM182 495h1v1h-1zM1149 251h1v1h-1zM465 354h1v1h-1zM483 52h1v1h-1zM482 237h1v1h-1zM244 451h1v1h-1zM98 265h2v2h-2zM335 361h1v1h-1zM678 354h1v1h-1zM303 331h1v1h-1zM594 433h1v1h-1zM322 142h1v1h-1zM1002 34h1v1h-1zM260 404h1v1h-1zM405 241h1v1h-1zM325 496h1v1h-1zM1051 325h1v1h-1zM134 374h1v1h-1zM189 336h1v1h-1zM354 463h1v1h-1zM885 400h1v1h-1zM633 476h1v1h-1zM468 398h1v1h-1zM363 348h1v1h-1zM368 100h1v1h-1zM858 536h1v1h-1zM113 400h2v2h-2zM418 507h2v2h-2zM307 381h1v1h-1zM684 367h1v1h-1zM390 195h2v2h-2zM503 324h1v1h-1zM389 291h1v1h-1zM311 120h2v2h-2zM324 503h2v2h-2zM1137 315h1v1h-1zM343 335h2v2h-2zM423 347h1v1h-1zM106 326h1v1h-1zM637 112h1v1h-1zM978 496h1v1h-1zM454 367h1v1h-1zM428 468h1v1h-1zM340 203h1v1h-1zM106 291h1v1h-1zM170 431h1v1h-1zM230 364h2v2h-2zM862 444h1v1h-1zM401 431h1v1h-1zM444 322h1v1h-1zM335 492h1v1h-1zM181 136h1v1h-1zM259 210h1v1h-1zM449 401h1v1h-1zM599 118h1v1h-1zM466 167h1v1h-1zM597 325h1v1h-1zM470 332h1v1h-1zM593 426h2v2h-2zM256 326h1v1h-1zM431 194h1v1h-1zM267 289h1v1h-1zM470 249h1v1h-1zM630 466h1v1h-1zM417 222h1v1h-1zM809 408h1v1h-1zM311 127h1v1h-1zM375 182h1v1h-1zM56 413h1v1h-1zM381 258h1v1h-1zM231 356h1v1h-1zM496 481h1v1h-1zM536 24h1v1h-1zM441 149h1v1h-1zM389 220h1v1h-1zM375 397h1v1h-1zM913 476h1v1h-1zM312 353h1v1h-1zM360 211h1v1h-1zM402 143h1v1h-1zM514 413h1v1h-1zM388 308h1v1h-1zM340 359h1v1h-1zM462 148h1v1h-1zM611 409h1v1h-1zM350 411h1v1h-1zM549 309h1v1h-1zM889 449h2v2h-2zM502 183h1v1h-1zM951 208h1v1h-1zM364 375h1v1h-1zM590 192h1v1h-1z"/><polyline points="233,4 262,106 400,42 421,1" fill="none" stroke="#8040d8" stroke-width="1"/><polyline points="202,164 262,106" fill="none" stroke="#8040d8" stroke-width="1"/><polyline points="262,106 286,148 316,174" fill="none" stroke="#8040d8" stroke-width="1"/><polyline points="305,175 348,261 416,364" fill="none" stroke="#8040d8" stroke-width="1"/><polyline points="312,361 468,487" fill="none" stroke="#8040d8" stroke-width="1"/><polyline points="268,498 361,535" fill="none" stroke="#8040d8" stroke-width="1"/><polyline points="627,170 563,203 545,282 583,270 600,191 627,170" fill="none" stroke="#8040d8" stroke-width="1"/><polyline points="627,170 695,216" fill="none" stroke="#8040d8" stroke-width="1"/><polyline points="804,20 778,185 891,167 924,164 1016,98 1023,1" fill="none" stroke="#8040d8" stroke-width="1"/><polyline points="924,164 1000,259 1063,226 1016,98" fill="none" stroke="#8040d8" stroke-width="1"/><polyline points="1000,259 969,382" fill="none" stroke="#8040d8" stroke-width="1"/><polyline points="1063,226 1146,391" fill="none" stroke="#8040d8" stroke-width="1"/><polyline points="753,347 790,333 839,356 905,373 969,382" fill="none" stroke="#8040d8" stroke-width="1"/><polyline points="1101,448 1051,502 1008,554" fill="none" stroke="#8040d8" stroke-width="1"/><path d="M877 0 Q948 224 988 540" fill="none" stroke="#a8b0ff" stroke-width="2"/><circle cx="628" cy="169" r="9" fill="#fff"/><circle cx="85" cy="94" r="4" fill="#fff"/><circle cx="73" cy="85" r="2.5" fill="#fff"/><circle cx="115" cy="132" r="2.5" fill="#fff"/><circle cx="151" cy="189" r="3" fill="#fff"/><circle cx="315" cy="132" r="2" fill="#fff"/><circle cx="579" cy="269" r="5" fill="#fff"/><circle cx="752" cy="346" r="3.5" fill="#fff"/><circle cx="786" cy="316" r="2.5" fill="#fff"/><circle cx="228" cy="5" r="6" fill="#fff"/><circle cx="363" cy="76" r="2" fill="#fff"/><circle cx="1028" cy="34" r="2" fill="#fff"/><circle cx="262" cy="106" r="4.5" fill="#c8b890" opacity=".35"/><circle cx="262" cy="106" r="2" fill="#f0e8c8"/><circle cx="1145" cy="391" r="4.5" fill="#c8b890" opacity=".35"/><circle cx="1145" cy="391" r="2" fill="#f0e8c8"/><circle cx="969" cy="382" r="4.5" fill="#c8b890" opacity=".35"/><circle cx="969" cy="382" r="2" fill="#f0e8c8"/><circle cx="1063" cy="226" r="4.5" fill="#c8b890" opacity=".35"/><circle cx="1063" cy="226" r="2" fill="#f0e8c8"/><circle cx="1016" cy="98" r="4.5" fill="#c8b890" opacity=".35"/><circle cx="1016" cy="98" r="2" fill="#f0e8c8"/><circle cx="778" cy="185" r="4.5" fill="#c8b890" opacity=".35"/><circle cx="778" cy="185" r="2" fill="#f0e8c8"/><circle cx="838" cy="356" r="4.5" fill="#c8b890" opacity=".35"/><circle cx="838" cy="356" r="2" fill="#f0e8c8"/><circle cx="716" cy="33" r="7" fill="none" stroke="#fff" stroke-width="1.2"/><circle cx="716" cy="33" r="1" fill="#fff"/><circle cx="703" cy="107" r="5" fill="none" stroke="#fff" stroke-width="1.2"/><circle cx="703" cy="107" r="1" fill="#fff"/><circle cx="562" cy="74" r="4" fill="none" stroke="#fff" stroke-width="1.2"/><circle cx="562" cy="74" r="1" fill="#fff"/><circle cx="579" cy="269" r="8" fill="none" stroke="#fff" stroke-width="1.2"/><circle cx="579" cy="269" r="1" fill="#fff"/><circle cx="1037" cy="32" r="5" fill="none" stroke="#fff" stroke-width="1.2"/><circle cx="1037" cy="32" r="1" fill="#fff"/><circle cx="284" cy="43" r="4" fill="none" stroke="#fff" stroke-width="1.2"/><circle cx="284" cy="43" r="1" fill="#fff"/><circle cx="931" cy="236" r="3" fill="none" stroke="#fff" stroke-width="1.2"/><circle cx="931" cy="236" r="1" fill="#fff"/><circle cx="579" cy="269" r="10" fill="none" stroke="#e0c020" stroke-width="1.5"/><path d="M130 41 L140 51 M140 41 L130 51" stroke="#c8c8c8" stroke-width="1"/><path d="M72 63 L82 73 M82 63 L72 73" stroke="#c8c8c8" stroke-width="1"/><path d="M67 121 L77 131 M77 121 L67 131" stroke="#c8c8c8" stroke-width="1"/><path d="M511 26 L521 36 M521 26 L511 36" stroke="#c8c8c8" stroke-width="1"/><path d="M552 85 L562 95 M562 85 L552 95" stroke="#c8c8c8" stroke-width="1"/><path d="M1041 139 L1051 149 M1051 139 L1041 149" stroke="#c8c8c8" stroke-width="1"/><path d="M691 273 L701 283 M701 273 L691 283" stroke="#c8c8c8" stroke-width="1"/><path d="M529 340 L539 350 M539 340 L529 350" stroke="#c8c8c8" stroke-width="1"/><path d="M515 482 L525 492 M525 482 L515 492" stroke="#c8c8c8" stroke-width="1"/><path d="M642 457 L652 467 M652 457 L642 467" stroke="#c8c8c8" stroke-width="1"/><path d="M641 437 L651 447 M651 437 L641 447" stroke="#c8c8c8" stroke-width="1"/><path d="M848 386 L858 396 M858 386 L848 396" stroke="#c8c8c8" stroke-width="1"/><path d="M733 421 L743 431 M743 421 L733 431" stroke="#c8c8c8" stroke-width="1"/><path d="M808 510 L818 520 M818 510 L808 520" stroke="#c8c8c8" stroke-width="1"/><path d="M848 520 L858 530 M858 520 L848 530" stroke="#c8c8c8" stroke-width="1"/><path d="M860 524 L870 534 M870 524 L860 534" stroke="#c8c8c8" stroke-width="1"/><path d="M793 532 L803 542 M803 532 L793 542" stroke="#c8c8c8" stroke-width="1"/><path d="M480 483 L490 493 M490 483 L480 493" stroke="#c8c8c8" stroke-width="1"/><path d="M420 174 L430 184 M430 174 L420 184" stroke="#c8c8c8" stroke-width="1"/><path d="M703 267 L713 277 M713 267 L703 277" stroke="#c8c8c8" stroke-width="1"/><circle cx="158" cy="61" r="4.5" fill="none" stroke="#20a8e0" stroke-width="1.2"/><line x1="161" y1="64" x2="165" y2="69" stroke="#20a8e0"/><circle cx="320" cy="121" r="4.5" fill="none" stroke="#20a8e0" stroke-width="1.2"/><line x1="323" y1="124" x2="327" y2="129" stroke="#20a8e0"/><circle cx="373" cy="121" r="4.5" fill="none" stroke="#20a8e0" stroke-width="1.2"/><line x1="376" y1="124" x2="380" y2="129" stroke="#20a8e0"/><circle cx="55" cy="146" r="4.5" fill="none" stroke="#20a8e0" stroke-width="1.2"/><line x1="58" y1="149" x2="62" y2="154" stroke="#20a8e0"/><circle cx="162" cy="154" r="4.5" fill="none" stroke="#20a8e0" stroke-width="1.2"/><line x1="165" y1="157" x2="169" y2="162" stroke="#20a8e0"/><circle cx="409" cy="194" r="4.5" fill="none" stroke="#20a8e0" stroke-width="1.2"/><line x1="412" y1="197" x2="416" y2="202" stroke="#20a8e0"/><circle cx="495" cy="162" r="4.5" fill="none" stroke="#20a8e0" stroke-width="1.2"/><line x1="498" y1="165" x2="502" y2="170" stroke="#20a8e0"/><circle cx="413" cy="184" r="4.5" fill="none" stroke="#20a8e0" stroke-width="1.2"/><line x1="416" y1="187" x2="420" y2="192" stroke="#20a8e0"/><circle cx="442" cy="193" r="4.5" fill="none" stroke="#20a8e0" stroke-width="1.2"/><line x1="445" y1="196" x2="449" y2="201" stroke="#20a8e0"/><circle cx="601" cy="191" r="4.5" fill="none" stroke="#20a8e0" stroke-width="1.2"/><line x1="604" y1="194" x2="608" y2="199" stroke="#20a8e0"/><circle cx="636" cy="251" r="4.5" fill="none" stroke="#20a8e0" stroke-width="1.2"/><line x1="639" y1="254" x2="643" y2="259" stroke="#20a8e0"/><circle cx="738" cy="427" r="4.5" fill="none" stroke="#20a8e0" stroke-width="1.2"/><line x1="741" y1="430" x2="745" y2="435" stroke="#20a8e0"/><circle cx="314" cy="272" r="4.5" fill="none" stroke="#20a8e0" stroke-width="1.2"/><line x1="317" y1="275" x2="321" y2="280" stroke="#20a8e0"/><circle cx="809" cy="17" r="4.5" fill="none" stroke="#20a8e0" stroke-width="1.2"/><line x1="812" y1="20" x2="816" y2="25" stroke="#20a8e0"/><circle cx="821" cy="278" r="4.5" fill="none" stroke="#20a8e0" stroke-width="1.2"/><line x1="824" y1="281" x2="828" y2="286" stroke="#20a8e0"/><circle cx="683" cy="248" r="4.5" fill="none" stroke="#20a8e0" stroke-width="1.2"/><line x1="686" y1="251" x2="690" y2="256" stroke="#20a8e0"/><circle cx="525" cy="207" r="4.5" fill="none" stroke="#20a8e0" stroke-width="1.2"/><line x1="528" y1="210" x2="532" y2="215" stroke="#20a8e0"/><circle cx="294" cy="349" r="4.5" fill="none" stroke="#20a8e0" stroke-width="1.2"/><line x1="297" y1="352" x2="301" y2="357" stroke="#20a8e0"/><circle cx="416" cy="361" r="4.5" fill="none" stroke="#20a8e0" stroke-width="1.2"/><line x1="419" y1="364" x2="423" y2="369" stroke="#20a8e0"/><circle cx="684" cy="429" r="4.5" fill="none" stroke="#20a8e0" stroke-width="1.2"/><line x1="687" y1="432" x2="691" y2="437" stroke="#20a8e0"/><circle cx="601" cy="484" r="4.5" fill="none" stroke="#20a8e0" stroke-width="1.2"/><line x1="604" y1="487" x2="608" y2="492" stroke="#20a8e0"/><circle cx="363" cy="494" r="4.5" fill="none" stroke="#20a8e0" stroke-width="1.2"/><line x1="366" y1="497" x2="370" y2="502" stroke="#20a8e0"/><circle cx="541" cy="521" r="4.5" fill="none" stroke="#20a8e0" stroke-width="1.2"/><line x1="544" y1="524" x2="548" y2="529" stroke="#20a8e0"/><circle cx="766" cy="517" r="4.5" fill="none" stroke="#20a8e0" stroke-width="1.2"/><line x1="769" y1="520" x2="773" y2="525" stroke="#20a8e0"/><circle cx="467" cy="175" r="4.5" fill="none" stroke="#20a8e0" stroke-width="1.2"/><line x1="470" y1="178" x2="474" y2="183" stroke="#20a8e0"/><circle cx="552" cy="305" r="4.5" fill="none" stroke="#20a8e0" stroke-width="1.2"/><line x1="555" y1="308" x2="559" y2="313" stroke="#20a8e0"/><circle cx="583" cy="304" r="4.5" fill="none" stroke="#20a8e0" stroke-width="1.2"/><line x1="586" y1="307" x2="590" y2="312" stroke="#20a8e0"/><path d="M131 31 L143 31 M137 25 L137 37" stroke="#30c030" stroke-width="1"/><path d="M323 4 L335 4 M329 -2 L329 10" stroke="#30c030" stroke-width="1"/><path d="M1108 23 L1120 23 M1114 17 L1114 29" stroke="#30c030" stroke-width="1"/><path d="M1081 369 L1093 369 M1087 363 L1087 375" stroke="#30c030" stroke-width="1"/><path d="M302 242 L314 242 M308 236 L308 248" stroke="#30c030" stroke-width="1"/><path d="M491 319 L503 319 M497 313 L497 325" stroke="#30c030" stroke-width="1"/><path d="M317 323 L329 323 M323 317 L323 329" stroke="#30c030" stroke-width="1"/><path d="M286 441 L298 441 M292 435 L292 447" stroke="#30c030" stroke-width="1"/><path d="M522 304 L534 304 M528 298 L528 310" stroke="#30c030" stroke-width="1"/><path d="M156 6 L156 22 L194 22 L194 6" fill="none" stroke="#30c030"/><rect x="350" y="436" width="12" height="12" fill="none" stroke="#30c030"/><circle cx="1038" cy="30" r="3.5" fill="none" stroke="#d030d0" stroke-width="1"/><circle cx="603" cy="162" r="3.5" fill="none" stroke="#d030d0" stroke-width="1"/><circle cx="428" cy="18" r="3.5" fill="none" stroke="#d030d0" stroke-width="1"/><circle cx="284" cy="200" r="3.5" fill="none" stroke="#d030d0" stroke-width="1"/><circle cx="1146" cy="485" r="3.5" fill="none" stroke="#d030d0" stroke-width="1"/><circle cx="323" cy="441" r="3.5" fill="none" stroke="#d030d0" stroke-width="1"/></svg><div class="t" style="left:661px;top:210.96px;font-size:8px;color:#30b8f0">P2 HD 199218</div><div class="t" style="left:772px;top:261.96px;font-size:8px;color:#30b8f0">P2 HD 193182</div><div class="t" style="left:866px;top:260.96px;font-size:8px;color:#30b8f0">Ref - HD187879</div><div class="t" style="left:553px;top:285.96px;font-size:8px;color:#30b8f0">P3 ups Cyg</div><div class="t" style="left:669px;top:315.96px;font-size:8px;color:#30b8f0">P2 V568 Cyg</div><div class="t" style="left:743px;top:294.96px;font-size:8px;color:#30b8f0">P2 V21</div><div class="t" style="left:1300px;top:158.96px;font-size:8px;color:#30b8f0">Ref - HD160762</div><div class="t" style="left:992px;top:300.96px;font-size:8px;color:#30b8f0">Ref - HD180163</div><div class="t" style="left:770px;top:317.96px;font-size:8px;color:#30b8f0">Ref - HD192640</div><div class="t" style="left:822px;top:321.96px;font-size:8px;color:#30b8f0">P3 25 Cyg</div><div class="t" style="left:908px;top:336.96px;font-size:8px;color:#30b8f0">P3 11 Cyg</div><div class="t" style="left:940px;top:320.96px;font-size:8px;color:#30b8f0">P3 V558 Lyr</div><div class="t" style="left:971px;top:333.96px;font-size:8px;color:#30b8f0">Ref - HD181470</div><div class="t" style="left:1097px;top:332.96px;font-size:8px;color:#30b8f0">Ref - HD173648</div><div class="t" style="left:1071px;top:352.96px;font-size:8px;color:#30b8f0">Ref - HD174959</div><div class="t" style="left:1011px;top:359.96px;font-size:8px;color:#30b8f0">P3 iot Lyr</div><div class="t" style="left:1134px;top:391.96px;font-size:8px;color:#30b8f0">P3 HD 171780</div><div class="t" style="left:789px;top:407.96px;font-size:8px;color:#30b8f0">Ref - HD190603</div><div class="t" style="left:965px;top:407.96px;font-size:8px;color:#30b8f0">P3 HD 181409</div><div class="t" style="left:1042px;top:424.96px;font-size:8px;color:#30b8f0">Ref - HD1</div><div class="t" style="left:1078px;top:443.96px;font-size:8px;color:#30b8f0">P3 HD  Ref - HD172958</div><div class="t" style="left:1143px;top:457.96px;font-size:8px;color:#30b8f0">P3 V532 Lyr</div><div class="t" style="left:790px;top:492.96px;font-size:8px;color:#30b8f0">Ref - HD189849</div><div class="t" style="left:911px;top:504.96px;font-size:8px;color:#30b8f0">P3 bet Cyg B</div><div class="t" style="left:1197px;top:562.96px;font-size:8px;color:#30b8f0">P3 HD 168957</div><div class="t" style="left:1096px;top:622.96px;font-size:8px;color:#30b8f0">Ref - HD173650</div><div class="t" style="left:860px;top:635.96px;font-size:8px;color:#30b8f0">Ref - HD185639</div><div class="t" style="left:907px;top:644.96px;font-size:8px;color:#30b8f0">P3 7 Vul</div><div class="t" style="left:1039px;top:660.96px;font-size:8px;color:#30b8f0">Ref - HD176301</div><div class="t" style="left:1329px;top:427.96px;font-size:8px;color:#30b8f0">Ref - HD161695</div><div class="t" style="left:1248px;top:489.96px;font-size:8px;color:#30b8f0">P3 omi Her</div><div class="t" style="left:1292px;top:653.96px;font-size:8px;color:#30b8f0">P3 V974 Her</div><div class="t" style="left:656px;top:147.96px;font-size:8px;color:#b0b0b0">BSC8079=XI CYG</div><div class="t" style="left:731px;top:146.96px;font-size:8px;color:#b0b0b0">BSC7924=DENEB</div><div class="t" style="left:658px;top:203.96px;font-size:8px;color:#b0b0b0">BSC8028=NU CYG</div><div class="t" style="left:661px;top:295.96px;font-size:8px;color:#b0b0b0">BSC7963=LAMBDA CYG</div><div class="t" style="left:959px;top:235.96px;font-size:8px;color:#b0b0b0">RR_LYR</div><div class="t" style="left:1128px;top:312.96px;font-size:8px;color:#b0b0b0">SAO67174</div><div class="t" style="left:1534px;top:283.96px;font-size:8px;color:#b0b0b0">NGC6205=M13=GreatHercules</div><div class="t" style="left:848px;top:404.96px;font-size:8px;color:#b0b0b0">BSC7564=CHI CYG</div><div class="t" style="left:1080px;top:414.96px;font-size:8px;color:#b0b0b0">BSC7106=SHELIAK</div><div class="t" style="left:1066px;top:422.96px;font-size:8px;color:#b0b0b0">NGC6720=M57=RingNebula</div><div class="t" style="left:787px;top:586.96px;font-size:8px;color:#b0b0b0">NGC6853=M27=DumbellNebula</div><div class="t" style="left:804px;top:663.96px;font-size:8px;color:#b0b0b0">NGC6838=M71</div><div class="t" style="left:1378px;top:157.96px;font-size:8px;color:#f09030">Zenith</div><div class="t" style="left:530px;top:149.96px;font-size:8px;color:#c0c0a0">77</div><div class="t" style="left:538px;top:166.96px;font-size:8px;color:#c0c0a0">74</div><div class="t" style="left:502px;top:193.96px;font-size:8px;color:#c0c0a0">79</div><div class="t" style="left:528px;top:201.96px;font-size:8px;color:#e07050">72</div><div class="t" style="left:538px;top:235.96px;font-size:8px;color:#c0c0a0">70</div><div class="t" style="left:538px;top:244.96px;font-size:8px;color:#e07050">69</div><div class="t" style="left:606px;top:231.96px;font-size:8px;color:#c0c0a0">61</div><div class="t" style="left:692px;top:157.96px;font-size:8px;color:#c0c0a0">56.</div><div class="t" style="left:732px;top:275.96px;font-size:8px;color:#c0c0a0">40</div><div class="t" style="left:714px;top:306.96px;font-size:8px;color:#e07050">42</div><div class="t" style="left:756px;top:305.96px;font-size:8px;color:#e07050">36</div><div class="t" style="left:1041px;top:160.96px;font-size:8px;color:#c0c0a0">16</div><div class="t" style="left:1057px;top:215.96px;font-size:8px;color:#c0c0a0">13</div><div class="t" style="left:1360px;top:141.96px;font-size:8px;color:#90c0d0">74</div><div class="t" style="left:1277px;top:273.96px;font-size:8px;color:#90c0d0">90</div><div class="t" style="left:1533px;top:172.96px;font-size:8px;color:#90c0d0">30</div><div class="t" style="left:1574px;top:246.96px;font-size:8px;color:#c0c0a0">25</div><div class="t" style="left:1410px;top:299.96px;font-size:8px;color:#e07050">69</div><div class="t" style="left:878px;top:323.96px;font-size:8px;color:#e07050">15</div><div class="t" style="left:796px;top:336.96px;font-size:8px;color:#c0c0a0">17</div><div class="t" style="left:941px;top:348.96px;font-size:8px;color:#c0c0a0">4</div><div class="t" style="left:915px;top:381.96px;font-size:8px;color:#c0c0a0">8</div><div class="t" style="left:862px;top:388.96px;font-size:8px;color:#e07050">15</div><div class="t" style="left:1006px;top:425.96px;font-size:8px;color:#c0c0a0">17</div><div class="t" style="left:991px;top:445.96px;font-size:8px;color:#c0c0a0">19</div><div class="t" style="left:939px;top:473.96px;font-size:8px;color:#c0c0a0">2</div><div class="t" style="left:777px;top:541.96px;font-size:8px;color:#c0c0a0">16</div><div class="t" style="left:856px;top:536.96px;font-size:8px;color:#c0c0a0">10</div><div class="t" style="left:939px;top:535.96px;font-size:8px;color:#e07050">3</div><div class="t" style="left:812px;top:561.96px;font-size:8px;color:#c0c0a0">13</div><div class="t" style="left:782px;top:575.96px;font-size:8px;color:#c0c0a0">14</div><div class="t" style="left:912px;top:561.96px;font-size:8px;color:#c0c0a0">8</div><div class="t" style="left:956px;top:596.96px;font-size:8px;color:#c0c0a0">2</div><div class="t" style="left:1056px;top:607.96px;font-size:8px;color:#c0c0a0">113</div><div class="t" style="left:1070px;top:629.96px;font-size:8px;color:#c0c0a0">112</div><div class="t" style="left:1088px;top:647.96px;font-size:8px;color:#c0c0a0">110</div><div class="t" style="left:1196px;top:471.96px;font-size:8px;color:#e07050">108</div><div class="t" style="left:1196px;top:489.96px;font-size:8px;color:#c0c0a0">107</div><div class="t" style="left:1228px;top:439.96px;font-size:8px;color:#90c0d0">104</div><div class="t" style="left:1200px;top:569.96px;font-size:8px;color:#e07050">105</div><div class="t" style="left:1208px;top:616.96px;font-size:8px;color:#90c0d0">106</div><div class="t" style="left:1190px;top:620.96px;font-size:8px;color:#c0c0a0">109</div><div class="t" style="left:882px;top:649.96px;font-size:8px;color:#e07050">9</div><div class="t" style="left:920px;top:652.96px;font-size:8px;color:#c0c0a0">4</div><div class="t" style="left:1244px;top:452.96px;font-size:8px;color:#e07050">99</div><div class="t" style="left:1388px;top:471.96px;font-size:8px;color:#90c0d0">78</div><div class="t" style="left:1253px;top:533.96px;font-size:8px;color:#90c0d0">100</div><div class="t" style="left:1303px;top:531.96px;font-size:8px;color:#c0c0a0">89</div><div class="t" style="left:1327px;top:535.96px;font-size:8px;color:#e07050">87</div><div class="t" style="left:1355px;top:546.96px;font-size:8px;color:#90c0d0">86</div><div class="t" style="left:1378px;top:548.96px;font-size:8px;color:#c0c0a0">79</div><div class="t" style="left:1431px;top:565.96px;font-size:8px;color:#c0c0a0">73</div><div class="t" style="left:1441px;top:534.96px;font-size:8px;color:#90c0d0">70</div><div class="t" style="left:1481px;top:529.96px;font-size:8px;color:#e07050">63</div><div class="t" style="left:1464px;top:318.96px;font-size:8px;color:#c0c0a0">61</div><div class="t" style="left:1481px;top:353.96px;font-size:8px;color:#c0c0a0">59</div><div class="t" style="left:1519px;top:377.96px;font-size:8px;color:#90c0d0">58</div><div class="t" style="left:1538px;top:411.96px;font-size:8px;color:#90c0d0">50</div><div class="t" style="left:1581px;top:447.96px;font-size:8px;color:#e07050">39</div><div class="t" style="left:1536px;top:485.96px;font-size:8px;color:#90c0d0">56</div><div class="t" style="left:1529px;top:495.96px;font-size:8px;color:#e07050">57</div><div class="t" style="left:1551px;top:502.96px;font-size:8px;color:#e07050">51</div><div class="t" style="left:1561px;top:616.96px;font-size:8px;color:#90c0d0">54</div><div class="t" style="left:1276px;top:589.96px;font-size:8px;color:#c0c0a0">97</div><div class="t" style="left:1266px;top:606.96px;font-size:8px;color:#90c0d0">98</div><div class="t" style="left:1283px;top:615.96px;font-size:8px;color:#c0c0a0">95</div><div class="t" style="left:1282px;top:629.96px;font-size:8px;color:#90c0d0">96</div><div class="t" style="left:1251px;top:632.96px;font-size:8px;color:#90c0d0">102</div><div class="t" style="left:1252px;top:646.96px;font-size:8px;color:#c0c0a0">101</div><svg style="position:absolute;left:494px;top:118px;" width="18" height="18" viewBox="0 0 18 18"><circle cx="7" cy="7" r="5.5" fill="#fff" stroke="#000" stroke-width="1.6"/><path d="M4 7 L10 7" stroke="#d02020" stroke-width="1.6"/><path d="M11 11 L16 16" stroke="#000" stroke-width="2.5"/></svg><svg style="position:absolute;left:517px;top:118px;" width="18" height="18" viewBox="0 0 18 18"><circle cx="7" cy="7" r="5.5" fill="#fff" stroke="#000" stroke-width="1.6"/><path d="M4 7 L10 7 M7 4 L7 10" stroke="#d02020" stroke-width="1.6"/><path d="M11 11 L16 16" stroke="#000" stroke-width="2.5"/></svg><svg style="position:absolute;left:541px;top:118px;" width="15" height="15" viewBox="0 0 15 15"><rect width="15" height="15" fill="#000"/><path d="M2 5 L8 5 M5 2 L5 8" stroke="#e0e020" stroke-width="1.3"/><rect x="10" y="3" width="4" height="3" fill="#c02020"/><rect x="1" y="10" width="4" height="4" fill="none" stroke="#20c020"/><circle cx="11" cy="11" r="1.5" fill="#e0e020"/></svg><svg style="position:absolute;left:563px;top:117px;" width="18" height="18" viewBox="0 0 18 18"><circle cx="9" cy="9" r="7.5" fill="none" stroke="#000" stroke-width="1.5"/><ellipse cx="9" cy="9" rx="3.5" ry="7.5" fill="none" stroke="#000" stroke-width="1.2"/><path d="M2 9 L16 9 M3 5 L15 5 M3 13 L15 13" stroke="#000" stroke-width="1"/></svg><svg style="position:absolute;left:586px;top:117px;" width="15" height="18" viewBox="0 0 15 18"><text x="1" y="8" font-size="7" fill="#d02020" font-family="Liberation Sans" font-weight="bold">UGC</text><text x="2" y="16" font-size="8" fill="#2040a0" font-family="Liberation Sans">RK?</text></svg><svg style="position:absolute;left:608px;top:117px;" width="17" height="18" viewBox="0 0 17 18"><path d="M2 17 L8 2 L14 17 M5 11 L11 11" fill="none" stroke="#000" stroke-width="2"/><path d="M1 2 L7 9" stroke="#d02020" stroke-width="2"/></svg><svg style="position:absolute;left:632px;top:118px;" width="17" height="17" viewBox="0 0 17 17"><rect x="1" y="8" width="15" height="8" fill="#fff" stroke="#000" stroke-width="1.3"/><rect x="4" y="1" width="8" height="7" fill="#fff" stroke="#000"/><path d="M3 13 L14 13" stroke="#000"/></svg><svg style="position:absolute;left:659px;top:118px;" width="9" height="17" viewBox="0 0 9 17"><circle cx="4.5" cy="4" r="3.5" fill="#000"/><circle cx="4.5" cy="11" r="2.5" fill="#000"/><circle cx="4.5" cy="15.5" r="1.5" fill="#000"/></svg><svg style="position:absolute;left:678px;top:117px;" width="17" height="18" viewBox="0 0 17 18"><circle cx="8.5" cy="9" r="6.5" fill="none" stroke="#e01010" stroke-width="2.5"/><rect x="7.5" y="4" width="2" height="6" fill="#000"/><circle cx="8.5" cy="12.5" r="1.2" fill="#000"/></svg><svg style="position:absolute;left:701px;top:119px;" width="17" height="15" viewBox="0 0 17 15"><path d="M1 4 L7 4 L9 2 L16 6 L12 7 L12 12 L1 12Z" fill="#e0c060" stroke="#000"/><rect x="1" y="4" width="4" height="8" fill="#208040"/></svg><svg style="position:absolute;left:724px;top:117px;" width="17" height="18" viewBox="0 0 17 18"><path d="M2 16 L12 3 L16 6 L6 18Z" fill="#e03060" stroke="#000"/><path d="M2 16 L4 18" stroke="#000" stroke-width="2"/></svg><svg style="position:absolute;left:754px;top:120px;" width="7" height="12" viewBox="0 0 7 12"><path d="M0 0 L7 6 L0 12Z" fill="#000"/></svg><svg style="position:absolute;left:773px;top:119px;" width="14" height="13" viewBox="0 0 14 13"><rect x=".5" y=".5" width="13" height="12" fill="#fff" stroke="#000"/><rect x=".5" y=".5" width="13" height="3" fill="#223a80"/><path d="M4 3 L4 13 M7 3 L7 13 M10 3 L10 13 M0 7 L14 7 M0 10 L14 10" stroke="#000" stroke-width=".8"/></svg><svg style="position:absolute;left:794px;top:118px;" width="16" height="17" viewBox="0 0 16 17"><ellipse cx="7" cy="8" rx="6.5" ry="5" fill="none" stroke="#000" stroke-width="1.2"/><circle cx="10" cy="7" r="3" fill="none" stroke="#d02020" stroke-width="1.2"/><path d="M10 10 L10 17 M13 12 L13 17" stroke="#d02020"/></svg><svg style="position:absolute;left:816px;top:117px;" width="17" height="18" viewBox="0 0 17 18"><rect width="17" height="18" rx="3" fill="#000"/><circle cx="8.5" cy="9" r="6" fill="none" stroke="#e0e020" stroke-width="2"/><path d="M8.5 1 L8.5 5 M8.5 13 L8.5 17 M1 9 L5 9 M12 9 L16 9" stroke="#e0e020" stroke-width="2"/></svg><div style="left:839px;top:117px;width:1px;height:18px;background:#aaa"></div><div style="left:858px;top:116px;width:19px;height:19px;border:1px solid #8a8a8a;border-radius:2px;background:linear-gradient(#fafafa,#e4e4e4)"></div><div style="left:881px;top:116px;width:22px;height:19px;border:1px solid #8a8a8a;border-radius:2px;background:linear-gradient(#fafafa,#e4e4e4)"></div><div style="left:906px;top:116px;width:17px;height:19px;border:1px solid #8a8a8a;border-radius:2px;background:linear-gradient(#a8d8f8,#5aa8e0)"></div><div style="left:926px;top:116px;width:18px;height:19px;border:1px solid #8a8a8a;border-radius:2px;background:linear-gradient(#fafafa,#e4e4e4)"></div><svg style="position:absolute;left:861px;top:119px;" width="14" height="14" viewBox="0 0 14 14"><path d="M2 1 L2 12 L5 9 L8 14 L10 13 L7 8 L11 8Z" fill="#fff" stroke="#000"/></svg><svg style="position:absolute;left:884px;top:119px;" width="16" height="14" viewBox="0 0 16 14"><circle cx="4" cy="10" r="3.5" fill="#000"/><circle cx="12" cy="10" r="3.5" fill="#000"/><rect x="2" y="2" width="4" height="6" fill="#000"/><rect x="10" y="2" width="4" height="6" fill="#000"/></svg><svg style="position:absolute;left:907px;top:118px;" width="16" height="16" viewBox="0 0 16 16"><path d="M8 0 L8 16 M0 8 L16 8" stroke="#000" stroke-width="1.5"/><rect x="5" y="5" width="6" height="6" fill="#000"/></svg><svg style="position:absolute;left:928px;top:118px;" width="15" height="16" viewBox="0 0 15 16"><path d="M2 4 L12 15 L15 12 L5 1Z" fill="#fff" stroke="#000" stroke-width="1.3"/><path d="M5 5 L7 3 M7 7 L9 5 M9 9 L11 7 M11 11 L13 9" stroke="#000"/></svg><div style="left:1628px;top:103px;width:212px;height:368px;background:#1b3140;border-radius:6px 6px 2px 2px;opacity:.85"></div><div style="left:1629px;top:104px;width:210px;height:366px;background:linear-gradient(#e8f4fa 0%,#f3f8fb 10%,#e9f3f8 100%);border:1px solid #bfeaf8;border-radius:5px 5px 1px 1px"></div><div class="t" style="left:1635px;top:107.44px;font-size:12px;color:#111">Seuils: ATIK HS | 658x492 - Monoch...</div><div style="left:1636px;top:126px;width:197px;height:339px;background:#f0f0f0;border:1px solid #8aa0b0"></div><div style="left:1634px;top:131px;width:17px;height:330px;background:linear-gradient(90deg,#e6e6e6,#f6f6f6 50%,#e6e6e6);border:1px solid #d8d8d8"></div><div class="t" style="left:1637px;top:134.09px;font-size:7px;color:#444">▲</div><div class="t" style="left:1637px;top:450.09px;font-size:7px;color:#444">▼</div><div style="left:1635px;top:359px;width:15px;height:15px;border:1px solid #8a8a8a;border-radius:2px;background:linear-gradient(90deg,#f4f4f4,#d8d8d8)"></div><div style="left:1651px;top:143px;width:16px;height:302px;background:linear-gradient(#fff 0%,#fff 21%,#888 40%,#111 66%,#000 100%)"></div><div style="left:1666px;top:131px;width:17px;height:330px;background:linear-gradient(90deg,#e6e6e6,#f6f6f6 50%,#e6e6e6);border:1px solid #d8d8d8"></div><div class="t" style="left:1669px;top:134.09px;font-size:7px;color:#444">▲</div><div class="t" style="left:1669px;top:450.09px;font-size:7px;color:#444">▼</div><div style="left:1667px;top:204px;width:15px;height:15px;border:1px solid #8a8a8a;border-radius:2px;background:linear-gradient(90deg,#f4f4f4,#d8d8d8)"></div><div style="left:1688px;top:133px;width:58px;height:327px;background:#000;border:1px solid #999"></div><svg style="position:absolute;left:1688px;top:133px;" width="58" height="327" viewBox="0 0 58 327"><path d="M0 228 Q2 236 6 236 L58 238 L58 242 L6 243 Q2 244 0 252Z" fill="#8a8a8a"/></svg><div class="t" style="left:1758px;top:131.44px;font-size:12px;text-decoration:underline">Seuil Haut</div><div style="left:1756px;top:145px;width:72px;height:23px;background:#fff;border:1px solid #e0e0e0"></div><div class="t" style="left:1760px;top:149.44px;font-size:12px;">2825.216</div><div class="t" style="left:1758px;top:170.44px;font-size:12px;text-decoration:underline">Seuil Bas</div><div style="left:1756px;top:185px;width:72px;height:23px;background:#fff;border:1px solid #e0e0e0"></div><div class="t" style="left:1760px;top:189.44px;font-size:12px;">487.4223</div><div style="left:1754px;top:211px;width:76px;height:72px;border:1px solid;border-color:#a0a0a0 #fff #fff #a0a0a0"></div><div style="left:1759px;top:215px;width:21px;height:20px;border:1px solid #888;background:#e4e4e4"></div><svg style="position:absolute;left:1759px;top:215px;" width="21" height="20" viewBox="0 0 21 20"><g fill="#222"><circle cx="6" cy="6" r="3"/><circle cx="13" cy="8" r="2.5"/><circle cx="8" cy="13" r="2.5"/><circle cx="15" cy="14" r="2"/></g></svg><div style="left:1784px;top:215px;width:21px;height:20px;border:1px solid #888;background:#f4f4f4"></div><svg style="position:absolute;left:1784px;top:215px;" width="21" height="20" viewBox="0 0 21 20"><path d="M3 3 L18 17 L3 17Z" fill="#000"/></svg><svg style="position:absolute;left:1760px;top:240px;" width="10" height="16" viewBox="0 0 10 16"><path d="M1 6 L5 2 L9 6Z M1 10 L5 14 L9 10Z" fill="#8aa0c8"/></svg><div style="left:1774px;top:240px;width:51px;height:17px;border:1px solid;border-color:#a0a0a0 #fff #fff #a0a0a0"></div><div class="t" style="left:1778px;top:242.44px;font-size:12px;">99.9 %</div><svg style="position:absolute;left:1760px;top:262px;" width="10" height="16" viewBox="0 0 10 16"><path d="M1 6 L5 2 L9 6Z M1 10 L5 14 L9 10Z" fill="#8aa0c8"/></svg><div style="left:1774px;top:262px;width:51px;height:17px;border:1px solid;border-color:#a0a0a0 #fff #fff #a0a0a0"></div><div class="t" style="left:1778px;top:264.44px;font-size:12px;">5.0 %</div><div style="left:1754px;top:287px;width:76px;height:71px;border:1px solid;border-color:#a0a0a0 #fff #fff #a0a0a0"></div><div class="t" style="left:1758px;top:292.44px;font-size:12px;text-decoration:underline">Palettes</div><div style="left:1803px;top:291px;width:20px;height:20px;border:2px solid #4a7fb0;background:linear-gradient(#111,#ddd)"></div><div style="left:1759px;top:313px;width:20px;height:20px;border:1px solid #777;background:linear-gradient(#1a3ae0,#20c020 40%,#e0e020 60%,#e02020)"></div><div style="left:1781px;top:313px;width:20px;height:20px;border:1px solid #777;background:linear-gradient(#2020e0,#20c0c0 30%,#20e020 50%,#e0e020 70%,#e02020)"></div><div style="left:1803px;top:313px;width:20px;height:20px;border:1px solid #777;background:linear-gradient(#301010,#902040 40%,#b080e0 80%,#fff)"></div><div class="btn" style="left:1759px;top:339px;width:51px;height:15px;"></div><div class="t" style="left:1759px;width:51px;text-align:center;top:340.54px;font-size:12px;">Editer</div><div style="left:1754px;top:360px;width:76px;height:49px;border:1px solid;border-color:#a0a0a0 #fff #fff #a0a0a0"></div><div class="t" style="left:1768px;top:363.44px;font-size:12px;">Max , Min</div><div class="t" style="left:1764px;top:380.44px;font-size:12px;">1383</div><div class="t" style="left:1764px;top:393.44px;font-size:12px;">455</div><div class="btnb" style="left:1758px;top:413px;width:68px;height:20px;"></div><div class="t" style="left:1758px;width:68px;text-align:center;top:417.04px;font-size:12px;">OK</div><div class="btn" style="left:1758px;top:439px;width:68px;height:21px;"></div><div class="t" style="left:1758px;width:68px;text-align:center;top:443.54px;font-size:12px;">Annuler</div><div style="left:283px;top:330px;width:485px;height:362px;background:linear-gradient(#c8d6e4 0%,#dde6ef 8%,#e2eaf2 100%);border:1px solid #4f5c6b;border-radius:3px 3px 0 0;box-shadow:inset 0 0 0 1px #eef4fa"></div><svg style="position:absolute;left:287px;top:334px;" width="16" height="16" viewBox="0 0 16 16"><defs><linearGradient id="pg287334" x1="0" y1="0" x2="0" y2="1"><stop offset="0" stop-color="#e01010"/><stop offset=".3" stop-color="#f07000"/><stop offset=".45" stop-color="#e0e000"/><stop offset=".6" stop-color="#30c030"/><stop offset=".8" stop-color="#0090c0"/><stop offset="1" stop-color="#101848"/></linearGradient></defs><polygon points="8.0,0 16,16 0,16" fill="url(#pg287334)"/><line x1="8.0" y1="0" x2="16" y2="16" stroke="#000" stroke-width="1.5"/></svg><div class="t" style="left:306px;top:336.44px;font-size:12px;color:#3b4656">Tracking Inspector</div><div style="left:734px;top:335px;width:29px;height:16px;border:1px solid #8d9aab;border-radius:3px;background:linear-gradient(#e6eef6,#c7d5e4)"></div><svg style="position:absolute;left:734px;top:335px;" width="29" height="16" viewBox="0 0 29 16"><path d="M10 4 L19 12 M19 4 L10 12" stroke="#3c4a5a" stroke-width="3"/><path d="M10 4 L19 12 M19 4 L10 12" stroke="#fff" stroke-width="1.4"/></svg><div style="left:286px;top:354px;width:479px;height:335px;background:#f0f0f0"></div><div style="left:287px;top:359px;width:45px;height:17px;border:1px solid;border-color:#a0a0a0 #fff #fff #a0a0a0"></div><div style="left:332px;top:359px;width:426px;height:17px;border:1px solid;border-color:#a0a0a0 #fff #fff #a0a0a0"></div><div class="t" style="left:290px;top:361.57px;font-size:11px;">Etat</div><div class="t" style="left:403px;top:361.44px;font-size:12px;font-weight:bold">DX=-6.51   DY=0.62 RA=121.90ms   DEC=-49.22ms</div><div class="t" style="left:289px;top:380.57px;font-size:11px;">Positions Axe RA :</div><div class="t" style="left:397px;top:380.44px;font-size:12px;font-weight:bold">-6.51 Pix</div><div class="t" style="left:537px;top:380.44px;font-size:12px;font-weight:bold;color:#e0101a">+122ms</div><div class="t" style="left:623px;top:380.57px;font-size:11px;">Répartition</div><div class="btn" style="left:705px;top:379px;width:13px;height:17px;"></div><div class="t" style="left:705px;width:13px;text-align:center;top:381.54px;font-size:12px;">+</div><div class="btn" style="left:721px;top:379px;width:13px;height:17px;"></div><div class="t" style="left:721px;width:13px;text-align:center;top:381.54px;font-size:12px;">-</div><div style="left:289px;top:399px;width:307px;height:84px;background:#000;border:1px solid #777"></div><svg style="position:absolute;left:290px;top:400px;" width="305" height="82" viewBox="0 0 305 82"><line x1="0" y1="27.9" x2="305" y2="27.9" stroke="#e0e070" stroke-width="1" stroke-dasharray="3,2"/><line x1="0" y1="34.4" x2="305" y2="34.4" stroke="#e0e070" stroke-width="1" stroke-dasharray="3,2"/><line x1="0" y1="41.0" x2="305" y2="41.0" stroke="#e0e070" stroke-width="1" stroke-dasharray="3,2"/><line x1="0" y1="54.1" x2="305" y2="54.1" stroke="#e0e070" stroke-width="1" stroke-dasharray="3,2"/><line x1="0" y1="60.7" x2="305" y2="60.7" stroke="#e0e070" stroke-width="1" stroke-dasharray="3,2"/><line x1="0" y1="67.2" x2="305" y2="67.2" stroke="#e0e070" stroke-width="1" stroke-dasharray="3,2"/><line x1="0" y1="47.6" x2="305" y2="47.6" stroke="#fff" stroke-width="2.5"/><polyline points="0.0,39.3 2.0,66.4 4.1,47.1 6.1,18.7 8.2,30.9 10.2,52.6 12.3,75.9 14.3,28.4 16.4,22.9 18.4,57.5 20.5,55.3 22.5,41.8 24.6,24.9 26.6,15.4 28.7,62.1 30.7,71.8 32.8,41.9 34.8,20.9 36.8,32.4 38.9,64.9 40.9,61.0 43.0,52.7 45.0,21.3 47.1,18.3 49.1,44.7 51.2,41.0 53.2,64.6 55.3,38.2 57.3,39.3 59.4,20.3 61.4,20.8 63.5,72.8 65.5,60.1 67.6,54.6 69.6,25.9 71.6,14.0 73.7,15.3 75.7,48.3 77.8,66.7 79.8,52.4 81.9,3.6 83.9,3.8 86.0,38.3 88.0,71.9 90.1,73.7 92.1,29.5 94.2,27.5 96.2,43.7 98.3,70.7 100.3,50.5 102.3,15.1 104.4,47.2 106.4,77.4 108.5,56.6 110.5,4.2 112.6,23.1 114.6,74.1 116.7,80.0 118.7,16.3 120.8,24.2 122.8,27.4 124.9,74.8 126.9,52.5 129.0,18.2 131.0,18.5 133.1,52.4 135.1,62.7 137.1,24.4 139.2,29.6 141.2,33.1 143.3,57.0 145.3,57.9 147.4,26.0 149.4,3.9 151.5,63.6 153.5,72.1 155.6,54.5 157.6,44.5 159.7,2.0 161.7,13.3 163.8,61.4 165.8,80.0 167.9,64.4 169.9,8.5 171.9,9.3 174.0,38.5 176.0,55.4 178.1,74.4 180.1,60.7 182.2,14.8 184.2,16.2 186.3,30.0 188.3,44.8 190.4,70.5 192.4,42.3 194.5,13.6 196.5,4.4 198.6,23.0 200.6,58.9 202.7,55.8 204.7,22.2 206.7,2.1 208.8,35.2 210.8,68.7 212.9,56.8 214.9,9.6 217.0,5.6 219.0,46.5 221.1,67.4 223.1,23.8 225.2,17.6 227.2,39.2 229.3,62.4 231.3,40.6 233.4,2.0 235.4,26.4 237.4,57.1 239.5,64.9 241.5,20.5 243.6,4.3 245.6,63.5 247.7,55.7 249.7,33.3 251.8,10.5 253.8,21.6 255.9,48.9 257.9,52.3 260.0,24.5 262.0,25.7 264.1,42.1 266.1,72.6 268.2,59.6 270.2,30.1 272.2,21.6 274.3,16.3 276.3,55.9 278.4,65.1 280.4,44.2 282.5,13.7 284.5,4.0 286.6,43.8 288.6,74.1 290.7,67.4 292.7,49.6 294.8,25.8 296.8,10.0 298.9,44.6 300.9,55.9 303.0,75.8 305.0,47.8" fill="none" stroke="#1e8a1e" stroke-width="1"/></svg><div style="left:598px;top:398px;width:13px;height:30px;background:#c4dbc4;border:1px solid #888"></div><div style="left:599px;top:435px;width:11px;height:13px;border-radius:50%;border:1px solid #aaa;background:radial-gradient(#fff,#ddd)"></div><div style="left:598px;top:452px;width:13px;height:29px;background:#c4dbc4;border:1px solid #888"></div><div style="left:613px;top:400px;width:82px;height:82px;background:#000"></div><div class="t" style="left:617px;top:403.83px;font-size:9px;color:#e02020">Bar.</div><svg style="position:absolute;left:613px;top:400px;" width="82" height="82" viewBox="0 0 82 82"><rect x="28" y="28.5" width="26" height="26" fill="none" stroke="#fff" stroke-width="1.3"/><line x1="0" y1="37" x2="41" y2="41.5" stroke="#e8e860" stroke-width="1"/></svg><div class="cb" style="left:705px;top:405px;width:12px;height:12px;"></div><div class="t" style="left:720px;top:404.57px;font-size:11px;">Lier</div><div class="btn" style="left:704px;top:420px;width:58px;height:15px;"></div><div class="t" style="left:704px;width:58px;text-align:center;top:422.07px;font-size:11px;">Graphiques</div><div class="btnb" style="left:704px;top:443px;width:58px;height:17px;"></div><div class="t" style="left:704px;width:58px;text-align:center;top:446.07px;font-size:11px;">Reset</div><div class="btn" style="left:704px;top:463px;width:58px;height:16px;"></div><div class="t" style="left:704px;width:58px;text-align:center;top:465.57px;font-size:11px;">Sauver</div><div class="t" style="left:287px;top:485.57px;font-size:11px;">Positions Axe DEC :</div><div class="t" style="left:394px;top:485.44px;font-size:12px;font-weight:bold">0.62 Pix</div><div class="t" style="left:536px;top:485.44px;font-size:12px;font-weight:bold;color:#e0101a">-49ms</div><div style="left:289px;top:503px;width:307px;height:83px;background:#000;border:1px solid #777"></div><svg style="position:absolute;left:290px;top:504px;" width="305" height="81" viewBox="0 0 305 81"><line x1="0" y1="27.5" x2="305" y2="27.5" stroke="#e0e070" stroke-width="1" stroke-dasharray="3,2"/><line x1="0" y1="34.0" x2="305" y2="34.0" stroke="#e0e070" stroke-width="1" stroke-dasharray="3,2"/><line x1="0" y1="40.5" x2="305" y2="40.5" stroke="#e0e070" stroke-width="1" stroke-dasharray="3,2"/><line x1="0" y1="53.5" x2="305" y2="53.5" stroke="#e0e070" stroke-width="1" stroke-dasharray="3,2"/><line x1="0" y1="59.9" x2="305" y2="59.9" stroke="#e0e070" stroke-width="1" stroke-dasharray="3,2"/><line x1="0" y1="66.4" x2="305" y2="66.4" stroke="#e0e070" stroke-width="1" stroke-dasharray="3,2"/><line x1="0" y1="47.0" x2="305" y2="47.0" stroke="#fff" stroke-width="2.5"/><polyline points="0.0,60.5 2.0,55.9 4.1,43.0 6.1,23.3 8.2,21.3 10.2,57.5 12.3,56.4 14.3,19.0 16.4,10.9 18.4,43.4 20.5,67.8 22.5,37.2 24.6,16.6 26.6,33.0 28.7,62.6 30.7,57.0 32.8,42.5 34.8,14.8 36.8,29.2 38.9,39.8 40.9,59.4 43.0,54.9 45.0,40.6 47.1,3.4 49.1,25.4 51.2,48.2 53.2,67.9 55.3,52.3 57.3,13.6 59.4,21.4 61.4,22.6 63.5,64.7 65.5,78.9 67.6,63.2 69.6,42.0 71.6,2.0 73.7,37.4 75.7,68.1 77.8,61.3 79.8,31.5 81.9,31.2 83.9,23.7 86.0,68.9 88.0,56.1 90.1,47.1 92.1,10.2 94.2,15.9 96.2,61.3 98.3,79.0 100.3,25.9 102.3,14.7 104.4,36.8 106.4,60.5 108.5,59.8 110.5,12.8 112.6,14.4 114.6,45.9 116.7,68.8 118.7,24.7 120.8,30.0 122.8,49.2 124.9,69.9 126.9,41.9 129.0,26.3 131.0,24.5 133.1,64.4 135.1,69.1 137.1,32.4 139.2,25.2 141.2,52.7 143.3,69.5 145.3,48.8 147.4,16.6 149.4,2.0 151.5,56.6 153.5,73.6 155.6,51.5 157.6,33.9 159.7,2.0 161.7,25.7 163.8,59.8 165.8,70.2 167.9,54.3 169.9,37.2 171.9,2.6 174.0,33.6 176.0,50.0 178.1,66.9 180.1,41.2 182.2,22.7 184.2,14.7 186.3,9.3 188.3,48.9 190.4,76.9 192.4,66.1 194.5,19.6 196.5,24.2 198.6,55.4 200.6,69.6 202.7,45.6 204.7,43.6 206.7,6.8 208.8,35.3 210.8,75.0 212.9,47.5 214.9,22.8 217.0,23.8 219.0,54.9 221.1,63.5 223.1,34.2 225.2,15.8 227.2,29.5 229.3,79.0 231.3,63.3 233.4,2.0 235.4,19.0 237.4,75.7 239.5,65.3 241.5,12.2 243.6,23.5 245.6,44.8 247.7,66.8 249.7,26.9 251.8,19.9 253.8,23.3 255.9,56.1 257.9,52.7 260.0,14.8 262.0,15.8 264.1,41.1 266.1,73.2 268.2,53.1 270.2,23.1 272.2,25.0 274.3,18.5 276.3,73.1 278.4,71.1 280.4,51.5 282.5,28.6 284.5,13.1 286.6,35.8 288.6,45.9 290.7,71.9 292.7,58.3 294.8,14.7 296.8,21.0 298.9,17.4 300.9,48.5 303.0,69.9 305.0,40.9" fill="none" stroke="#1e8a1e" stroke-width="1"/></svg><div style="left:598px;top:502px;width:13px;height:30px;background:#c4dbc4;border:1px solid #888"></div><div style="left:599px;top:539px;width:11px;height:13px;border-radius:50%;border:1px solid #aaa;background:radial-gradient(#fff,#ddd)"></div><div style="left:598px;top:556px;width:13px;height:28px;background:#c4dbc4;border:1px solid #888"></div><div style="left:613px;top:489px;width:138px;height:35px;border:1px solid;border-color:#fff #a0a0a0 #a0a0a0 #fff;border-top-color:#c8c8c8"></div><div class="t" style="left:613px;width:138px;text-align:center;top:491.57px;font-size:11px;">Décalage (Pixels,angle)</div><div class="t" style="left:613px;width:138px;text-align:center;top:506.44px;font-size:12px;font-weight:bold">6.54   174.57°</div><div style="left:613px;top:527px;width:138px;height:36px;border:1px solid;border-color:#c8c8c8 #fff #fff #c8c8c8"></div><div class="t" style="left:613px;width:138px;text-align:center;top:529.57px;font-size:11px;">Direction moyenne</div><div class="t" style="left:613px;width:138px;text-align:center;top:544.57px;font-size:11px;">218 °</div><div style="left:613px;top:568px;width:138px;height:38px;border:1px solid;border-color:#c8c8c8 #fff #fff #c8c8c8"></div><div class="t" style="left:613px;width:138px;text-align:center;top:571.57px;font-size:11px;">Erreur de suivi moyen</div><div class="t" style="left:613px;width:138px;text-align:center;top:589.44px;font-size:12px;font-weight:bold">6.49 Pix   4.00&quot;</div><div class="t" style="left:289px;top:589.57px;font-size:11px;">Flux</div><div style="left:289px;top:603px;width:307px;height:77px;background:#000;border:1px solid #777"></div><svg style="position:absolute;left:290px;top:604px;" width="305" height="75" viewBox="0 0 305 75"><polyline points="0.0,40.6 1.9,40.7 3.8,28.5 5.8,36.5 7.7,24.2 9.6,38.5 11.5,30.8 13.4,43.7 15.3,25.9 17.3,21.8 19.2,45.2 21.1,45.2 23.0,47.3 24.9,55.4 26.9,49.5 28.8,43.9 30.7,50.4 32.6,42.9 34.5,36.4 36.4,36.7 38.4,44.8 40.3,44.8 42.2,42.5 44.1,51.4 46.0,9.8 48.0,22.3 49.9,45.4 51.8,44.4 53.7,36.1 55.6,44.8 57.5,47.1 59.5,50.9 61.4,43.0 63.3,47.9 65.2,49.8 67.1,48.9 69.1,41.1 71.0,47.1 72.9,48.0 74.8,43.3 76.7,37.9 78.6,26.2 80.6,17.6 82.5,45.0 84.4,42.7 86.3,46.5 88.2,13.4 90.2,29.4 92.1,46.0 94.0,43.3 95.9,25.3 97.8,14.2 99.7,43.9 101.7,49.0 103.6,49.1 105.5,44.4 107.4,41.9 109.3,31.8 111.3,54.5 113.2,44.3 115.1,44.1 117.0,46.4 118.9,47.4 120.8,42.4 122.8,43.1 124.7,39.8 126.6,44.1 128.5,42.1 130.4,43.9 132.4,42.1 134.3,44.5 136.2,44.7 138.1,43.0 140.0,41.3 141.9,46.0 143.9,41.7 145.8,46.6 147.7,41.9 149.6,41.1 151.5,35.5 153.5,42.8 155.4,44.6 157.3,39.3 159.2,45.8 161.1,48.1 163.1,50.8 165.0,40.4 166.9,47.5 168.8,29.5 170.7,44.1 172.6,46.1 174.6,34.5 176.5,33.1 178.4,37.4 180.3,49.1 182.2,45.9 184.2,42.7 186.1,29.1 188.0,18.7 189.9,48.8 191.8,32.0 193.7,46.2 195.7,36.7 197.6,40.4 199.5,47.1 201.4,20.6 203.3,36.3 205.3,41.3 207.2,33.7 209.1,51.4 211.0,43.5 212.9,43.6 214.8,42.2 216.8,47.8 218.7,48.6 220.6,44.4 222.5,42.6 224.4,43.4 226.4,42.2 228.3,46.7 230.2,24.0 232.1,49.2 234.0,43.2 235.9,33.6 237.9,43.7 239.8,53.7 241.7,44.8 243.6,47.2 245.5,41.7 247.5,42.3 249.4,44.9 251.3,43.1 253.2,41.7 255.1,44.3 257.0,41.5 259.0,45.8 260.9,47.8 262.8,45.6 264.7,24.4 266.6,42.0 268.6,39.8 270.5,42.3 272.4,48.1 274.3,43.1 276.2,46.0 278.1,22.3 280.1,43.6 282.0,41.2 283.9,46.8 285.8,43.9 287.7,22.5 289.7,45.0 291.6,47.5 293.5,46.1 295.4,44.6 297.3,44.3 299.2,25.0 301.2,44.9 303.1,39.4 305.0,26.2" fill="none" stroke="#9020a0" stroke-width="1"/></svg><div style="left:613px;top:612px;width:138px;height:50px;border:1px solid;border-color:#c8c8c8 #fff #fff #c8c8c8"></div><div class="t" style="left:613px;width:138px;text-align:center;top:615.57px;font-size:11px;">Moniteur de nuages</div><div class="t" style="left:613px;width:138px;text-align:center;top:630.57px;font-size:11px;">1562 ADU</div><div class="t" style="left:613px;width:138px;text-align:center;top:644.57px;font-size:11px;">605 ADU rms</div><div class="btn" style="left:613px;top:667px;width:73px;height:17px;"></div><div class="t" style="left:613px;width:73px;text-align:center;top:670.07px;font-size:11px;">Plus &gt;&gt;&gt;</div><div style="left:177px;top:691px;width:535px;height:336px;background:#1b3140;border-radius:6px 6px 2px 2px;opacity:.85"></div><div style="left:178px;top:692px;width:533px;height:334px;background:linear-gradient(90deg,#4f9fc8 0%,#6fb4d8 12%,#9fd2e8 17%,#e2f5fa 22%,#ecf9fc 60%,#e4f4f8 100%);border:1px solid #bfeaf8;border-radius:5px 5px 1px 1px"></div><div style="left:598px;top:706px;width:94px;height:11px;background:linear-gradient(90deg,rgba(40,40,40,0),rgba(30,30,30,.95) 25%,rgba(20,20,20,.95));filter:blur(1.5px)"></div><div class="t" style="left:185px;top:698.44px;font-size:12px;color:#1a2a35">Contrôle Dome</div><div style="left:692px;top:698px;width:16px;height:16px;border:1px solid #2a3a44;border-radius:2px;background:linear-gradient(#b8c8d2,#7d909c);box-shadow:inset 0 0 0 1px #e0f0f8"></div><svg style="position:absolute;left:692px;top:698px;" width="16" height="16" viewBox="0 0 16 16"><path d="M5.0 5.0 L11.0 11.0 M11.0 5.0 L5.0 11.0" stroke="#fff" stroke-width="2.4"/><path d="M5.0 5.0 L11.0 11.0 M11.0 5.0 L5.0 11.0" stroke="#333" stroke-width=".7" opacity=".5"/></svg><div style="left:183px;top:717px;width:525px;height:304px;background:#f0f0f0;border:1px solid #4a5a66"></div><div style="left:184px;top:718px;width:229px;height:258px;border:1px solid;border-color:#fff #a0a0a0 #a0a0a0 #fff"></div><div style="left:187px;top:743px;width:225px;height:225px;background:#fff;border:1px solid #000"></div><svg style="position:absolute;left:187px;top:743px;" width="225" height="225" viewBox="0 0 225 225"><circle cx="112" cy="112" r="100.5" fill="none" stroke="#000" stroke-width="1"/>
<line x1="112" y1="10" x2="112" y2="213" stroke="#000"/>
<line x1="11" y1="112" x2="213" y2="112" stroke="#000"/>
<circle cx="112" cy="112" r="24.5" fill="none" stroke="#000"/>
<path d="M87.5 112 L88.5 162 L90 210" fill="none" stroke="#000"/>
<path d="M136.5 112 L137 162 L139 208" fill="none" stroke="#000"/>
<circle cx="111.5" cy="145" r="15" fill="none" stroke="#d01010" stroke-width="1.2"/>
<line x1="112" y1="137" x2="112" y2="212" stroke="#000" stroke-width="2.5"/>
<line x1="112" y1="112" x2="109.5" y2="212" stroke="#d01010" stroke-width="1"/><rect x="104.5" y="4" width="15" height="12" fill="#f4f4f4" stroke="#000"/><text x="112" y="14" font-size="10" text-anchor="middle" font-family="Liberation Sans">N</text><rect x="3.5" y="106" width="15" height="12" fill="#f4f4f4" stroke="#000"/><text x="11" y="116" font-size="10" text-anchor="middle" font-family="Liberation Sans">W</text><rect x="205.0" y="106" width="15" height="12" fill="#f4f4f4" stroke="#000"/><text x="212.5" y="116" font-size="10" text-anchor="middle" font-family="Liberation Sans">E</text><rect x="104.5" y="206.5" width="15" height="12" fill="#f4f4f4" stroke="#000"/><text x="112" y="216.5" font-size="10" text-anchor="middle" font-family="Liberation Sans">S</text></svg><div style="left:419px;top:728px;width:133px;height:16px;border:1px solid;border-color:#a0a0a0 #fff #fff #a0a0a0"></div><div class="t" style="left:423px;top:730.57px;font-size:11px;">Position courante / Dome</div><div style="left:559px;top:728px;width:55px;height:16px;border:1px solid;border-color:#a0a0a0 #fff #fff #a0a0a0"></div><div class="t" style="left:305px;width:300px;text-align:right;top:730.57px;font-size:11px;">179.0</div><div style="left:615px;top:728px;width:7px;height:16px;border:1px solid;border-color:#a0a0a0 #fff #fff #a0a0a0"></div><div class="t" style="left:616px;top:727.83px;font-size:9px;">°</div><div style="left:419px;top:748px;width:133px;height:16px;border:1px solid;border-color:#a0a0a0 #fff #fff #a0a0a0"></div><div class="t" style="left:423px;top:750.57px;font-size:11px;">Position courante / Telesc</div><div style="left:559px;top:748px;width:55px;height:16px;border:1px solid;border-color:#a0a0a0 #fff #fff #a0a0a0"></div><div class="t" style="left:305px;width:300px;text-align:right;top:750.57px;font-size:11px;">181.6</div><div style="left:615px;top:748px;width:7px;height:16px;border:1px solid;border-color:#a0a0a0 #fff #fff #a0a0a0"></div><div class="t" style="left:616px;top:747.83px;font-size:9px;">°</div><div style="left:419px;top:767px;width:133px;height:15px;border:1px solid;border-color:#a0a0a0 #fff #fff #a0a0a0"></div><div class="t" style="left:423px;top:769.07px;font-size:11px;">Diff d&#x27;Azimut géometrique</div><div style="left:559px;top:767px;width:55px;height:15px;border:1px solid;border-color:#a0a0a0 #fff #fff #a0a0a0"></div><div class="t" style="left:305px;width:300px;text-align:right;top:769.07px;font-size:11px;">2.7</div><div style="left:615px;top:767px;width:7px;height:15px;border:1px solid;border-color:#a0a0a0 #fff #fff #a0a0a0"></div><div class="t" style="left:616px;top:766.83px;font-size:9px;">°</div><div style="left:419px;top:785px;width:133px;height:15px;border:1px solid;border-color:#a0a0a0 #fff #fff #a0a0a0"></div><div class="t" style="left:423px;top:787.07px;font-size:11px;">Azimut Télescope</div><div style="left:559px;top:785px;width:55px;height:15px;border:1px solid;border-color:#a0a0a0 #fff #fff #a0a0a0"></div><div class="t" style="left:305px;width:300px;text-align:right;top:787.07px;font-size:11px;">121.0</div><div style="left:615px;top:785px;width:7px;height:15px;border:1px solid;border-color:#a0a0a0 #fff #fff #a0a0a0"></div><div class="t" style="left:616px;top:784.83px;font-size:9px;">°</div><div style="left:419px;top:807px;width:133px;height:17px;border:1px solid;border-color:#a0a0a0 #fff #fff #a0a0a0"></div><div class="t" style="left:423px;top:810.07px;font-size:11px;">Nelle Position (/Abs. dome)</div><div class="inp" style="left:559px;top:806px;width:55px;height:21px;"></div><div class="t" style="left:562px;top:810.57px;font-size:11px;">170</div><div style="left:615px;top:807px;width:7px;height:17px;border:1px solid;border-color:#a0a0a0 #fff #fff #a0a0a0"></div><div class="t" style="left:616px;top:806.83px;font-size:9px;">°</div><div style="left:681px;top:724px;width:22px;height:22px;border:1px solid #888;border-radius:3px;background:linear-gradient(#fafafa,#dcdcdc)"></div><svg style="position:absolute;left:681px;top:724px;" width="22" height="22" viewBox="0 0 22 22"><path d="M8 4 L14 4 L14 11 L18 11 L11 17 L4 11 L8 11Z" fill="#e01010"/><rect x="4" y="18" width="14" height="2" fill="#e01010"/></svg><div class="btn" style="left:629px;top:761px;width:70px;height:15px;"></div><div class="t" style="left:629px;width:70px;text-align:center;top:763.07px;font-size:11px;">Init / Reset</div><div class="btnb" style="left:629px;top:784px;width:70px;height:16px;"></div><div class="t" style="left:629px;width:70px;text-align:center;top:786.57px;font-size:11px;">Aligner au tel.</div><div class="btn" style="left:629px;top:807px;width:70px;height:16px;"></div><div class="t" style="left:629px;width:70px;text-align:center;top:809.57px;font-size:11px;">Appliquer</div><div class="t" style="left:426px;top:828.57px;font-size:11px;">Parking</div><div style="left:419px;top:839px;width:280px;height:33px;border:1px solid #dcdcdc;border-radius:3px"></div><div class="btn" style="left:422px;top:847px;width:45px;height:16px;"></div><div class="t" style="left:422px;width:45px;text-align:center;top:849.57px;font-size:11px;">Nord</div><div class="btn" style="left:470px;top:847px;width:41px;height:16px;"></div><div class="t" style="left:470px;width:41px;text-align:center;top:849.57px;font-size:11px;">Sud</div><div class="btn" style="left:514px;top:847px;width:36px;height:16px;"></div><div class="t" style="left:514px;width:36px;text-align:center;top:849.57px;font-size:11px;">Est</div><div class="btn" style="left:553px;top:847px;width:46px;height:16px;"></div><div class="t" style="left:553px;width:46px;text-align:center;top:849.57px;font-size:11px;">Ouest</div><div class="btn" style="left:602px;top:847px;width:45px;height:16px;"></div><div class="t" style="left:602px;width:45px;text-align:center;top:849.57px;font-size:11px;">Utilis.</div><div class="inp" style="left:650px;top:845px;width:34px;height:21px;"></div><div class="t" style="left:653px;top:849.57px;font-size:11px;">0</div><div style="left:686px;top:846px;width:7px;height:18px;border:1px solid;border-color:#a0a0a0 #fff #fff #a0a0a0"></div><div class="t" style="left:687px;top:845.83px;font-size:9px;">°</div><div style="left:419px;top:879px;width:289px;height:89px;border-top:1px solid #dcdcdc"></div><div style="left:422px;top:872px;width:111px;height:14px;background:#f0f0f0"></div><div class="t" style="left:424px;top:872.57px;font-size:11px;">Suivi Dome-Telescope</div><div class="cb" style="left:422px;top:889px;width:12px;height:12px;"></div><div class="t" style="left:423px;top:887.64px;font-size:10.5px;color:#2a3a8a">✓</div><div class="t" style="left:437px;top:888.57px;font-size:11px;">Activer suivi coupole sur déplacement sidéral telescope</div><div class="t" style="left:421px;top:906.57px;font-size:11px;color:#8d8d8d">Décalage azimutal max. (°) :</div><div class="inp" style="left:559px;top:903px;width:43px;height:20px;"></div><div class="t" style="left:562px;top:906.57px;font-size:11px;color:#777">4.99999</div><div class="t" style="left:628px;top:907.57px;font-size:11px;">Activité</div><div style="left:671px;top:907px;width:27px;height:16px;border:1px solid #333;background:#f0f0f0"></div><div class="t" style="left:421px;top:928.57px;font-size:11px;color:#8d8d8d">Verifier toute les (minutes) :</div><div class="inp" style="left:559px;top:924px;width:43px;height:22px;"></div><div class="t" style="left:562px;top:928.57px;font-size:11px;color:#777">1</div><svg style="position:absolute;left:585px;top:927px;" width="13" height="16" viewBox="0 0 13 16"><rect x=".5" y=".5" width="12" height="7" rx="3" fill="#e8e8e8" stroke="#555"/><rect x=".5" y="8.5" width="12" height="7" rx="3" fill="#e8e8e8" stroke="#555"/><path d="M3 6L6.5 2.5L10 6Z M3 10L6.5 13.5L10 10Z" fill="#000"/></svg><div class="t" style="left:626px;top:928.57px;font-size:11px;">22:46:14 (5.5°)</div><div class="cb" style="left:422px;top:950px;width:12px;height:13px;"></div><div class="t" style="left:423px;top:948.64px;font-size:10.5px;color:#2a3a8a">✓</div><div class="t" style="left:437px;top:950.57px;font-size:11px;">Déplacer le dome avec le télescope au pointage</div><div class="btnd" style="left:186px;top:979px;width:93px;height:17px;"></div><div class="t" style="left:186px;width:93px;text-align:center;top:982.07px;font-size:11px;color:#8d8d8d">Ouvrir Dome/Abri</div><div class="btn" style="left:285px;top:979px;width:90px;height:17px;"></div><div class="t" style="left:285px;width:90px;text-align:center;top:982.07px;font-size:11px;">Fermer Dome/Abri</div><div class="btnd" style="left:383px;top:979px;width:87px;height:17px;"></div><div class="t" style="left:383px;width:87px;text-align:center;top:982.07px;font-size:11px;color:#8d8d8d;font-weight:bold">Arret Urgence</div><div class="t" style="left:479px;top:981.57px;font-size:11px;color:#8d8d8d">Telescope parké</div><div style="left:564px;top:982px;width:25px;height:12px;border:1px solid #333"></div><div class="t" style="left:598px;top:981.57px;font-size:11px;">Ferm. urgence</div><div style="left:671px;top:982px;width:25px;height:12px;border:1px solid #333"></div><div style="left:186px;top:1002px;width:32px;height:16px;border:1px solid;border-color:#a0a0a0 #fff #fff #a0a0a0"></div><div class="t" style="left:190px;top:1004.57px;font-size:11px;">Etat :</div><div style="left:222px;top:1002px;width:190px;height:16px;border:1px solid;border-color:#a0a0a0 #fff #fff #a0a0a0"></div><div class="t" style="left:226px;top:1004.44px;font-size:12px;font-weight:bold">En attente</div><div style="left:420px;top:1002px;width:222px;height:16px;border:1px solid;border-color:#a0a0a0 #fff #fff #a0a0a0"></div><div class="t" style="left:424px;top:1004.44px;font-size:12px;font-weight:bold">Coupole/Abri ouvert !</div><div class="t" style="left:644px;top:1006.57px;font-size:11px;">Comm.</div><div style="left:679px;top:1007px;width:24px;height:12px;background:#f00;border:1px solid #800"></div><div style="left:1465px;top:638px;width:211px;height:367px;background:#3a3a3a;border:1px solid #1a1a1a;border-radius:5px 5px 2px 2px"></div><div style="left:1466px;top:639px;width:209px;height:24px;background:linear-gradient(90deg,#b8b8b8 0%,#dcdcdc 20%,#e4e4e4 60%,#c8c8c8 100%);border-radius:4px 4px 0 0"></div><div class="t" style="left:1472px;top:643.44px;font-size:12px;color:#222">Seuils: alpAql-1 | 1530x</div><div style="left:1470px;top:663px;width:202px;height:337px;background:#f0f0f0;border:1px solid #d0e4ee;box-shadow:inset 0 0 0 1px #8aa0b0"></div><div style="left:1473px;top:666px;width:15px;height:330px;background:linear-gradient(90deg,#e6e6e6,#f6f6f6 50%,#e6e6e6);border:1px solid #d8d8d8"></div><div class="t" style="left:1476px;top:669.09px;font-size:7px;color:#444">▲</div><div class="t" style="left:1476px;top:985.09px;font-size:7px;color:#444">▼</div><div style="left:1474px;top:894px;width:13px;height:15px;border:1px solid #8a8a8a;border-radius:2px;background:linear-gradient(90deg,#f4f4f4,#d8d8d8)"></div><div style="left:1488px;top:680px;width:15px;height:300px;background:linear-gradient(#fff 0%,#fff 51%,#999 64%,#222 75%,#000 100%)"></div><div style="left:1504px;top:666px;width:16px;height:330px;background:linear-gradient(90deg,#e6e6e6,#f6f6f6 50%,#e6e6e6);border:1px solid #d8d8d8"></div><div class="t" style="left:1507px;top:669.09px;font-size:7px;color:#444">▲</div><div class="t" style="left:1507px;top:985.09px;font-size:7px;color:#444">▼</div><div style="left:1505px;top:827px;width:14px;height:15px;border:1px solid #8a8a8a;border-radius:2px;background:linear-gradient(90deg,#f4f4f4,#d8d8d8)"></div><div style="left:1524px;top:669px;width:61px;height:325px;background:#000;border:1px solid #999"></div><svg style="position:absolute;left:1524px;top:669px;" width="61" height="325" viewBox="0 0 61 325"><path d="M2 236 Q2 243 7 243 L61 243" fill="none" stroke="#a0a0a0" stroke-width="1.2"/></svg><div class="btn" style="left:1597px;top:976px;width:67px;height:20px;"></div><div class="t" style="left:1597px;width:67px;text-align:center;top:980.0400000000001px;font-size:12px;">Annuler</div><div style="left:1593px;top:543px;width:267px;height:437px;background:#1b3140;border-radius:6px 6px 2px 2px;opacity:.85"></div><div style="left:1594px;top:544px;width:265px;height:435px;background:linear-gradient(90deg,#8a8a8a 0%,#c8d0d4 3%,#e8f2f6 100%);border:1px solid #bfeaf8;border-radius:5px 5px 1px 1px"></div><div style="left:1595px;top:545px;width:263px;height:20px;background:linear-gradient(90deg,#777 0%,#5e5e5e 20%,#c0dcec 23%,#e0f2fa 24.5%,#484848 28%,#3a3a3a 50%,#444 88%,#c8dce6 95%,#eef6fa 100%);"></div><div class="t" style="left:1601px;top:548.44px;font-size:12px;color:#111;text-shadow:0 0 6px #fff,0 0 6px #fff">ATIK HS</div><div style="left:1838px;top:548px;width:15px;height:15px;border:1px solid #2a3a44;border-radius:2px;background:linear-gradient(#b8c8d2,#7d909c);box-shadow:inset 0 0 0 1px #e0f0f8"></div><svg style="position:absolute;left:1838px;top:548px;" width="15" height="15" viewBox="0 0 15 15"><path d="M4.5 4.5 L10.5 10.5 M10.5 4.5 L4.5 10.5" stroke="#fff" stroke-width="2.4"/><path d="M4.5 4.5 L10.5 10.5 M10.5 4.5 L4.5 10.5" stroke="#333" stroke-width=".7" opacity=".5"/></svg><div style="left:1599px;top:565px;width:256px;height:410px;background:#f0f0f0;border:1px solid #6a8090"></div><div style="left:1602px;top:567px;width:57px;height:22px;background:#fff;border:1px solid #898c95;border-bottom:none"></div><div class="t" style="left:1608px;top:570.44px;font-size:12px;">ATIK HS</div><div style="left:1601px;top:588px;width:247px;height:383px;background:#fff;border:1px solid #898c95"></div><div style="left:1603px;top:588px;width:55px;height:2px;background:#fff"></div><div class="t" style="left:1610px;top:636.57px;font-size:11px;">Temps:</div><div style="left:1613px;top:662px;width:227px;height:1px;background:#a0a0a0"></div><div class="t" style="left:1610px;top:671.57px;font-size:11px;">Pose en sec.</div><div class="inp" style="left:1676px;top:668px;width:39px;height:20px;"></div><div class="t" style="left:1680px;top:671.57px;font-size:11px;">0.1</div><div class="t" style="left:1718px;top:667.57px;font-size:11px;">Bouclage</div><div class="cbd" style="left:1795px;top:667px;width:13px;height:13px;"></div><div style="left:1814px;top:665px;width:18px;height:19px;border:1px solid #c6c6c6;border-radius:2px;background:#f4f4f4"></div><div class="t" style="left:1819px;top:666.57px;font-size:11px;color:#aaa">✕</div><div class="t" style="left:1718px;top:684.57px;font-size:11px;">Bouclage infini</div><div class="cbd" style="left:1795px;top:684px;width:13px;height:13px;"></div><div class="t" style="left:1797px;top:682.57px;font-size:11px;color:#b6b6b6">✓</div><div class="t" style="left:1610px;top:703.57px;font-size:11px;">Nbre de boucles</div><div class="inpd" style="left:1691px;top:700px;width:54px;height:22px;"></div><div class="t" style="left:1695px;top:705.5px;font-size:11.5px;color:#6d6d6d">10</div><svg style="position:absolute;left:1728px;top:702px;" width="14" height="18" viewBox="0 0 14 18"><rect x="0.5" y="0.5" width="13" height="8.0" rx="3" fill="#e8e8e8" stroke="#555"/><rect x="0.5" y="9.5" width="13" height="8.0" rx="3" fill="#e8e8e8" stroke="#555"/><path d="M3 7.0 L7 3.0 L11 7.0Z" fill="#000"/><path d="M3 12.0 L7 16.0 L11 12.0Z" fill="#000"/></svg><div class="t" style="left:1750px;top:703.57px;font-size:11px;">Délai (s)</div><div class="inp" style="left:1797px;top:700px;width:40px;height:22px;"></div><div class="t" style="left:1801px;top:705.5px;font-size:11.5px;">1</div><svg style="position:absolute;left:1820px;top:702px;" width="14" height="18" viewBox="0 0 14 18"><rect x="0.5" y="0.5" width="13" height="8.0" rx="3" fill="#e8e8e8" stroke="#555"/><rect x="0.5" y="9.5" width="13" height="8.0" rx="3" fill="#e8e8e8" stroke="#555"/><path d="M3 7.0 L7 3.0 L11 7.0Z" fill="#000"/><path d="M3 12.0 L7 16.0 L11 12.0Z" fill="#000"/></svg><div style="left:1613px;top:730px;width:227px;height:1px;background:#a0a0a0"></div><div class="t" style="left:1610px;top:738.57px;font-size:11px;">BinX:</div><div class="inp" style="left:1639px;top:736px;width:40px;height:22px;"></div><div class="t" style="left:1643px;top:741.5px;font-size:11.5px;">1</div><svg style="position:absolute;left:1662px;top:738px;" width="14" height="18" viewBox="0 0 14 18"><rect x="0.5" y="0.5" width="13" height="8.0" rx="3" fill="#e8e8e8" stroke="#555"/><rect x="0.5" y="9.5" width="13" height="8.0" rx="3" fill="#e8e8e8" stroke="#555"/><path d="M3 7.0 L7 3.0 L11 7.0Z" fill="#000"/><path d="M3 12.0 L7 16.0 L11 12.0Z" fill="#000"/></svg><div class="t" style="left:1689px;top:738.57px;font-size:11px;">BinY:</div><div class="inp" style="left:1724px;top:736px;width:40px;height:22px;"></div><div class="t" style="left:1728px;top:741.5px;font-size:11.5px;">1</div><svg style="position:absolute;left:1747px;top:738px;" width="14" height="18" viewBox="0 0 14 18"><rect x="0.5" y="0.5" width="13" height="8.0" rx="3" fill="#e8e8e8" stroke="#555"/><rect x="0.5" y="9.5" width="13" height="8.0" rx="3" fill="#e8e8e8" stroke="#555"/><path d="M3 7.0 L7 3.0 L11 7.0Z" fill="#000"/><path d="M3 12.0 L7 16.0 L11 12.0Z" fill="#000"/></svg><div class="cb" style="left:1780px;top:740px;width:13px;height:13px;"></div><div class="t" style="left:1782px;top:738.57px;font-size:11px;color:#2a3a8a">✓</div><div class="t" style="left:1797px;top:739.57px;font-size:11px;">Lier</div><div class="btn" style="left:1623px;top:765px;width:88px;height:22px;"></div><div class="t" style="left:1623px;width:88px;text-align:center;top:770.57px;font-size:11px;">Exp Longue</div><div class="btn" style="left:1743px;top:765px;width:87px;height:22px;"></div><div class="t" style="left:1743px;width:87px;text-align:center;top:770.57px;font-size:11px;">Exp. courte</div><div style="left:1621px;top:790px;width:209px;height:14px;background:#f00"></div><div style="left:1606px;top:828px;width:240px;height:139px;background:#fff;border:1px solid #898c95"></div><div style="left:1607px;top:810px;width:47px;height:19px;background:linear-gradient(#f3f3f3,#e3e3e3);border:1px solid #898c95;border-bottom:none"></div><div class="t" style="left:1611px;top:813.57px;font-size:11px;">Camera</div><div style="left:1654px;top:810px;width:47px;height:19px;background:linear-gradient(#f3f3f3,#e3e3e3);border:1px solid #898c95;border-bottom:none"></div><div class="t" style="left:1658px;top:813.57px;font-size:11px;">Options</div><div style="left:1757px;top:810px;width:58px;height:19px;background:linear-gradient(#f3f3f3,#e3e3e3);border:1px solid #898c95;border-bottom:none"></div><div class="t" style="left:1761px;top:813.57px;font-size:11px;">Information</div><div style="left:1702px;top:807px;width:55px;height:22px;background:#fff;border:1px solid #898c95;border-bottom:none"></div><div class="t" style="left:1708px;top:809.5px;font-size:11.5px;">Guidage</div><div style="left:1815px;top:810px;width:15px;height:16px;border:1px solid #aaa;background:#ececec"></div><div class="t" style="left:1819px;top:812.96px;font-size:8px;color:#666">◂</div><div style="left:1830px;top:810px;width:15px;height:16px;border:1px solid #aaa;background:#ececec"></div><div class="t" style="left:1834px;top:812.96px;font-size:8px;color:#666">▸</div><div class="btnd" style="left:1614px;top:838px;width:118px;height:22px;"></div><div class="t" style="left:1614px;width:118px;text-align:center;top:843.57px;font-size:11px;color:#8d8d8d">Calibration</div><div class="btnd" style="left:1738px;top:838px;width:97px;height:22px;"></div><div class="t" style="left:1738px;width:97px;text-align:center;top:843.57px;font-size:11px;color:#8d8d8d">Calibration AO</div><div class="btnd" style="left:1614px;top:866px;width:118px;height:22px;"></div><div class="t" style="left:1614px;width:118px;text-align:center;top:871.57px;font-size:11px;color:#8d8d8d">Démarrer Guidage</div><div class="btnd" style="left:1738px;top:866px;width:97px;height:22px;"></div><div class="t" style="left:1738px;width:97px;text-align:center;top:871.57px;font-size:11px;color:#8d8d8d">Cal. Sharplock</div><div class="btn" style="left:1614px;top:891px;width:118px;height:22px;"></div><div class="t" style="left:1614px;width:118px;text-align:center;top:896.57px;font-size:11px;">Abandon</div><div class="cb" style="left:1614px;top:922px;width:13px;height:13px;"></div><div class="t" style="left:1630px;top:921.57px;font-size:11px;">Trouver l&#x27;étoile de guidage automatiquement</div><div class="t" style="left:1612px;top:944.57px;font-size:11px;">Port de guidage : ASCOM compliant guider</div></body></html>
